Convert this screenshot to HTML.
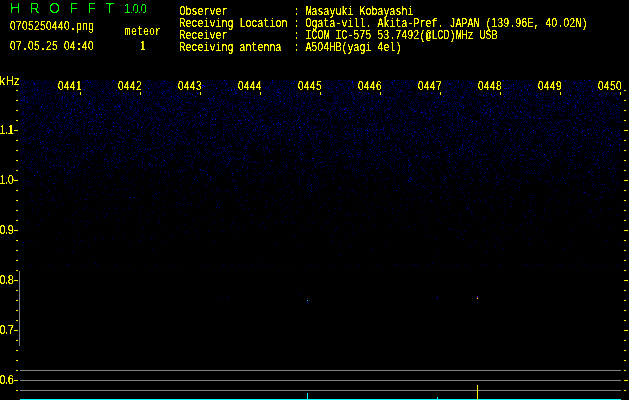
<!DOCTYPE html>
<html><head><meta charset="utf-8"><title>HROFFT 1.0.0</title>
<style>
html,body{margin:0;padding:0;background:#000;}
body{width:629px;height:400px;overflow:hidden;position:relative;color:#ff0;}
#txt{position:absolute;left:0;top:0;width:629px;height:400px;filter:url(#cr)}
.l{position:absolute;font-family:"Liberation Sans",sans-serif;font-size:10px;line-height:12px;height:12px;white-space:pre;letter-spacing:0.438px;transform:scaleY(1.25);transform-origin:0 0}
.t{display:inline-block;font-family:"Liberation Mono",monospace;font-size:10px;line-height:12px;letter-spacing:0;transform:scaleY(1.088);transform-origin:0 8.67px;vertical-align:baseline}
.w{display:inline-block;width:6px;letter-spacing:0;font-family:"Liberation Sans",sans-serif;font-size:9.2px;line-height:12px;vertical-align:baseline;transform-origin:0 8.67px;transform:scale(0.72,1.088)}
.s{position:absolute;font-family:"Liberation Sans",sans-serif;white-space:pre;}
.g{color:#0f0;}
.xl{top:79px}
.yl{left:-0.5px;font-size:11px;line-height:14px;letter-spacing:-0.5px;transform:scaleY(1.14);transform-origin:0 0}
svg{position:absolute;left:0;top:0}
</style></head><body>
<svg width="629" height="400" viewBox="0 0 629 400" shape-rendering="crispEdges">
<defs><filter id="cr" x="0" y="0" width="100%" height="100%" color-interpolation-filters="sRGB"><feComponentTransfer><feFuncA type="linear" slope="6" intercept="-2.0"/></feComponentTransfer></filter>
<filter id="cr2" x="0" y="0" width="100%" height="100%" color-interpolation-filters="sRGB"><feComponentTransfer><feFuncA type="linear" slope="6" intercept="-3"/></feComponentTransfer></filter></defs>
<g fill="none" stroke-width="1" transform="translate(0,0.5)">
<path stroke="#000030" d="M21 80h1h1m1 0h1m4 0h1m1 0h1h1m2 0h1m2 0h1m4 0h1h1m15 0h1m1 0h1m5 0h1m2 0h1m10 0h1m1 0h1h1h1m2 0h1m4 0h1h1m1 0h1m4 0h1m9 0h1m6 0h1m10 0h1m4 0h1m4 0h1m6 0h1h1m8 0h1h1m5 0h1h1m17 0h1h1m5 0h1m3 0h1h1m1 0h1m4 0h1m1 0h1m9 0h1m4 0h1h1h1m1 0h1m3 0h1m6 0h1m1 0h1m3 0h1m1 0h1m3 0h1m3 0h1h1m12 0h1m18 0h1m7 0h1m1 0h1m3 0h1m1 0h1m6 0h1m2 0h1m2 0h1m2 0h1h1m4 0h1m2 0h1m1 0h1h1m7 0h1m3 0h1m1 0h1m1 0h1h1m2 0h1h1m3 0h1h1m3 0h1m11 0h1m8 0h1m2 0h1m5 0h1m15 0h1m2 0h1h1m2 0h1m8 0h1h1h1m1 0h1m2 0h1m9 0h1m4 0h1m2 0h1m6 0h1m6 0h1m8 0h1m1 0h1h1m9 0h1m2 0h1m2 0h1m4 0h1m2 0h1m3 0h1m1 0h1m5 0h1m3 0h1m8 0h1m3 0h1m1 0h1m1 0h1m3 0h1m8 0h1m2 0h1h1m2 0h1m3 0h1m4 0h1m4 0h1m2 0h1m3 0h1m6 0h1m2 0h1h1m5 0h1m4 0h1m2 0h1h1m3 0h1m2 0h1m2 0h1m1 0h1m6 0h1m6 0h1M24 81h1m3 0h1m3 0h1m12 0h1m1 0h1m3 0h1m5 0h1m4 0h1m1 0h1h1m5 0h1m2 0h1m4 0h1m1 0h1m1 0h1m1 0h1m4 0h1m1 0h1m2 0h1m5 0h1m6 0h1m2 0h1h1m2 0h1m3 0h1h1m4 0h1m13 0h1m4 0h1m4 0h1m9 0h1m1 0h1m5 0h1m3 0h1m5 0h1m4 0h1m1 0h1h1m1 0h1m10 0h1h1m12 0h1m1 0h1m4 0h1m11 0h1m3 0h1m2 0h1m4 0h1m5 0h1m10 0h1m1 0h1m5 0h1m2 0h1m8 0h1h1m1 0h1h1m12 0h1m3 0h1m41 0h1m1 0h1m4 0h1m5 0h1m5 0h1m5 0h1h1m4 0h1m12 0h1h1m1 0h1h1m3 0h1m4 0h1m1 0h1m2 0h1h1m1 0h1h1m2 0h1h1m4 0h1m1 0h1m3 0h1m1 0h1m7 0h1m3 0h1m2 0h1m1 0h1m3 0h1m6 0h1h1m9 0h1m6 0h1m9 0h1m9 0h1m3 0h1m5 0h1h1m5 0h1m3 0h1m1 0h1h1m2 0h1m3 0h1m3 0h1m12 0h1m9 0h1m6 0h1m2 0h1m16 0h1m23 0h1m6 0h1m1 0h1m5 0h1h1m2 0h1M34 82h1h1m1 0h1m2 0h1h1m6 0h1m2 0h1m3 0h1m2 0h1m2 0h1h1m1 0h1m7 0h1m4 0h1m5 0h1m8 0h1m2 0h1m10 0h1m2 0h1m7 0h1m6 0h1m7 0h1m1 0h1m1 0h1m3 0h1h1m5 0h1m8 0h1m8 0h1m3 0h1m9 0h1m1 0h1m14 0h1m4 0h1m2 0h1h1m2 0h1m2 0h1m6 0h1m2 0h1h1m9 0h1m6 0h1m3 0h1m4 0h1m6 0h1m5 0h1m2 0h1m2 0h1m2 0h1m20 0h1h1m2 0h1h1m4 0h1m6 0h1m2 0h1m1 0h1m6 0h1m6 0h1h1m2 0h1m4 0h1h1m7 0h1m9 0h1m3 0h1m5 0h1h1m1 0h1m1 0h1m3 0h1m3 0h1m9 0h1m5 0h1m8 0h1m2 0h1m1 0h1m7 0h1m1 0h1m7 0h1m1 0h1h1m2 0h1h1m3 0h1m2 0h1m6 0h1m4 0h1m18 0h1m9 0h1m1 0h1m3 0h1m5 0h1m4 0h1h1m4 0h1m15 0h1m5 0h1m5 0h1h1m7 0h1m3 0h1m3 0h1h1m8 0h1m7 0h1m6 0h1h1m1 0h1m4 0h1m4 0h1m10 0h1m2 0h1m3 0h1h1m5 0h1m1 0h1h1h1M21 83h1m2 0h1h1m7 0h1m2 0h1m9 0h1m3 0h1h1m11 0h1m15 0h1h1m12 0h1h1m2 0h1m2 0h1m4 0h1m8 0h1m4 0h1m11 0h1m8 0h1m5 0h1m13 0h1m3 0h1h1h1m11 0h1m2 0h1m17 0h1m5 0h1m15 0h1m2 0h1m2 0h1m3 0h1h1h1m3 0h1m8 0h1m4 0h1m3 0h1m7 0h1m3 0h1m5 0h1m9 0h1m24 0h1m17 0h1m2 0h1m10 0h1m3 0h1m5 0h1m3 0h1m18 0h1m8 0h1m6 0h1m9 0h1m7 0h1m8 0h1m2 0h1h1m3 0h1m1 0h1m7 0h1m4 0h1m1 0h1h1h1h1h1m7 0h1m10 0h1m3 0h1h1m10 0h1m1 0h1m4 0h1m6 0h1m2 0h1m1 0h1m1 0h1m3 0h1m4 0h1m7 0h1h1h1m15 0h1m13 0h1m2 0h1m5 0h1h1m8 0h1m6 0h1h1m10 0h1m3 0h1m2 0h1m6 0h1m2 0h1m4 0h1m6 0h1h1M25 84h1m1 0h1m12 0h1m2 0h1m3 0h1m10 0h1m2 0h1h1m7 0h1h1h1m8 0h1m1 0h1m10 0h1h1m1 0h1m1 0h1m13 0h1m2 0h1m11 0h1m9 0h1m27 0h1h1m1 0h1h1m6 0h1m3 0h1m20 0h1m6 0h1m2 0h1m1 0h1m13 0h1m4 0h1m3 0h1h1m11 0h1m12 0h1m6 0h1m2 0h1m7 0h1m5 0h1m11 0h1m3 0h1h1m5 0h1h1h1m2 0h1m21 0h1m3 0h1h1m7 0h1m1 0h1h1m9 0h1m4 0h1m1 0h1m2 0h1m2 0h1m7 0h1h1m7 0h1m8 0h1m3 0h1m5 0h1m6 0h1h1m12 0h1m5 0h1m2 0h1m24 0h1m5 0h1m4 0h1m12 0h1m10 0h1m4 0h1m1 0h1h1m11 0h1m1 0h1m1 0h1m5 0h1m4 0h1m2 0h1h1m4 0h1m8 0h1m6 0h1m6 0h1m1 0h1m13 0h1m3 0h1m7 0h1h1h1h1m15 0h1m2 0h1M23 85h1m7 0h1m3 0h1m1 0h1m4 0h1m10 0h1m5 0h1m2 0h1m2 0h1m4 0h1m3 0h1m6 0h1m23 0h1m2 0h1m2 0h1m1 0h1m2 0h1m1 0h1m2 0h1m10 0h1h1m1 0h1h1m3 0h1m7 0h1m1 0h1h1m13 0h1h1m2 0h1m4 0h1m21 0h1h1m1 0h1h1m3 0h1m4 0h1m5 0h1m8 0h1m17 0h1h1m12 0h1m7 0h1m1 0h1m10 0h1m16 0h1m2 0h1m7 0h1m8 0h1m19 0h1m3 0h1m2 0h1m3 0h1m5 0h1h1m7 0h1m9 0h1m12 0h1m4 0h1m4 0h1m5 0h1m20 0h1m5 0h1m4 0h1m5 0h1m4 0h1m7 0h1m9 0h1m2 0h1m1 0h1m5 0h1m1 0h1h1h1h1m10 0h1m5 0h1h1m1 0h1m11 0h1m8 0h1m19 0h1m21 0h1m6 0h1m17 0h1m3 0h1m2 0h1m18 0h1m2 0h1m2 0h1M24 86h1m3 0h1m11 0h1m3 0h1m3 0h1m2 0h1m11 0h1m1 0h1m4 0h1m1 0h1m4 0h1m6 0h1m6 0h1m12 0h1m7 0h1m12 0h1m6 0h1m27 0h1m5 0h1m4 0h1m3 0h1m16 0h1m1 0h1m15 0h1m4 0h1m1 0h1m14 0h1m18 0h1m28 0h1m5 0h1m18 0h1m2 0h1m8 0h1m9 0h1m1 0h1m12 0h1m19 0h1m5 0h1m15 0h1m3 0h1m2 0h1m1 0h1m5 0h1h1m5 0h1m15 0h1m16 0h1m2 0h1m3 0h1m14 0h1m22 0h1m16 0h1m3 0h1h1m5 0h1m7 0h1m12 0h1m7 0h1m2 0h1m16 0h1m8 0h1m24 0h1m7 0h1m10 0h1M20 87h1m4 0h1m3 0h1m18 0h1m17 0h1m15 0h1h1m11 0h1m1 0h1m5 0h1m4 0h1m7 0h1m1 0h1h1m8 0h1m3 0h1m13 0h1m2 0h1m5 0h1m1 0h1m7 0h1m4 0h1m8 0h1m1 0h1m21 0h1m15 0h1m13 0h1m7 0h1m2 0h1m6 0h1m9 0h1m1 0h1m2 0h1h1m7 0h1m14 0h1m1 0h1m2 0h1m8 0h1m21 0h1h1m9 0h1m2 0h1m9 0h1m6 0h1m9 0h1m6 0h1m10 0h1m4 0h1h1m4 0h1m10 0h1m11 0h1h1m11 0h1h1m10 0h1m4 0h1m1 0h1m2 0h1m7 0h1m2 0h1m13 0h1m23 0h1m6 0h1m6 0h1h1m5 0h1m8 0h1m7 0h1m1 0h1h1m18 0h1m7 0h1m15 0h1m1 0h1m14 0h1m7 0h1m2 0h1m4 0h1M22 88h1m5 0h1m6 0h1m18 0h1m7 0h1m11 0h1m2 0h1m34 0h1m8 0h1m9 0h1m13 0h1m117 0h1m3 0h1m14 0h1m2 0h1m8 0h1m1 0h1m29 0h1m4 0h1m2 0h1m31 0h1m17 0h1m20 0h1h1m12 0h1m1 0h1m11 0h1m1 0h1m6 0h1m32 0h1h1m6 0h1h1m34 0h1m18 0h1m4 0h1m10 0h1m4 0h1m21 0h1m26 0h1m6 0h1M20 89h1h1m31 0h1m24 0h1h1m10 0h1m5 0h1m37 0h1m10 0h1m2 0h1m13 0h1m4 0h1m10 0h1m2 0h1m8 0h1m10 0h1m9 0h1m25 0h1m7 0h1m8 0h1m21 0h1m4 0h1m24 0h1m10 0h1h1m9 0h1m6 0h1m31 0h1m33 0h1m16 0h1m8 0h1m22 0h1m4 0h1m31 0h1m2 0h1m16 0h1m31 0h1m23 0h1m19 0h1m1 0h1m11 0h1h1m2 0h1m9 0h1m7 0h1M41 90h1m20 0h1m5 0h1m3 0h1h1m3 0h1m1 0h1m5 0h1m35 0h1m2 0h1m31 0h1h1m1 0h1m9 0h1m19 0h1m12 0h1m4 0h1m13 0h1m4 0h1h1m6 0h1m16 0h1m31 0h1m5 0h1m5 0h1m31 0h1m19 0h1m16 0h1m2 0h1h1m6 0h1m7 0h1m43 0h1m13 0h1m3 0h1m19 0h1m4 0h1m17 0h1m2 0h1m10 0h1m9 0h1m24 0h1m18 0h1h1m8 0h1m16 0h1m10 0h1m10 0h1M58 91h1m5 0h1m4 0h1m6 0h1m2 0h1h1m5 0h1m2 0h1m1 0h1m11 0h1m19 0h1m32 0h1m45 0h1m7 0h1m4 0h1m43 0h1m3 0h1m6 0h1m1 0h1m9 0h1m3 0h1m46 0h1m14 0h1m48 0h1m1 0h1m3 0h1m2 0h1m15 0h1m9 0h1m10 0h1m30 0h1m51 0h1m1 0h1m2 0h1m37 0h1m30 0h1M20 92h1h1m34 0h1m5 0h1m64 0h1m16 0h1m26 0h1m10 0h1m8 0h1h1m39 0h1m42 0h1h1m9 0h1m2 0h1m3 0h1m37 0h1m9 0h1h1m45 0h1m12 0h1m1 0h1m27 0h1m4 0h1m7 0h1m2 0h1m9 0h1m5 0h1m20 0h1m41 0h1m1 0h1m15 0h1m73 0h1M90 93h1m40 0h1m80 0h1m31 0h1m1 0h1m233 0h1m48 0h1m78 0h1"/>
<path stroke="#000038" d="M20 80h1m5 0h1m9 0h1m2 0h1h1m5 0h1m2 0h1m6 0h1m2 0h1m4 0h1m7 0h1m23 0h1m23 0h1m20 0h1m8 0h1m11 0h1m25 0h1m9 0h1m13 0h1m5 0h1m11 0h1m1 0h1m2 0h1m17 0h1m5 0h1m19 0h1m4 0h1m2 0h1m6 0h1m24 0h1m31 0h1m32 0h1m1 0h1m14 0h1m3 0h1m41 0h1m5 0h1m8 0h1m12 0h1m5 0h1m3 0h1m1 0h1m9 0h1m4 0h1m9 0h1m17 0h1m4 0h1m24 0h1m5 0h1m4 0h1m2 0h1m13 0h1m6 0h1m13 0h1m6 0h1M20 81h1m8 0h1m3 0h1m10 0h1m3 0h1m24 0h1m10 0h1m36 0h1m31 0h1m41 0h1m5 0h1m5 0h1m16 0h1h1m1 0h1m2 0h1m19 0h1m18 0h1m2 0h1m2 0h1m3 0h1m10 0h1m2 0h1m2 0h1m1 0h1m16 0h1m13 0h1m2 0h1m1 0h1m13 0h1m31 0h1m8 0h1m21 0h1m13 0h1m3 0h1m27 0h1m4 0h1h1m3 0h1m13 0h1m16 0h1m2 0h1m2 0h1m47 0h1m21 0h1h1m14 0h1m4 0h1m1 0h1m1 0h1m2 0h1m1 0h1h1M20 82h1m9 0h1m12 0h1m3 0h1m5 0h1h1m12 0h1m7 0h1m8 0h1h1m1 0h1m32 0h1m7 0h1m6 0h1m13 0h1m5 0h1m1 0h1m6 0h1m9 0h1m1 0h1m12 0h1m4 0h1m22 0h1m1 0h1m4 0h1m11 0h1m5 0h1m20 0h1m10 0h1h1h1m11 0h1m13 0h1m2 0h1h1m5 0h1m17 0h1m4 0h1m22 0h1m1 0h1m2 0h1m18 0h1m1 0h1m11 0h1m13 0h1h1m7 0h1m31 0h1m34 0h1m8 0h1m1 0h1m26 0h1m6 0h1m11 0h1m4 0h1m9 0h1m2 0h1m10 0h1m31 0h1m3 0h1M20 83h1m8 0h1m10 0h1m1 0h1m1 0h1m19 0h1m11 0h1m48 0h1m1 0h1h1m14 0h1m9 0h1m1 0h1m2 0h1m8 0h1m12 0h1m1 0h1m4 0h1m29 0h1m1 0h1m20 0h1m1 0h1m5 0h1m7 0h1m24 0h1m14 0h1h1m4 0h1h1m6 0h1h1m1 0h1m14 0h1m4 0h1m12 0h1m24 0h1m2 0h1m17 0h1m8 0h1m1 0h1m28 0h1m3 0h1m9 0h1m3 0h1h1h1m9 0h1m7 0h1m4 0h1m13 0h1m17 0h1m21 0h1m7 0h1m1 0h1m3 0h1m26 0h1m7 0h1m3 0h1h1m1 0h1m1 0h1m3 0h1m7 0h1m1 0h1m1 0h1m2 0h1m2 0h1m6 0h1M21 84h1m1 0h1m4 0h1m4 0h1m2 0h1m22 0h1m6 0h1m23 0h1m15 0h1m23 0h1m4 0h1m12 0h1m5 0h1m6 0h1m2 0h1m7 0h1m5 0h1m10 0h1m6 0h1m3 0h1m6 0h1m2 0h1m9 0h1m6 0h1m4 0h1m21 0h1m17 0h1m3 0h1m8 0h1m15 0h1m5 0h1m5 0h1m16 0h1m1 0h1m1 0h1m8 0h1m2 0h1m8 0h1m21 0h1m5 0h1m4 0h1m6 0h1m7 0h1m3 0h1m9 0h1m4 0h1h1m1 0h1m2 0h1h1m14 0h1m4 0h1m10 0h1h1m1 0h1m8 0h1m14 0h1m7 0h1m12 0h1m3 0h1m4 0h1m12 0h1m7 0h1m3 0h1h1m1 0h1m2 0h1m2 0h1m8 0h1m2 0h1m3 0h1m5 0h1h1m17 0h1m20 0h1M20 85h1m7 0h1m4 0h1m16 0h1m4 0h1m4 0h1m3 0h1m6 0h1h1m2 0h1m22 0h1m4 0h1m3 0h1m6 0h1m10 0h1m3 0h1m4 0h1m3 0h1m15 0h1m6 0h1h1m27 0h1m4 0h1m9 0h1m11 0h1m16 0h1m2 0h1m13 0h1m22 0h1m3 0h1m5 0h1m19 0h1m4 0h1m1 0h1m3 0h1m1 0h1m9 0h1m2 0h1m1 0h1m33 0h1m11 0h1m10 0h1m14 0h1m5 0h1m8 0h1m4 0h1m19 0h1m7 0h1m5 0h1m9 0h1m21 0h1h1m19 0h1m1 0h1m5 0h1m6 0h1m14 0h1m2 0h1h1m7 0h1h1m25 0h1m2 0h1m1 0h1m7 0h1m9 0h1m4 0h1M21 86h1m4 0h1m2 0h1m8 0h1m3 0h1m4 0h1m26 0h1m3 0h1m6 0h1m6 0h1h1m12 0h1m9 0h1m2 0h1m7 0h1m5 0h1m12 0h1m1 0h1m10 0h1m2 0h1m14 0h1m27 0h1m7 0h1h1m20 0h1h1m10 0h1m1 0h1m2 0h1m1 0h1h1m6 0h1m3 0h1m8 0h1m6 0h1h1m1 0h1m3 0h1m1 0h1m56 0h1m3 0h1h1m11 0h1m1 0h1m7 0h1h1m24 0h1h1m1 0h1m4 0h1m11 0h1m9 0h1m4 0h1h1h1m8 0h1m10 0h1m1 0h1m6 0h1m4 0h1m3 0h1m8 0h1m3 0h1m3 0h1m4 0h1m8 0h1m1 0h1h1m18 0h1m2 0h1m3 0h1m1 0h1m10 0h1m1 0h1m3 0h1h1h1m4 0h1m33 0h1h1m2 0h1m10 0h1m5 0h1M21 87h1m12 0h1m2 0h1m7 0h1m3 0h1m4 0h1m24 0h1m11 0h1h1m11 0h1m1 0h1m3 0h1m1 0h1m4 0h1m13 0h1m15 0h1m3 0h1h1m5 0h1m5 0h1m3 0h1m2 0h1m4 0h1m1 0h1m7 0h1m39 0h1m2 0h1m2 0h1m4 0h1h1m18 0h1m11 0h1m6 0h1m3 0h1m1 0h1m3 0h1m1 0h1m9 0h1m1 0h1m30 0h1m13 0h1m2 0h1m33 0h1m1 0h1m9 0h1m15 0h1m24 0h1h1m3 0h1m1 0h1m13 0h1m15 0h1m5 0h1m7 0h1m1 0h1m6 0h1m10 0h1m12 0h1m2 0h1m5 0h1m3 0h1m19 0h1m1 0h1m9 0h1m8 0h1m7 0h1m6 0h1m2 0h1m1 0h1m2 0h1h1m13 0h1M55 88h1m10 0h1h1m11 0h1m6 0h1m7 0h1m5 0h1m1 0h1m1 0h1m2 0h1h1m1 0h1m7 0h1m4 0h1m5 0h1m5 0h1m34 0h1h1m14 0h1m4 0h1m1 0h1m7 0h1h1m4 0h1m3 0h1m14 0h1m13 0h1h1m8 0h1m4 0h1m2 0h1m2 0h1m18 0h1m7 0h1m13 0h1m2 0h1m7 0h1m4 0h1m1 0h1h1m7 0h1m19 0h1m2 0h1m4 0h1h1m9 0h1m3 0h1m10 0h1m10 0h1h1m22 0h1m5 0h1m4 0h1m13 0h1m2 0h1m4 0h1m1 0h1m2 0h1m8 0h1m5 0h1m21 0h1m11 0h1m5 0h1m1 0h1m2 0h1h1m12 0h1m5 0h1m16 0h1m2 0h1m3 0h1m2 0h1h1m9 0h1m4 0h1m3 0h1m7 0h1m1 0h1m23 0h1m1 0h1M31 89h1m6 0h1m3 0h1m7 0h1m1 0h1m5 0h1m16 0h1m5 0h1m11 0h1m9 0h1m6 0h1h1m3 0h1m21 0h1h1m14 0h1m11 0h1m2 0h1h1m17 0h1m3 0h1m12 0h1m2 0h1h1m5 0h1h1h1m18 0h1m6 0h1m1 0h1m3 0h1m3 0h1m20 0h1m3 0h1m11 0h1m1 0h1m4 0h1m11 0h1m12 0h1m4 0h1m4 0h1m4 0h1m7 0h1m4 0h1m12 0h1m2 0h1m21 0h1m1 0h1m6 0h1m29 0h1m6 0h1m13 0h1m4 0h1m30 0h1m2 0h1m1 0h1m7 0h1m8 0h1m6 0h1m7 0h1m12 0h1h1m11 0h1m1 0h1m16 0h1m4 0h1m8 0h1m1 0h1m10 0h1m1 0h1m1 0h1m13 0h1M27 90h1m4 0h1h1m4 0h1m3 0h1m3 0h1m1 0h1m6 0h1m5 0h1m7 0h1h1h1m32 0h1m18 0h1m2 0h1m15 0h1m11 0h1m6 0h1m4 0h1m3 0h1m6 0h1m1 0h1m6 0h1m4 0h1m4 0h1m1 0h1m9 0h1m2 0h1m10 0h1m10 0h1m3 0h1h1h1m5 0h1m11 0h1m8 0h1h1m10 0h1m8 0h1m4 0h1m8 0h1m4 0h1h1m3 0h1m16 0h1m1 0h1m10 0h1m2 0h1m1 0h1m14 0h1m3 0h1h1m5 0h1m1 0h1m9 0h1m15 0h1m5 0h1m15 0h1m1 0h1m5 0h1m2 0h1m12 0h1m25 0h1m16 0h1m8 0h1m1 0h1m12 0h1m18 0h1m2 0h1m4 0h1m2 0h1m9 0h1m5 0h1m1 0h1m7 0h1m5 0h1m1 0h1m7 0h1h1m1 0h1h1m2 0h1m6 0h1m13 0h1m2 0h1m1 0h1h1M22 91h1m8 0h1m5 0h1m15 0h1h1m1 0h1m4 0h1m20 0h1m25 0h1m1 0h1m4 0h1m6 0h1m2 0h1h1m16 0h1m3 0h1m3 0h1m14 0h1m4 0h1m3 0h1m1 0h1m4 0h1h1m1 0h1h1m1 0h1h1m5 0h1m5 0h1m7 0h1m3 0h1m3 0h1m4 0h1m6 0h1m16 0h1h1m2 0h1h1m5 0h1m4 0h1m14 0h1m1 0h1m8 0h1m2 0h1m3 0h1m10 0h1m2 0h1m9 0h1m2 0h1m5 0h1m2 0h1m12 0h1m10 0h1m7 0h1m3 0h1m7 0h1h1m3 0h1m3 0h1m4 0h1h1m5 0h1m19 0h1m4 0h1m6 0h1m8 0h1m6 0h1h1m23 0h1h1m22 0h1h1m29 0h1m9 0h1m14 0h1m6 0h1m5 0h1m3 0h1m4 0h1h1m7 0h1h1m4 0h1h1m5 0h1m7 0h1m2 0h1m1 0h1m11 0h1M25 92h1m6 0h1m2 0h1m3 0h1m3 0h1m6 0h1h1m1 0h1m5 0h1h1h1m9 0h1m1 0h1m1 0h1m1 0h1m7 0h1m20 0h1m1 0h1h1m6 0h1m11 0h1m4 0h1m17 0h1m1 0h1m2 0h1m1 0h1h1h1m4 0h1m17 0h1h1m14 0h1m11 0h1m2 0h1m14 0h1m5 0h1m1 0h1h1m5 0h1m2 0h1m2 0h1m1 0h1m3 0h1h1m2 0h1m10 0h1m13 0h1m5 0h1m5 0h1h1m1 0h1m6 0h1m12 0h1m2 0h1m12 0h1m26 0h1m2 0h1m4 0h1m9 0h1m4 0h1m10 0h1m14 0h1m11 0h1m5 0h1m1 0h1m9 0h1m6 0h1m5 0h1m8 0h1h1m6 0h1m15 0h1m2 0h1m11 0h1m1 0h1m2 0h1m4 0h1m9 0h1h1m5 0h1h1m2 0h1h1h1m15 0h1m13 0h1h1m1 0h1h1m8 0h1m1 0h1h1m10 0h1m14 0h1m3 0h1m6 0h1h1M20 93h1m4 0h1m12 0h1m10 0h1m5 0h1m7 0h1h1m1 0h1m3 0h1m5 0h1m1 0h1m13 0h1h1m7 0h1m15 0h1h1h1m4 0h1m12 0h1m1 0h1m8 0h1h1m1 0h1m6 0h1m4 0h1m1 0h1m4 0h1h1m5 0h1m4 0h1m2 0h1h1m15 0h1h1m10 0h1h1m6 0h1m3 0h1m5 0h1m8 0h1m18 0h1m1 0h1m1 0h1m8 0h1h1m6 0h1m4 0h1h1h1m2 0h1m2 0h1m7 0h1m3 0h1m3 0h1h1m2 0h1m3 0h1m8 0h1m12 0h1h1h1m19 0h1m14 0h1m7 0h1h1m2 0h1m7 0h1m5 0h1m8 0h1m10 0h1m3 0h1m4 0h1m6 0h1m1 0h1m7 0h1m7 0h1m6 0h1m4 0h1m17 0h1m7 0h1m4 0h1m4 0h1m1 0h1h1m10 0h1m11 0h1h1m3 0h1m3 0h1h1m4 0h1m8 0h1m4 0h1m5 0h1m10 0h1m3 0h1m4 0h1m1 0h1m11 0h1h1m1 0h1m14 0h1M23 94h1m7 0h1m2 0h1m3 0h1m4 0h1m1 0h1m2 0h1m2 0h1m18 0h1m4 0h1m13 0h1m4 0h1m10 0h1m21 0h1m1 0h1m1 0h1m2 0h1m5 0h1m1 0h1m1 0h1m6 0h1m9 0h1m1 0h1m5 0h1m2 0h1h1m1 0h1m3 0h1m1 0h1m6 0h1h1m15 0h1h1m26 0h1m1 0h1m5 0h1m4 0h1m2 0h1m19 0h1m1 0h1h1m3 0h1m4 0h1m3 0h1m1 0h1m8 0h1m3 0h1m1 0h1m7 0h1m3 0h1m2 0h1m10 0h1m10 0h1m12 0h1m4 0h1m8 0h1m1 0h1m6 0h1m2 0h1h1m3 0h1m15 0h1m2 0h1m1 0h1m10 0h1m6 0h1h1h1m7 0h1m3 0h1h1h1h1m6 0h1m5 0h1m5 0h1m4 0h1h1m2 0h1m8 0h1m3 0h1m2 0h1m1 0h1m12 0h1h1m3 0h1m6 0h1h1m2 0h1m10 0h1m8 0h1m8 0h1m2 0h1m11 0h1m5 0h1h1m2 0h1m32 0h1m14 0h1m1 0h1M20 95h1m8 0h1m4 0h1m3 0h1m4 0h1m1 0h1m1 0h1m6 0h1h1m13 0h1m20 0h1h1m3 0h1m2 0h1m15 0h1m1 0h1m5 0h1m5 0h1m1 0h1m11 0h1m28 0h1m4 0h1m4 0h1m5 0h1m5 0h1m6 0h1m8 0h1m3 0h1m5 0h1h1m9 0h1h1h1m10 0h1m10 0h1m3 0h1m2 0h1m2 0h1m5 0h1m1 0h1m5 0h1h1m1 0h1m15 0h1m1 0h1m5 0h1m2 0h1m1 0h1m5 0h1m10 0h1m5 0h1m3 0h1m1 0h1m2 0h1m4 0h1m4 0h1h1m4 0h1m2 0h1m1 0h1m7 0h1m3 0h1h1m6 0h1m15 0h1m4 0h1m4 0h1m4 0h1m3 0h1h1m2 0h1m5 0h1m5 0h1m2 0h1m9 0h1h1h1h1m1 0h1m3 0h1m2 0h1m20 0h1m10 0h1m17 0h1m2 0h1m2 0h1m8 0h1m6 0h1m11 0h1m4 0h1m14 0h1m10 0h1m10 0h1m2 0h1m3 0h1m6 0h1m3 0h1M23 96h1m3 0h1m1 0h1m1 0h1m1 0h1m8 0h1m2 0h1m9 0h1m8 0h1m6 0h1m22 0h1m9 0h1m1 0h1m6 0h1m9 0h1h1h1m4 0h1m7 0h1m8 0h1m7 0h1m1 0h1m9 0h1m2 0h1m7 0h1m3 0h1m14 0h1m5 0h1m28 0h1m1 0h1m10 0h1m34 0h1m9 0h1m7 0h1h1m17 0h1m15 0h1m2 0h1m1 0h1m11 0h1m18 0h1m1 0h1m6 0h1m1 0h1m1 0h1h1m4 0h1m10 0h1m2 0h1m4 0h1m1 0h1m8 0h1m8 0h1m4 0h1m13 0h1m1 0h1m4 0h1m2 0h1m4 0h1m6 0h1m26 0h1m13 0h1m26 0h1m1 0h1m4 0h1m7 0h1m1 0h1m4 0h1m16 0h1m19 0h1m6 0h1M21 97h1m4 0h1m6 0h1m4 0h1m32 0h1m6 0h1m2 0h1m5 0h1m6 0h1h1m4 0h1m12 0h1h1m1 0h1m8 0h1h1m8 0h1m8 0h1m14 0h1m4 0h1m5 0h1h1m7 0h1m11 0h1m20 0h1m3 0h1m1 0h1h1m5 0h1m26 0h1m3 0h1m3 0h1m17 0h1h1m10 0h1m9 0h1m9 0h1h1m7 0h1m1 0h1m25 0h1h1m5 0h1m8 0h1h1m7 0h1m8 0h1m4 0h1m6 0h1m8 0h1m2 0h1m11 0h1m7 0h1m15 0h1m11 0h1m19 0h1m4 0h1m14 0h1m9 0h1m1 0h1m3 0h1m3 0h1h1h1m6 0h1m17 0h1m1 0h1m4 0h1m4 0h1m5 0h1m3 0h1m5 0h1m7 0h1m9 0h1m13 0h1m7 0h1M26 98h1m3 0h1h1m16 0h1m1 0h1m11 0h1m3 0h1m14 0h1h1m8 0h1m12 0h1m9 0h1m9 0h1m1 0h1m35 0h1m1 0h1m1 0h1m14 0h1m9 0h1m8 0h1m6 0h1m41 0h1m1 0h1m18 0h1m6 0h1m10 0h1m12 0h1h1m15 0h1m19 0h1m8 0h1m20 0h1m8 0h1m5 0h1m7 0h1h1m25 0h1m8 0h1m4 0h1m6 0h1m12 0h1m4 0h1m3 0h1m4 0h1m2 0h1m6 0h1m11 0h1m15 0h1m2 0h1m24 0h1m18 0h1m3 0h1m3 0h1m9 0h1m14 0h1h1m15 0h1m11 0h1m1 0h1m4 0h1M27 99h1m5 0h1m4 0h1m19 0h1h1m12 0h1m12 0h1m4 0h1m1 0h1m4 0h1m9 0h1m8 0h1m17 0h1m1 0h1m13 0h1m6 0h1m1 0h1m9 0h1m6 0h1m8 0h1m2 0h1m19 0h1m4 0h1m32 0h1m9 0h1m18 0h1m33 0h1m6 0h1m2 0h1m14 0h1h1m2 0h1m44 0h1m37 0h1m27 0h1m33 0h1m1 0h1h1m9 0h1m2 0h1m21 0h1h1m7 0h1m12 0h1m11 0h1m2 0h1m5 0h1m11 0h1m22 0h1M45 100h1h1m9 0h1m5 0h1m5 0h1m1 0h1m6 0h1m1 0h1m6 0h1m8 0h1m12 0h1m15 0h1m8 0h1m10 0h1m29 0h1m49 0h1m10 0h1m32 0h1m9 0h1m10 0h1m2 0h1m9 0h1m6 0h1m24 0h1m8 0h1m27 0h1m6 0h1m13 0h1m38 0h1m5 0h1m8 0h1m30 0h1m35 0h1m22 0h1m1 0h1m5 0h1m4 0h1m12 0h1m10 0h1m2 0h1m3 0h1m4 0h1m14 0h1h1m18 0h1M24 101h1m1 0h1m5 0h1m7 0h1m36 0h1m31 0h1m7 0h1m6 0h1m26 0h1m5 0h1m19 0h1m10 0h1m1 0h1m12 0h1m37 0h1m1 0h1m6 0h1m39 0h1m13 0h1m40 0h1m10 0h1m3 0h1m20 0h1h1m26 0h1m3 0h1m7 0h1h1m7 0h1m7 0h1h1m5 0h1h1h1m23 0h1m5 0h1m15 0h1m9 0h1h1m15 0h1m5 0h1m7 0h1m36 0h1m29 0h1m2 0h1m13 0h1M26 102h1m1 0h1m4 0h1m2 0h1m4 0h1m8 0h1m14 0h1m5 0h1m7 0h1m12 0h1m16 0h1m9 0h1m18 0h1m42 0h1m4 0h1m2 0h1m49 0h1m15 0h1m49 0h1h1m8 0h1m15 0h1m6 0h1m6 0h1m44 0h1m96 0h1m4 0h1m6 0h1m6 0h1m5 0h1m5 0h1m8 0h1m9 0h1m12 0h1m1 0h1m16 0h1m4 0h1m44 0h1M30 103h1m33 0h1m20 0h1m5 0h1m12 0h1m32 0h1m37 0h1m13 0h1m11 0h1m28 0h1h1m6 0h1m6 0h1m16 0h1m16 0h1m19 0h1m25 0h1h1m2 0h1m13 0h1m31 0h1h1m35 0h1m15 0h1m8 0h1m9 0h1m11 0h1m16 0h1m49 0h1m9 0h1m18 0h1m27 0h1m1 0h1m16 0h1m6 0h1h1m7 0h1M33 104h1h1m54 0h1m4 0h1m14 0h1m3 0h1m13 0h1m13 0h1m5 0h1m60 0h1m18 0h1m69 0h1m3 0h1m11 0h1m1 0h1m21 0h1m25 0h1m46 0h1m2 0h1m16 0h1m20 0h1h1h1m2 0h1m50 0h1m12 0h1m15 0h1m17 0h1m21 0h1m21 0h1M35 105h1m10 0h1m6 0h1m7 0h1m8 0h1m49 0h1m7 0h1m12 0h1m47 0h1m38 0h1m14 0h1m24 0h1h1m12 0h1m2 0h1m7 0h1m82 0h1m24 0h1m17 0h1m53 0h1m16 0h1m83 0h1m4 0h1m26 0h1m1 0h1m2 0h1M22 106h1m45 0h1m22 0h1h1m23 0h1m21 0h1m2 0h1m11 0h1m22 0h1m12 0h1m9 0h1m12 0h1m5 0h1m8 0h1m67 0h1m59 0h1m7 0h1m2 0h1m57 0h1m35 0h1m23 0h1m54 0h1m5 0h1m4 0h1m41 0h1m15 0h1M129 107h1m4 0h1m6 0h1m68 0h1m8 0h1m34 0h1m6 0h1m3 0h1m50 0h1m28 0h1m7 0h1m27 0h1m13 0h1m26 0h1m13 0h1m52 0h1m45 0h1m13 0h1m38 0h1m4 0h1M31 108h1m11 0h1m49 0h1m148 0h1m11 0h1m14 0h1m50 0h1m13 0h1m13 0h1m78 0h1m34 0h1m83 0h1m10 0h1m27 0h1M154 109h1m120 0h1m192 0h1m5 0h1m85 0h1M172 110h1m27 0h1m22 0h1m52 0h1"/>
<path stroke="#000040" d="M79 80h1m10 0h1m15 0h1m93 0h1m72 0h1m28 0h1m22 0h1m2 0h1m84 0h1m10 0h1m4 0h1m26 0h1m20 0h1m36 0h1m9 0h1m16 0h1m72 0h1M58 81h1m46 0h1m10 0h1m15 0h1m14 0h1m24 0h1m19 0h1m7 0h1m65 0h1m56 0h1m2 0h1m10 0h1m45 0h1m2 0h1m49 0h1m3 0h1m4 0h1m20 0h1m2 0h1m1 0h1m49 0h1m31 0h1m32 0h1m13 0h1M26 82h1m17 0h1h1m48 0h1m42 0h1m10 0h1m3 0h1m1 0h1m104 0h1m19 0h1m4 0h1m40 0h1m50 0h1m3 0h1h1m19 0h1m44 0h1m16 0h1m5 0h1m2 0h1m16 0h1h1m3 0h1m27 0h1m15 0h1m27 0h1m1 0h1m23 0h1m2 0h1m13 0h1M38 83h1m9 0h1m12 0h1m16 0h1m6 0h1m4 0h1h1m52 0h1m26 0h1m20 0h1h1m15 0h1m25 0h1m16 0h1m18 0h1m18 0h1m24 0h1m26 0h1m4 0h1m20 0h1m16 0h1m62 0h1m8 0h1m5 0h1m9 0h1m10 0h1m15 0h1m45 0h1M37 84h1m4 0h1m1 0h1h1m3 0h1m5 0h1m7 0h1m5 0h1m6 0h1m8 0h1m1 0h1m4 0h1m14 0h1m13 0h1m1 0h1m21 0h1m10 0h1m5 0h1m22 0h1m6 0h1m18 0h1m3 0h1m5 0h1m19 0h1m10 0h1m33 0h1m37 0h1m2 0h1m68 0h1h1m16 0h1m16 0h1m6 0h1m6 0h1m2 0h1m4 0h1m25 0h1m1 0h1m29 0h1m3 0h1m37 0h1m25 0h1m27 0h1M21 85h1m46 0h1m4 0h1m27 0h1m18 0h1m3 0h1m6 0h1m7 0h1m46 0h1m4 0h1m33 0h1m43 0h1m5 0h1m42 0h1h1m2 0h1m10 0h1m6 0h1m41 0h1m4 0h1m27 0h1m5 0h1m14 0h1m9 0h1m14 0h1m17 0h1m1 0h1m17 0h1m5 0h1m18 0h1m14 0h1m3 0h1m19 0h1m28 0h1m3 0h1m12 0h1m2 0h1M52 86h1m5 0h1m2 0h1m4 0h1m22 0h1m17 0h1m2 0h1m28 0h1m4 0h1m9 0h1m2 0h1m5 0h1m15 0h1m9 0h1m8 0h1m39 0h1h1m6 0h1m3 0h1m84 0h1m2 0h1m7 0h1m116 0h1h1m46 0h1m4 0h1m35 0h1m5 0h1m21 0h1m7 0h1m19 0h1m1 0h1M38 87h1m3 0h1m55 0h1m23 0h1m70 0h1m11 0h1m17 0h1m7 0h1m17 0h1m35 0h1m8 0h1m47 0h1m18 0h1m2 0h1m30 0h1m5 0h1m23 0h1h1m1 0h1m8 0h1m1 0h1m15 0h1m11 0h1m15 0h1m13 0h1m2 0h1m7 0h1m2 0h1m8 0h1m93 0h1M20 88h1m31 0h1m10 0h1h1m31 0h1m29 0h1m24 0h1m21 0h1m3 0h1m50 0h1m35 0h1m1 0h1m11 0h1m2 0h1m21 0h1m3 0h1m30 0h1m11 0h1m12 0h1m1 0h1m16 0h1m5 0h1m28 0h1m16 0h1m1 0h1m4 0h1m18 0h1m3 0h1m30 0h1m18 0h1m17 0h1m14 0h1m9 0h1m10 0h1m3 0h1m4 0h1m16 0h1m9 0h1M23 89h1m10 0h1h1m4 0h1m30 0h1m30 0h1m11 0h1m4 0h1m16 0h1m27 0h1m21 0h1m1 0h1m4 0h1m15 0h1m16 0h1m9 0h1m1 0h1m7 0h1m2 0h1m11 0h1m5 0h1m6 0h1m26 0h1m41 0h1m22 0h1m10 0h1m2 0h1m36 0h1m10 0h1m5 0h1m4 0h1m25 0h1m14 0h1m14 0h1m13 0h1m5 0h1h1m4 0h1m9 0h1m6 0h1m17 0h1h1m8 0h1h1m19 0h1m18 0h1M34 90h1h1m9 0h1m4 0h1m6 0h1m23 0h1m2 0h1m2 0h1m11 0h1m3 0h1m5 0h1m29 0h1m4 0h1m18 0h1m3 0h1m4 0h1m7 0h1m3 0h1h1m2 0h1m6 0h1m14 0h1m1 0h1m28 0h1m1 0h1m25 0h1m21 0h1m22 0h1m23 0h1m18 0h1m1 0h1m2 0h1m75 0h1m3 0h1m7 0h1m3 0h1m27 0h1m1 0h1m2 0h1m56 0h1h1m4 0h1m31 0h1m12 0h1h1M24 91h1m3 0h1m3 0h1m5 0h1m2 0h1m2 0h1h1m11 0h1m32 0h1m3 0h1m16 0h1m17 0h1m75 0h1m55 0h1m7 0h1m4 0h1m18 0h1m6 0h1m1 0h1m11 0h1m15 0h1m1 0h1m25 0h1m9 0h1m14 0h1m25 0h1m2 0h1m6 0h1m35 0h1h1m34 0h1m4 0h1m3 0h1m77 0h1m3 0h1m8 0h1m13 0h1m7 0h1M22 92h1m4 0h1m17 0h1m42 0h1m12 0h1m30 0h1m7 0h1m5 0h1m3 0h1m1 0h1m4 0h1m8 0h1m20 0h1m9 0h1m27 0h1m8 0h1m14 0h1m15 0h1h1m27 0h1m37 0h1m1 0h1m3 0h1m26 0h1m23 0h1m8 0h1m11 0h1m7 0h1m8 0h1m17 0h1m6 0h1m17 0h1m9 0h1m12 0h1m71 0h1m45 0h1m2 0h1M34 93h1m10 0h1m12 0h1h1m8 0h1m2 0h1m30 0h1m2 0h1m22 0h1m30 0h1m21 0h1m8 0h1m10 0h1m31 0h1m14 0h1m1 0h1m21 0h1m6 0h1m9 0h1m15 0h1m9 0h1m31 0h1m2 0h1m1 0h1h1m1 0h1m10 0h1m11 0h1m25 0h1m15 0h1m14 0h1m30 0h1m10 0h1m1 0h1m8 0h1m8 0h1m6 0h1m6 0h1m16 0h1m1 0h1m3 0h1m3 0h1m9 0h1h1m14 0h1m20 0h1m21 0h1m7 0h1M20 94h1m5 0h1m10 0h1m1 0h1m1 0h1m32 0h1m20 0h1m14 0h1m5 0h1m7 0h1m7 0h1m16 0h1m4 0h1m35 0h1m6 0h1m10 0h1m5 0h1m33 0h1m13 0h1m3 0h1m8 0h1m29 0h1m5 0h1m32 0h1m11 0h1m16 0h1m7 0h1h1m13 0h1m21 0h1m36 0h1m14 0h1m19 0h1m17 0h1m10 0h1m75 0h1m12 0h1M36 95h1m49 0h1m1 0h1m55 0h1m2 0h1h1m15 0h1m74 0h1m15 0h1m74 0h1m17 0h1m10 0h1m4 0h1m14 0h1m14 0h1m15 0h1m1 0h1m4 0h1m5 0h1h1m11 0h1m7 0h1m8 0h1m10 0h1m2 0h1m20 0h1m8 0h1m56 0h1m13 0h1m8 0h1m16 0h1m3 0h1M59 96h1m12 0h1m11 0h1h1m12 0h1m11 0h1m1 0h1m8 0h1m4 0h1m15 0h1m1 0h1m7 0h1m1 0h1m7 0h1m12 0h1m7 0h1m22 0h1m23 0h1m16 0h1m6 0h1m1 0h1m10 0h1m11 0h1m5 0h1m15 0h1m1 0h1m11 0h1m3 0h1m7 0h1m21 0h1m9 0h1m5 0h1h1m1 0h1m3 0h1m22 0h1m2 0h1m25 0h1h1h1m27 0h1h1m13 0h1m12 0h1m2 0h1m1 0h1m10 0h1h1m10 0h1m4 0h1m14 0h1m26 0h1m1 0h1m3 0h1m12 0h1m22 0h1m5 0h1h1M75 97h1m32 0h1m25 0h1m21 0h1m12 0h1m8 0h1m7 0h1h1m2 0h1m9 0h1m44 0h1m1 0h1m9 0h1h1m5 0h1m5 0h1m14 0h1m2 0h1m2 0h1m20 0h1m1 0h1m9 0h1m9 0h1m11 0h1m35 0h1m9 0h1m3 0h1h1h1h1m13 0h1m41 0h1m30 0h1m25 0h1m23 0h1m9 0h1m1 0h1m1 0h1m2 0h1m11 0h1h1m35 0h1m8 0h1m7 0h1M23 98h1m10 0h1m1 0h1h1m13 0h1m13 0h1m31 0h1m4 0h1m6 0h1h1m8 0h1m29 0h1m2 0h1m12 0h1m5 0h1m6 0h1h1m13 0h1m9 0h1m16 0h1m8 0h1m11 0h1m11 0h1m9 0h1m2 0h1h1m11 0h1m1 0h1m29 0h1m5 0h1m2 0h1m4 0h1m22 0h1m5 0h1m4 0h1m2 0h1m7 0h1m15 0h1m2 0h1m3 0h1h1m2 0h1m4 0h1m19 0h1m8 0h1m5 0h1m4 0h1m1 0h1m11 0h1m3 0h1m4 0h1m4 0h1m21 0h1m1 0h1m5 0h1m9 0h1m9 0h1m10 0h1m6 0h1m26 0h1m5 0h1m24 0h1m8 0h1M21 99h1m8 0h1m4 0h1m1 0h1m2 0h1m3 0h1m16 0h1h1m1 0h1m41 0h1m10 0h1h1m3 0h1m2 0h1m7 0h1m3 0h1m1 0h1m7 0h1m1 0h1m4 0h1m22 0h1m28 0h1m2 0h1m8 0h1m13 0h1m15 0h1m12 0h1m8 0h1m3 0h1m4 0h1m4 0h1h1h1m7 0h1m1 0h1h1m7 0h1m5 0h1m10 0h1m18 0h1m1 0h1m11 0h1m4 0h1h1m6 0h1m4 0h1m20 0h1m6 0h1m6 0h1m7 0h1m10 0h1m6 0h1m12 0h1m16 0h1m8 0h1m4 0h1m1 0h1m8 0h1m5 0h1m16 0h1m2 0h1m1 0h1m11 0h1m5 0h1m15 0h1m8 0h1m24 0h1m25 0h1m6 0h1M20 100h1m8 0h1m8 0h1m11 0h1m16 0h1m16 0h1m4 0h1m16 0h1m2 0h1m3 0h1m3 0h1m3 0h1m18 0h1m9 0h1m15 0h1m5 0h1m21 0h1m2 0h1m9 0h1m1 0h1h1h1m15 0h1m11 0h1m21 0h1m5 0h1m33 0h1m3 0h1m2 0h1m9 0h1m4 0h1m14 0h1m1 0h1m14 0h1m12 0h1m14 0h1m3 0h1h1m8 0h1m8 0h1m32 0h1m3 0h1m10 0h1m4 0h1m10 0h1m14 0h1m17 0h1m17 0h1m2 0h1m7 0h1h1m3 0h1m3 0h1m6 0h1m1 0h1m5 0h1m10 0h1m4 0h1m2 0h1m2 0h1m28 0h1m1 0h1M28 101h1m2 0h1m6 0h1m13 0h1m9 0h1m12 0h1m4 0h1m2 0h1m3 0h1m5 0h1m13 0h1m17 0h1m2 0h1h1m17 0h1m6 0h1m11 0h1h1m27 0h1m19 0h1h1m3 0h1m5 0h1m6 0h1m13 0h1m1 0h1m6 0h1m1 0h1m1 0h1m9 0h1m3 0h1m8 0h1m3 0h1m1 0h1m2 0h1m8 0h1m7 0h1m2 0h1m6 0h1m14 0h1m2 0h1m2 0h1m2 0h1m2 0h1m18 0h1m8 0h1h1h1m10 0h1m16 0h1m13 0h1m1 0h1m7 0h1m8 0h1m5 0h1m21 0h1m1 0h1m18 0h1m40 0h1m4 0h1m14 0h1m12 0h1m4 0h1m3 0h1m11 0h1m9 0h1m7 0h1m2 0h1m4 0h1M23 102h1m3 0h1m9 0h1m1 0h1m12 0h1m8 0h1m24 0h1m4 0h1m2 0h1m31 0h1m4 0h1h1m9 0h1h1h1m13 0h1m8 0h1m10 0h1m6 0h1m13 0h1m5 0h1m1 0h1m15 0h1m3 0h1m16 0h1m2 0h1m2 0h1h1m10 0h1m1 0h1m3 0h1h1m1 0h1m1 0h1m1 0h1m13 0h1m2 0h1m8 0h1m1 0h1m5 0h1m2 0h1m14 0h1m5 0h1m1 0h1m4 0h1m7 0h1m14 0h1m2 0h1m1 0h1h1m1 0h1m6 0h1m15 0h1m2 0h1m2 0h1m2 0h1m12 0h1h1m6 0h1m11 0h1m2 0h1m9 0h1m9 0h1m18 0h1h1m1 0h1m14 0h1m17 0h1m14 0h1m6 0h1m27 0h1h1m4 0h1m18 0h1m4 0h1h1h1m9 0h1m3 0h1M26 103h1m11 0h1h1m22 0h1m10 0h1m6 0h1m9 0h1m8 0h1m7 0h1m4 0h1m3 0h1m9 0h1m2 0h1m9 0h1m13 0h1m5 0h1m4 0h1m4 0h1m6 0h1m14 0h1m2 0h1m2 0h1m6 0h1m5 0h1h1m2 0h1m5 0h1m1 0h1m5 0h1m88 0h1m1 0h1h1m3 0h1m5 0h1m1 0h1h1m1 0h1m1 0h1m2 0h1m13 0h1m6 0h1m10 0h1m13 0h1m3 0h1m10 0h1m31 0h1m45 0h1m15 0h1m31 0h1m12 0h1m13 0h1m16 0h1m9 0h1m13 0h1m7 0h1m9 0h1m5 0h1h1M20 104h1m2 0h1m15 0h1m20 0h1m4 0h1m2 0h1m2 0h1m20 0h1m8 0h1m20 0h1m7 0h1h1m1 0h1m3 0h1m7 0h1m8 0h1h1m20 0h1m26 0h1m1 0h1m7 0h1m2 0h1m3 0h1m8 0h1m1 0h1m2 0h1h1m1 0h1h1m46 0h1m2 0h1m7 0h1m1 0h1m11 0h1m8 0h1m6 0h1m3 0h1m9 0h1m6 0h1m1 0h1m3 0h1m2 0h1m14 0h1m3 0h1m13 0h1m6 0h1m18 0h1m11 0h1m13 0h1m3 0h1m3 0h1h1m3 0h1m15 0h1m6 0h1m13 0h1m10 0h1m3 0h1m27 0h1m4 0h1m3 0h1m4 0h1m2 0h1m16 0h1h1m18 0h1m1 0h1m3 0h1h1M88 105h1m12 0h1m1 0h1m11 0h1m2 0h1h1m2 0h1m19 0h1m13 0h1m1 0h1m9 0h1m11 0h1m11 0h1m8 0h1m8 0h1m14 0h1m9 0h1m10 0h1m6 0h1m1 0h1m18 0h1h1h1m6 0h1m5 0h1m7 0h1m11 0h1m1 0h1m6 0h1m1 0h1m11 0h1h1m17 0h1m2 0h1m6 0h1m27 0h1m12 0h1m7 0h1m2 0h1m4 0h1m6 0h1m9 0h1m8 0h1m3 0h1m10 0h1m19 0h1m3 0h1m3 0h1h1m15 0h1m3 0h1m3 0h1m2 0h1m12 0h1m2 0h1m3 0h1m3 0h1m4 0h1m4 0h1m3 0h1m5 0h1h1m3 0h1m2 0h1m7 0h1m9 0h1m5 0h1m3 0h1h1m6 0h1m1 0h1m8 0h1M30 106h1h1m6 0h1m11 0h1m10 0h1m3 0h1m39 0h1m53 0h1h1m1 0h1h1m3 0h1m1 0h1m1 0h1m7 0h1m23 0h1m15 0h1m12 0h1m1 0h1m11 0h1m15 0h1m2 0h1m4 0h1m2 0h1m7 0h1m1 0h1m3 0h1m32 0h1m1 0h1m11 0h1m7 0h1m9 0h1m41 0h1m9 0h1m6 0h1m9 0h1m16 0h1m5 0h1m4 0h1m5 0h1h1m8 0h1m7 0h1m6 0h1m12 0h1m1 0h1m8 0h1m3 0h1m6 0h1m3 0h1m1 0h1m20 0h1m3 0h1m4 0h1m5 0h1m5 0h1m12 0h1m12 0h1m8 0h1m1 0h1m1 0h1m4 0h1m2 0h1M21 107h1m5 0h1m3 0h1m8 0h1m11 0h1m4 0h1m3 0h1m7 0h1m7 0h1m1 0h1m7 0h1m6 0h1m19 0h1m2 0h1m17 0h1m3 0h1m3 0h1h1m2 0h1h1m23 0h1m1 0h1m4 0h1m7 0h1m15 0h1m4 0h1m26 0h1m9 0h1m1 0h1m1 0h1m12 0h1m27 0h1m6 0h1m4 0h1m8 0h1m5 0h1m11 0h1m2 0h1m7 0h1m16 0h1m18 0h1m13 0h1m18 0h1h1m8 0h1m8 0h1m9 0h1m6 0h1h1m1 0h1m9 0h1m6 0h1m6 0h1m3 0h1m6 0h1m15 0h1m1 0h1m7 0h1m1 0h1m14 0h1m3 0h1m17 0h1m4 0h1m3 0h1m6 0h1m11 0h1m15 0h1m1 0h1m13 0h1m6 0h1M20 108h1m2 0h1m4 0h1h1m12 0h1m4 0h1m12 0h1h1m2 0h1m5 0h1m15 0h1m4 0h1m6 0h1h1m2 0h1m20 0h1m11 0h1m5 0h1m18 0h1m9 0h1m20 0h1m9 0h1m30 0h1m7 0h1h1m3 0h1m6 0h1m8 0h1m2 0h1h1m8 0h1m6 0h1m11 0h1m6 0h1m6 0h1m15 0h1m2 0h1m13 0h1h1m4 0h1m5 0h1m21 0h1m1 0h1h1m11 0h1m8 0h1m12 0h1h1m10 0h1m6 0h1m1 0h1m11 0h1m11 0h1m4 0h1m12 0h1h1h1m3 0h1m12 0h1m7 0h1m2 0h1m10 0h1m6 0h1m4 0h1m46 0h1m3 0h1m14 0h1m3 0h1h1m7 0h1M26 109h1m2 0h1m8 0h1h1m2 0h1m6 0h1m3 0h1m37 0h1h1m10 0h1m11 0h1h1m4 0h1m1 0h1m1 0h1m4 0h1h1m3 0h1m4 0h1m5 0h1m1 0h1m2 0h1m4 0h1m9 0h1m5 0h1m3 0h1m3 0h1h1m2 0h1m4 0h1h1m6 0h1m5 0h1m2 0h1m2 0h1m41 0h1m5 0h1m20 0h1m11 0h1h1m2 0h1m2 0h1m5 0h1m1 0h1m3 0h1m11 0h1m8 0h1m9 0h1m1 0h1m2 0h1m7 0h1m2 0h1h1m4 0h1m6 0h1m15 0h1h1m13 0h1m1 0h1m7 0h1m20 0h1m28 0h1m16 0h1m9 0h1m3 0h1m6 0h1m6 0h1h1m7 0h1m1 0h1m1 0h1m8 0h1m1 0h1h1m8 0h1m7 0h1m7 0h1m7 0h1m39 0h1m1 0h1m3 0h1m7 0h1M22 110h1m5 0h1m11 0h1m28 0h1m3 0h1m21 0h1m5 0h1m2 0h1m5 0h1m6 0h1m9 0h1m1 0h1m16 0h1h1m4 0h1m11 0h1m8 0h1m10 0h1m1 0h1m1 0h1m13 0h1m6 0h1m19 0h1m13 0h1m3 0h1m72 0h1m4 0h1m2 0h1h1h1m8 0h1m1 0h1m8 0h1m1 0h1m12 0h1m1 0h1m2 0h1m5 0h1h1m1 0h1m15 0h1m1 0h1m2 0h1h1m10 0h1m1 0h1m1 0h1m6 0h1m1 0h1m6 0h1m3 0h1m2 0h1m5 0h1m22 0h1m9 0h1m4 0h1h1m1 0h1m4 0h1m9 0h1m14 0h1h1m6 0h1m5 0h1h1m1 0h1m4 0h1h1m3 0h1m2 0h1h1m11 0h1m4 0h1m1 0h1m5 0h1m1 0h1h1h1m4 0h1m1 0h1m8 0h1h1m7 0h1h1m7 0h1h1m1 0h1m4 0h1h1M26 111h1h1m23 0h1m14 0h1m13 0h1m15 0h1m11 0h1m16 0h1m9 0h1m3 0h1m7 0h1h1m3 0h1h1m3 0h1m8 0h1m33 0h1m4 0h1m3 0h1m23 0h1m10 0h1m15 0h1h1m28 0h1m6 0h1m2 0h1m8 0h1m1 0h1m3 0h1m2 0h1m4 0h1m9 0h1m3 0h1m2 0h1m11 0h1m7 0h1h1h1m44 0h1m5 0h1m2 0h1m3 0h1h1h1m7 0h1m13 0h1m12 0h1m8 0h1m10 0h1m2 0h1m5 0h1m6 0h1m1 0h1m2 0h1h1m2 0h1m5 0h1m2 0h1m5 0h1m11 0h1m10 0h1m1 0h1m11 0h1m7 0h1h1m4 0h1m3 0h1m15 0h1m18 0h1M23 112h1m8 0h1m23 0h1m7 0h1m3 0h1h1h1h1m7 0h1m7 0h1m1 0h1h1h1m1 0h1m1 0h1m4 0h1h1m6 0h1m26 0h1m9 0h1m1 0h1m1 0h1m16 0h1m3 0h1h1m14 0h1m20 0h1m6 0h1m4 0h1m1 0h1m18 0h1m9 0h1m3 0h1m24 0h1m5 0h1m3 0h1m4 0h1m5 0h1m8 0h1m15 0h1m1 0h1m8 0h1h1m3 0h1m5 0h1m3 0h1m1 0h1h1m3 0h1m3 0h1m5 0h1m15 0h1m8 0h1h1m10 0h1m18 0h1m6 0h1m14 0h1m10 0h1m7 0h1m14 0h1m26 0h1m11 0h1h1m3 0h1m3 0h1h1m5 0h1m6 0h1m8 0h1m20 0h1m18 0h1m26 0h1h1M22 113h1m9 0h1h1m8 0h1h1m12 0h1m1 0h1m22 0h1m4 0h1m14 0h1m6 0h1m2 0h1m7 0h1m2 0h1m12 0h1m10 0h1m23 0h1m26 0h1m9 0h1m3 0h1m23 0h1m12 0h1m7 0h1m8 0h1m3 0h1m25 0h1m4 0h1m1 0h1m34 0h1m2 0h1m3 0h1m6 0h1m13 0h1m26 0h1m7 0h1m2 0h1m36 0h1m1 0h1m3 0h1m19 0h1h1m50 0h1m4 0h1m4 0h1m11 0h1h1m12 0h1m19 0h1h1m10 0h1m12 0h1m17 0h1M21 114h1m1 0h1h1m4 0h1m1 0h1m13 0h1m1 0h1m1 0h1m1 0h1m2 0h1m11 0h1m22 0h1m7 0h1m17 0h1m7 0h1m3 0h1m7 0h1m7 0h1m9 0h1m1 0h1m23 0h1m23 0h1m8 0h1m2 0h1m1 0h1m4 0h1m1 0h1m50 0h1m47 0h1m3 0h1m3 0h1m3 0h1m6 0h1m1 0h1m5 0h1m19 0h1m16 0h1m14 0h1m1 0h1m1 0h1m17 0h1m1 0h1m34 0h1m21 0h1h1h1m3 0h1m35 0h1m21 0h1m20 0h1m10 0h1h1m11 0h1m1 0h1m17 0h1M40 115h1m3 0h1m2 0h1m1 0h1m12 0h1m2 0h1m17 0h1m8 0h1h1m2 0h1m11 0h1m5 0h1m6 0h1m4 0h1m7 0h1m3 0h1m15 0h1m1 0h1m5 0h1h1m2 0h1m20 0h1m7 0h1m5 0h1m23 0h1m8 0h1m4 0h1m8 0h1m1 0h1m13 0h1m8 0h1m60 0h1m21 0h1m17 0h1m11 0h1m17 0h1m2 0h1m18 0h1m5 0h1m6 0h1m3 0h1m8 0h1m5 0h1m22 0h1m33 0h1m5 0h1m15 0h1m20 0h1m2 0h1m1 0h1m9 0h1m14 0h1m10 0h1M30 116h1m11 0h1m1 0h1m14 0h1m6 0h1m18 0h1m3 0h1h1m7 0h1m21 0h1m5 0h1m6 0h1m6 0h1m1 0h1m24 0h1h1m10 0h1m7 0h1m5 0h1m11 0h1m6 0h1m2 0h1h1m8 0h1m3 0h1m7 0h1m5 0h1h1m7 0h1m6 0h1m19 0h1m6 0h1m21 0h1m16 0h1m13 0h1m10 0h1m30 0h1m10 0h1h1m66 0h1m6 0h1h1m5 0h1m13 0h1m7 0h1m5 0h1m39 0h1m25 0h1m10 0h1m8 0h1h1m6 0h1m7 0h1m6 0h1M24 117h1m3 0h1m2 0h1h1m14 0h1m8 0h1m12 0h1m15 0h1m7 0h1m11 0h1m9 0h1m3 0h1m9 0h1m4 0h1m9 0h1m5 0h1m1 0h1m23 0h1m6 0h1m14 0h1m7 0h1m4 0h1m10 0h1m21 0h1m1 0h1m10 0h1m11 0h1m1 0h1m23 0h1m2 0h1m7 0h1h1m21 0h1m16 0h1m2 0h1m14 0h1m10 0h1m5 0h1m22 0h1m2 0h1m2 0h1m1 0h1m5 0h1m13 0h1m1 0h1m9 0h1m19 0h1m15 0h1m8 0h1m31 0h1m1 0h1m1 0h1m6 0h1m3 0h1m6 0h1m3 0h1m22 0h1m7 0h1m35 0h1M23 118h1m3 0h1m3 0h1m18 0h1m3 0h1m5 0h1m24 0h1m4 0h1m1 0h1m5 0h1m26 0h1h1m25 0h1m1 0h1m1 0h1m8 0h1m3 0h1m2 0h1m7 0h1m1 0h1m2 0h1m9 0h1m6 0h1m4 0h1h1m17 0h1m25 0h1m8 0h1h1m5 0h1m2 0h1m11 0h1m9 0h1m19 0h1m51 0h1m2 0h1m36 0h1m2 0h1m4 0h1m1 0h1m15 0h1m10 0h1m14 0h1m4 0h1m3 0h1m26 0h1m16 0h1m3 0h1m1 0h1m4 0h1m5 0h1m10 0h1m2 0h1m6 0h1m1 0h1m25 0h1m1 0h1m18 0h1m4 0h1m10 0h1M28 119h1m25 0h1m4 0h1m6 0h1m3 0h1m9 0h1m11 0h1h1m2 0h1m1 0h1m12 0h1m34 0h1m9 0h1m2 0h1m77 0h1m9 0h1m14 0h1m25 0h1m12 0h1m8 0h1m9 0h1m5 0h1m4 0h1m3 0h1m8 0h1h1m3 0h1m6 0h1m10 0h1m32 0h1m27 0h1m23 0h1m8 0h1m27 0h1m1 0h1m9 0h1h1m19 0h1m23 0h1m5 0h1m32 0h1m5 0h1m10 0h1m1 0h1m14 0h1M55 120h1m13 0h1m65 0h1m9 0h1h1m12 0h1m9 0h1m17 0h1m5 0h1m10 0h1m7 0h1m5 0h1m10 0h1h1m8 0h1h1h1m13 0h1h1m12 0h1m16 0h1m8 0h1m8 0h1m25 0h1m7 0h1h1m17 0h1m5 0h1m18 0h1m2 0h1m3 0h1m11 0h1m16 0h1m13 0h1m1 0h1m5 0h1m13 0h1m18 0h1m12 0h1m17 0h1m4 0h1m4 0h1m15 0h1m30 0h1h1m17 0h1m10 0h1m15 0h1h1M26 121h1m10 0h1m9 0h1m17 0h1m7 0h1m9 0h1m2 0h1m12 0h1m8 0h1m7 0h1m3 0h1m3 0h1m3 0h1m11 0h1m14 0h1m15 0h1m5 0h1m7 0h1h1m5 0h1m7 0h1m5 0h1m8 0h1m33 0h1m21 0h1m13 0h1m6 0h1m15 0h1m13 0h1m42 0h1m1 0h1m14 0h1m13 0h1m10 0h1m1 0h1m6 0h1m13 0h1m18 0h1m30 0h1m53 0h1m3 0h1m16 0h1m4 0h1m27 0h1m7 0h1h1m19 0h1M61 122h1m10 0h1m23 0h1m6 0h1m18 0h1m53 0h1h1m5 0h1m4 0h1m4 0h1m13 0h1h1m3 0h1m33 0h1m13 0h1m16 0h1m2 0h1m3 0h1m4 0h1m12 0h1m18 0h1m6 0h1m29 0h1m17 0h1m14 0h1m16 0h1m3 0h1m1 0h1m2 0h1m4 0h1m8 0h1m29 0h1m6 0h1h1m9 0h1m22 0h1m9 0h1m6 0h1m20 0h1m7 0h1m5 0h1m6 0h1m56 0h1M30 123h1m9 0h1m17 0h1m7 0h1m3 0h1m1 0h1m3 0h1m16 0h1m9 0h1h1m12 0h1h1m4 0h1m4 0h1m8 0h1m36 0h1h1m12 0h1m13 0h1m18 0h1m27 0h1m3 0h1m6 0h1m41 0h1m1 0h1m1 0h1m13 0h1m2 0h1m3 0h1m9 0h1m4 0h1m25 0h1m7 0h1m2 0h1m23 0h1m28 0h1m8 0h1m35 0h1m6 0h1m9 0h1m20 0h1m34 0h1m29 0h1M21 124h1m1 0h1m8 0h1m2 0h1m5 0h1m29 0h1m17 0h1m4 0h1m22 0h1m54 0h1m2 0h1h1m19 0h1m8 0h1m1 0h1m3 0h1m11 0h1m4 0h1m19 0h1m12 0h1m48 0h1m14 0h1m22 0h1m2 0h1m14 0h1m8 0h1m30 0h1m45 0h1m5 0h1m2 0h1m30 0h1m15 0h1m34 0h1m6 0h1m6 0h1m1 0h1m4 0h1m14 0h1h1m13 0h1m10 0h1m8 0h1M34 125h1m6 0h1m13 0h1m4 0h1m6 0h1m6 0h1m29 0h1m1 0h1m45 0h1m35 0h1m3 0h1m20 0h1m11 0h1m23 0h1m10 0h1m6 0h1m10 0h1m34 0h1h1m7 0h1m32 0h1m15 0h1m27 0h1m31 0h1h1m10 0h1m11 0h1m24 0h1m18 0h1m9 0h1m15 0h1m1 0h1m16 0h1m14 0h1m24 0h1M20 126h1m2 0h1m6 0h1m11 0h1m20 0h1m2 0h1m5 0h1h1m45 0h1m14 0h1m40 0h1m3 0h1m17 0h1m8 0h1m14 0h1m94 0h1m17 0h1m48 0h1m13 0h1m1 0h1m1 0h1m28 0h1m45 0h1m49 0h1m3 0h1m48 0h1m27 0h1m9 0h1M38 127h1m8 0h1m6 0h1m29 0h1m45 0h1m25 0h1m5 0h1m31 0h1m60 0h1m15 0h1m39 0h1m61 0h1m9 0h1m6 0h1m7 0h1m8 0h1m13 0h1m3 0h1m25 0h1m35 0h1m5 0h1m6 0h1m2 0h1h1m14 0h1m22 0h1m8 0h1m1 0h1m39 0h1m9 0h1m9 0h1M126 128h1m3 0h1m6 0h1m8 0h1m6 0h1m13 0h1m58 0h1m7 0h1m20 0h1m3 0h1m26 0h1m6 0h1m3 0h1m12 0h1m48 0h1m33 0h1m19 0h1m19 0h1m13 0h1m4 0h1m11 0h1m25 0h1m33 0h1m43 0h1m18 0h1m3 0h1m14 0h1M122 129h1m6 0h1m28 0h1m6 0h1h1m17 0h1m27 0h1m15 0h1m6 0h1m122 0h1m2 0h1m8 0h1m6 0h1m21 0h1m3 0h1m9 0h1m57 0h1m15 0h1m22 0h1m23 0h1m11 0h1m7 0h1m2 0h1m24 0h1m11 0h1M24 130h1m36 0h1m29 0h1m19 0h1m10 0h1m53 0h1m21 0h1m72 0h1m98 0h1m3 0h1h1m16 0h1m1 0h1m37 0h1m23 0h1m1 0h1h1m14 0h1m8 0h1m40 0h1m18 0h1m32 0h1m7 0h1M27 131h1m40 0h1m32 0h1m47 0h1m8 0h1m27 0h1m129 0h1h1m4 0h1m17 0h1m26 0h1m3 0h1m3 0h1m16 0h1m14 0h1m43 0h1m6 0h1m11 0h1m41 0h1m29 0h1m20 0h1m54 0h1M126 132h1m2 0h1m71 0h1m49 0h1m36 0h1m16 0h1m2 0h1m4 0h1m66 0h1m40 0h1m125 0h1m53 0h1M26 133h1m32 0h1m30 0h1m25 0h1m89 0h1m105 0h1m35 0h1m34 0h1h1m82 0h1M68 134h1h1m48 0h1m34 0h1m60 0h1m19 0h1m3 0h1m31 0h1m3 0h1m13 0h1m27 0h1m7 0h1m24 0h1m185 0h1m48 0h1m6 0h1M90 135h1m17 0h1m102 0h1m146 0h1m105 0h1m39 0h1m5 0h1m35 0h1m71 0h1M120 136h1m117 0h1m28 0h1m82 0h1m106 0h1m109 0h1M232 137h1m109 0h1M23 265h1m4 0h1h1m1 0h1m11 0h1m5 0h1m1 0h1m10 0h1m3 0h1h1h1h1m5 0h1m5 0h1m3 0h1m5 0h1m5 0h1h1m9 0h1m5 0h1m1 0h1m6 0h1m4 0h1m15 0h1m9 0h1h1m5 0h1m7 0h1m1 0h1m3 0h1m1 0h1m22 0h1m1 0h1m3 0h1m1 0h1m13 0h1h1m1 0h1m5 0h1m1 0h1m5 0h1m1 0h1h1m4 0h1m4 0h1h1m2 0h1m4 0h1m3 0h1m4 0h1m1 0h1m8 0h1m11 0h1m14 0h1m1 0h1m2 0h1m1 0h1m1 0h1m12 0h1m2 0h1m13 0h1m2 0h1m5 0h1m2 0h1m13 0h1m2 0h1m2 0h1h1m11 0h1m2 0h1h1h1m4 0h1m3 0h1m3 0h1m2 0h1h1h1m1 0h1h1h1m8 0h1h1m8 0h1m2 0h1h1m3 0h1m1 0h1m2 0h1m3 0h1h1h1m2 0h1m3 0h1m2 0h1h1m11 0h1m2 0h1h1m1 0h1m12 0h1h1m22 0h1h1m1 0h1h1m3 0h1m2 0h1m1 0h1h1m2 0h1m1 0h1m5 0h1m7 0h1m1 0h1m1 0h1h1h1m7 0h1m3 0h1m8 0h1m1 0h1m1 0h1m6 0h1h1m3 0h1h1m3 0h1m1 0h1m2 0h1m6 0h1m1 0h1"/>
<path stroke="#000048" d="M126 80h1m22 0h1m31 0h1m25 0h1m9 0h1m8 0h1m33 0h1m88 0h1m15 0h1m31 0h1m19 0h1m10 0h1m4 0h1m82 0h1m42 0h1m3 0h1m44 0h1M46 81h1m8 0h1m37 0h1m13 0h1m38 0h1m46 0h1m53 0h1m66 0h1m16 0h1m6 0h1m39 0h1m38 0h1m5 0h1m44 0h1m25 0h1m69 0h1M31 82h1m36 0h1m10 0h1m43 0h1m69 0h1m56 0h1m59 0h1m8 0h1m77 0h1m60 0h1m161 0h1M108 83h1m14 0h1m52 0h1m17 0h1m106 0h1m21 0h1m7 0h1m51 0h1m97 0h1m52 0h1m45 0h1M30 84h1m71 0h1m24 0h1m11 0h1m15 0h1m4 0h1m22 0h1m2 0h1m11 0h1m23 0h1m59 0h1m23 0h1m196 0h1m1 0h1m103 0h1M52 85h1m16 0h1m19 0h1m5 0h1h1m33 0h1m26 0h1h1m49 0h1m27 0h1m34 0h1m7 0h1m13 0h1m32 0h1m4 0h1m10 0h1m10 0h1m11 0h1m43 0h1m23 0h1m38 0h1m11 0h1m1 0h1m16 0h1m29 0h1M87 86h1m35 0h1m16 0h1m44 0h1m101 0h1m15 0h1m2 0h1m42 0h1m22 0h1m1 0h1m10 0h1m87 0h1m3 0h1m16 0h1m30 0h1h1m10 0h1m44 0h1m1 0h1m4 0h1m25 0h1M46 87h1m6 0h1m10 0h1m20 0h1m153 0h1m32 0h1m28 0h1h1m15 0h1m40 0h1m15 0h1h1m11 0h1m19 0h1m62 0h1m8 0h1m135 0h1h1M61 88h1m3 0h1m12 0h1m54 0h1m6 0h1m1 0h1m56 0h1m27 0h1m3 0h1m2 0h1m33 0h1m20 0h1m51 0h1m84 0h1m1 0h1m2 0h1m18 0h1m35 0h1m31 0h1m54 0h1m36 0h1M25 89h1m6 0h1m125 0h1m12 0h1m25 0h1h1m1 0h1m4 0h1m53 0h1m6 0h1m11 0h1m59 0h1m46 0h1m14 0h1m30 0h1m47 0h1m34 0h1m26 0h1m7 0h1M29 90h1m28 0h1m60 0h1m26 0h1m78 0h1m47 0h1m47 0h1m9 0h1m18 0h1m19 0h1m16 0h1m15 0h1m43 0h1m32 0h1m18 0h1m100 0h1m10 0h1M98 91h1m47 0h1m47 0h1m12 0h1m10 0h1m88 0h1m4 0h1m10 0h1m29 0h1m20 0h1m30 0h1m21 0h1m59 0h1m16 0h1m3 0h1m1 0h1m11 0h1m79 0h1h1m7 0h1M24 92h1m23 0h1m54 0h1m8 0h1m5 0h1m24 0h1m19 0h1m4 0h1m4 0h1m106 0h1m79 0h1m38 0h1m11 0h1m5 0h1m4 0h1m86 0h1m53 0h1m39 0h1m3 0h1M47 93h1h1m1 0h1m90 0h1h1m13 0h1m16 0h1m2 0h1m34 0h1m11 0h1m15 0h1m9 0h1m25 0h1m20 0h1m6 0h1m26 0h1m12 0h1m25 0h1m26 0h1m63 0h1m59 0h1m30 0h1m30 0h1m21 0h1M44 94h1m28 0h1m7 0h1m26 0h1m9 0h1m19 0h1m103 0h1m2 0h1m44 0h1m2 0h1m18 0h1m8 0h1m11 0h1m8 0h1m8 0h1m17 0h1m38 0h1m35 0h1m20 0h1m30 0h1m33 0h1m10 0h1m14 0h1m35 0h1m5 0h1m7 0h1m7 0h1M35 95h1m45 0h1m71 0h1m4 0h1m4 0h1m14 0h1m13 0h1m81 0h1m19 0h1m6 0h1m5 0h1m5 0h1m64 0h1m2 0h1m26 0h1m30 0h1m2 0h1m12 0h1m65 0h1m11 0h1m1 0h1m39 0h1m13 0h1M26 96h1m38 0h1m34 0h1m6 0h1m45 0h1m27 0h1m43 0h1m43 0h1m6 0h1m6 0h1m8 0h1m4 0h1m9 0h1m44 0h1h1m23 0h1m3 0h1m3 0h1m36 0h1m15 0h1m5 0h1m15 0h1m10 0h1m49 0h1m49 0h1m16 0h1m4 0h1m20 0h1M41 97h1m4 0h1m2 0h1h1m4 0h1m17 0h1m19 0h1m54 0h1m16 0h1m19 0h1m16 0h1m6 0h1m7 0h1m22 0h1m1 0h1m3 0h1m16 0h1m2 0h1m4 0h1m65 0h1m1 0h1m47 0h1m1 0h1m45 0h1m90 0h1m7 0h1m52 0h1m7 0h1M80 98h1m76 0h1m11 0h1m7 0h1m11 0h1m12 0h1m7 0h1m1 0h1m48 0h1m34 0h1m53 0h1m4 0h1m17 0h1m41 0h1m38 0h1m17 0h1h1m13 0h1m27 0h1m18 0h1m6 0h1m11 0h1h1m11 0h1m36 0h1M22 99h1m5 0h1m3 0h1m40 0h1m2 0h1m2 0h1m46 0h1m18 0h1h1m20 0h1m21 0h1m21 0h1h1m6 0h1m6 0h1m42 0h1m13 0h1m104 0h1m4 0h1m1 0h1m50 0h1m37 0h1m42 0h1m35 0h1m22 0h1m2 0h1m4 0h1M23 100h1m2 0h1m51 0h1m4 0h1m21 0h1m33 0h1m11 0h1m16 0h1m4 0h1m12 0h1m75 0h1m18 0h1m51 0h1m16 0h1m7 0h1m21 0h1m26 0h1h1m2 0h1m3 0h1m1 0h1m33 0h1m8 0h1h1m31 0h1m32 0h1m18 0h1m23 0h1h1m27 0h1m5 0h1M22 101h1m62 0h1m15 0h1m28 0h1m50 0h1m37 0h1m35 0h1m5 0h1m7 0h1m40 0h1m61 0h1m38 0h1m13 0h1m8 0h1m9 0h1m29 0h1m4 0h1m21 0h1m3 0h1m15 0h1m24 0h1m7 0h1m53 0h1M57 102h1m72 0h1m45 0h1m17 0h1m24 0h1m8 0h1m16 0h1m30 0h1m41 0h1m37 0h1m20 0h1m4 0h1m40 0h1m9 0h1m7 0h1m28 0h1m15 0h1m24 0h1m46 0h1m12 0h1m3 0h1m11 0h1m9 0h1h1M35 103h1m7 0h1m5 0h1m9 0h1m11 0h1m2 0h1m13 0h1m9 0h1m2 0h1m8 0h1m8 0h1m38 0h1m65 0h1m7 0h1m7 0h1m8 0h1m26 0h1m4 0h1m15 0h1m30 0h1m5 0h1m30 0h1m22 0h1m5 0h1m15 0h1m10 0h1m5 0h1m1 0h1m2 0h1m8 0h1m11 0h1m7 0h1m7 0h1m1 0h1m17 0h1m18 0h1m19 0h1m61 0h1m6 0h1m8 0h1M45 104h1m24 0h1m5 0h1h1h1m23 0h1h1m3 0h1m16 0h1m34 0h1m7 0h1m5 0h1m10 0h1m9 0h1h1m2 0h1m2 0h1m2 0h1m5 0h1m3 0h1m3 0h1m9 0h1m10 0h1m12 0h1m3 0h1m19 0h1m44 0h1m33 0h1m9 0h1m19 0h1m7 0h1m14 0h1m9 0h1m4 0h1m8 0h1m15 0h1m12 0h1h1m6 0h1m19 0h1m40 0h1m2 0h1m8 0h1m2 0h1m6 0h1m40 0h1m5 0h1m4 0h1m2 0h1h1M47 105h1m1 0h1m43 0h1m5 0h1m71 0h1m21 0h1m32 0h1m17 0h1m7 0h1m10 0h1m2 0h1m4 0h1m12 0h1m16 0h1m4 0h1m9 0h1m17 0h1m22 0h1m1 0h1m15 0h1m7 0h1m31 0h1m11 0h1h1m7 0h1m44 0h1m16 0h1m15 0h1m5 0h1m9 0h1m1 0h1m15 0h1m41 0h1m28 0h1M43 106h1m2 0h1h1m8 0h1m23 0h1m3 0h1m15 0h1m13 0h1m3 0h1m26 0h1m3 0h1m6 0h1m25 0h1m11 0h1m2 0h1m3 0h1m13 0h1m36 0h1m50 0h1m12 0h1m19 0h1m38 0h1m1 0h1m10 0h1m10 0h1m6 0h1m24 0h1m15 0h1h1m4 0h1m12 0h1m2 0h1m71 0h1m7 0h1m9 0h1m18 0h1m6 0h1m2 0h1M26 107h1m2 0h1m5 0h1m10 0h1m33 0h1m12 0h1m6 0h1m2 0h1m15 0h1h1m28 0h1m9 0h1m1 0h1m2 0h1m34 0h1m2 0h1m10 0h1m11 0h1m40 0h1m16 0h1h1m1 0h1m7 0h1h1h1m51 0h1m6 0h1m6 0h1m12 0h1m6 0h1m8 0h1m13 0h1m36 0h1m30 0h1m6 0h1m9 0h1m1 0h1m29 0h1m72 0h1m14 0h1h1M22 108h1m1 0h1m37 0h1m8 0h1m3 0h1m1 0h1m3 0h1m48 0h1m3 0h1m10 0h1h1h1m29 0h1m1 0h1m12 0h1m51 0h1m2 0h1m3 0h1m6 0h1m16 0h1m20 0h1m2 0h1m1 0h1m13 0h1m19 0h1m6 0h1m36 0h1m8 0h1m1 0h1m17 0h1m5 0h1m3 0h1m59 0h1m2 0h1m6 0h1m13 0h1m38 0h1m9 0h1m9 0h1m13 0h1h1M34 109h1m17 0h1m14 0h1m26 0h1m10 0h1m7 0h1m4 0h1m19 0h1m24 0h1m24 0h1m16 0h1m13 0h1m33 0h1m7 0h1m21 0h1m5 0h1m10 0h1m1 0h1m20 0h1h1m46 0h1m12 0h1m8 0h1h1m3 0h1m22 0h1m8 0h1m18 0h1m2 0h1m3 0h1m2 0h1m22 0h1m18 0h1m6 0h1m31 0h1m12 0h1m24 0h1m16 0h1m20 0h1M60 110h1m1 0h1m31 0h1m20 0h1m45 0h1h1m5 0h1m20 0h1m14 0h1m9 0h1m4 0h1m19 0h1m30 0h1m25 0h1m5 0h1m48 0h1m20 0h1m11 0h1h1m2 0h1m14 0h1m1 0h1m3 0h1m14 0h1m5 0h1m11 0h1m20 0h1m44 0h1m16 0h1m10 0h1h1m18 0h1m25 0h1m12 0h1m19 0h1M23 111h1m16 0h1m5 0h1m85 0h1m10 0h1m63 0h1m6 0h1m25 0h1m5 0h1h1m11 0h1m53 0h1m3 0h1m8 0h1m97 0h1m9 0h1m18 0h1m2 0h1m18 0h1m9 0h1m6 0h1m31 0h1m33 0h1m42 0h1m13 0h1M76 112h1m36 0h1m6 0h1m15 0h1m36 0h1m9 0h1m1 0h1m5 0h1m7 0h1m12 0h1m28 0h1h1m25 0h1m4 0h1m29 0h1m26 0h1m41 0h1m28 0h1h1m11 0h1m5 0h1m21 0h1m4 0h1m10 0h1m4 0h1m15 0h1m18 0h1h1m27 0h1m20 0h1m14 0h1m13 0h1m3 0h1m22 0h1m2 0h1M27 113h1m38 0h1m16 0h1m8 0h1m2 0h1m27 0h1m10 0h1m2 0h1m13 0h1m21 0h1m7 0h1m4 0h1m56 0h1m10 0h1m38 0h1m67 0h1m74 0h1m11 0h1m38 0h1m13 0h1m1 0h1m54 0h1h1m10 0h1m1 0h1m10 0h1m1 0h1m3 0h1m4 0h1m15 0h1M20 114h1m11 0h1m37 0h1m8 0h1m10 0h1m14 0h1m13 0h1m4 0h1m3 0h1m5 0h1m19 0h1m4 0h1h1m2 0h1m9 0h1h1m2 0h1m4 0h1m6 0h1m5 0h1m56 0h1h1m9 0h1m16 0h1m1 0h1m12 0h1m6 0h1m1 0h1m3 0h1m39 0h1m22 0h1h1m1 0h1m50 0h1m19 0h1m11 0h1h1m5 0h1m8 0h1m16 0h1m5 0h1m9 0h1m53 0h1m32 0h1m6 0h1h1m11 0h1m5 0h1M67 115h1m8 0h1m3 0h1m3 0h1m12 0h1m26 0h1m11 0h1m5 0h1m18 0h1m17 0h1m3 0h1m8 0h1m19 0h1m6 0h1m4 0h1m1 0h1m16 0h1m7 0h1m6 0h1h1h1m16 0h1m1 0h1m14 0h1m33 0h1m25 0h1m15 0h1m23 0h1m3 0h1m9 0h1m3 0h1m1 0h1m8 0h1m18 0h1m8 0h1m28 0h1m2 0h1m33 0h1m7 0h1m2 0h1h1m1 0h1m4 0h1m4 0h1h1m8 0h1m1 0h1m16 0h1m1 0h1M29 116h1m7 0h1m13 0h1m5 0h1m12 0h1m7 0h1m21 0h1m22 0h1m1 0h1m15 0h1m6 0h1m2 0h1m5 0h1m38 0h1m20 0h1m17 0h1m24 0h1m7 0h1m78 0h1m5 0h1m9 0h1m2 0h1m30 0h1m9 0h1m8 0h1m16 0h1m2 0h1m12 0h1m15 0h1m33 0h1m7 0h1m5 0h1m2 0h1m2 0h1m1 0h1m8 0h1m54 0h1m12 0h1M44 117h1m7 0h1h1m9 0h1m1 0h1m7 0h1m13 0h1m8 0h1m52 0h1m6 0h1m1 0h1m15 0h1m11 0h1m31 0h1m4 0h1m3 0h1m9 0h1m11 0h1m9 0h1m10 0h1m69 0h1m13 0h1m10 0h1m11 0h1m16 0h1m103 0h1m9 0h1m15 0h1m3 0h1h1m4 0h1m59 0h1m9 0h1h1m11 0h1M26 118h1m9 0h1m7 0h1m1 0h1m6 0h1m10 0h1m9 0h1m7 0h1m13 0h1m22 0h1m8 0h1m9 0h1m9 0h1m88 0h1m9 0h1m2 0h1m22 0h1m1 0h1m3 0h1m19 0h1m15 0h1h1m13 0h1m18 0h1h1m11 0h1m21 0h1m5 0h1m26 0h1m4 0h1m5 0h1m21 0h1m8 0h1m1 0h1m6 0h1m18 0h1m15 0h1m7 0h1m1 0h1m1 0h1m20 0h1m8 0h1h1m30 0h1m34 0h1m3 0h1m2 0h1M44 119h1m32 0h1m12 0h1m13 0h1m9 0h1m6 0h1m22 0h1m5 0h1m1 0h1m4 0h1h1m1 0h1m13 0h1h1m7 0h1m41 0h1m1 0h1m21 0h1m44 0h1m12 0h1m5 0h1m1 0h1m3 0h1m4 0h1m2 0h1m12 0h1m25 0h1m6 0h1m11 0h1m121 0h1m15 0h1m14 0h1m18 0h1m3 0h1m17 0h1h1m9 0h1m12 0h1m5 0h1M27 120h1m9 0h1m18 0h1m13 0h1m6 0h1m16 0h1h1m29 0h1m32 0h1m1 0h1m11 0h1m4 0h1m14 0h1m8 0h1m59 0h1m10 0h1m15 0h1m20 0h1m5 0h1h1m27 0h1m1 0h1m19 0h1m7 0h1m13 0h1m25 0h1m26 0h1m15 0h1m5 0h1m30 0h1m2 0h1m20 0h1m8 0h1m13 0h1m24 0h1h1m21 0h1m6 0h1m2 0h1m1 0h1m16 0h1M20 121h1h1m21 0h1m9 0h1m5 0h1m17 0h1m12 0h1m5 0h1h1m35 0h1m2 0h1m53 0h1m20 0h1m5 0h1m5 0h1m17 0h1m2 0h1m12 0h1m32 0h1m59 0h1m1 0h1m26 0h1m14 0h1m47 0h1m1 0h1m12 0h1m19 0h1m8 0h1m10 0h1m28 0h1m30 0h1m3 0h1m2 0h1m3 0h1m1 0h1m3 0h1m27 0h1m17 0h1M50 122h1m7 0h1m1 0h1m6 0h1m18 0h1m19 0h1m13 0h1m7 0h1m7 0h1m19 0h1m2 0h1m3 0h1m17 0h1m19 0h1m15 0h1m27 0h1m4 0h1m1 0h1m18 0h1m11 0h1m43 0h1m2 0h1m39 0h1m42 0h1m10 0h1m1 0h1m9 0h1m34 0h1m14 0h1m12 0h1m23 0h1m2 0h1m11 0h1m10 0h1m20 0h1m13 0h1h1m8 0h1m9 0h1h1m2 0h1m2 0h1m8 0h1M31 123h1m6 0h1m61 0h1m12 0h1h1m11 0h1m40 0h1m1 0h1h1h1m24 0h1m4 0h1m36 0h1m16 0h1m21 0h1h1m8 0h1m1 0h1m7 0h1m74 0h1m4 0h1m21 0h1m14 0h1m25 0h1m4 0h1m25 0h1m18 0h1m14 0h1h1m1 0h1m18 0h1m2 0h1m9 0h1m14 0h1h1m2 0h1m23 0h1m14 0h1m5 0h1M36 124h1m22 0h1m1 0h1m23 0h1m22 0h1m9 0h1m13 0h1m5 0h1m21 0h1m4 0h1m34 0h1m36 0h1m16 0h1h1m23 0h1m9 0h1m2 0h1m1 0h1m13 0h1m3 0h1m9 0h1m5 0h1m10 0h1m1 0h1m28 0h1m2 0h1h1m6 0h1m8 0h1m1 0h1m8 0h1m7 0h1m5 0h1m6 0h1m22 0h1m8 0h1m17 0h1m2 0h1m19 0h1h1h1m12 0h1m75 0h1m3 0h1m11 0h1M33 125h1m8 0h1h1m20 0h1m57 0h1m10 0h1m3 0h1m10 0h1m4 0h1m11 0h1m13 0h1m4 0h1m19 0h1m19 0h1m8 0h1m7 0h1m5 0h1m8 0h1m1 0h1m3 0h1h1h1m3 0h1m5 0h1m28 0h1m3 0h1m2 0h1m7 0h1m6 0h1m5 0h1m5 0h1m6 0h1m1 0h1m13 0h1m11 0h1m7 0h1m2 0h1m2 0h1m14 0h1m3 0h1m8 0h1m31 0h1h1m3 0h1m9 0h1h1m8 0h1m5 0h1m3 0h1m38 0h1m2 0h1m18 0h1m13 0h1m4 0h1h1m33 0h1M41 126h1m13 0h1m14 0h1m24 0h1m18 0h1m22 0h1m4 0h1m23 0h1m5 0h1m10 0h1m26 0h1m1 0h1m21 0h1m3 0h1h1m5 0h1h1m9 0h1m9 0h1h1m21 0h1m4 0h1m4 0h1h1m7 0h1m1 0h1m2 0h1m5 0h1m2 0h1m12 0h1m10 0h1m1 0h1m17 0h1m1 0h1m7 0h1m28 0h1m26 0h1m8 0h1m8 0h1m8 0h1m2 0h1m2 0h1m7 0h1m9 0h1m4 0h1m34 0h1m12 0h1m16 0h1m21 0h1m21 0h1m3 0h1m9 0h1m6 0h1M27 127h1m2 0h1m13 0h1m26 0h1m48 0h1h1m11 0h1m9 0h1m1 0h1m20 0h1m1 0h1m21 0h1m5 0h1m14 0h1m11 0h1h1m10 0h1h1m20 0h1m1 0h1h1m8 0h1m7 0h1m1 0h1m6 0h1m4 0h1h1m9 0h1m14 0h1m8 0h1m5 0h1m6 0h1m52 0h1m10 0h1m32 0h1m1 0h1m9 0h1m1 0h1m45 0h1m48 0h1m9 0h1m6 0h1m10 0h1m2 0h1m28 0h1h1M22 128h1m5 0h1m17 0h1m1 0h1m15 0h1m3 0h1m9 0h1m5 0h1m1 0h1m4 0h1m26 0h1m1 0h1m18 0h1m17 0h1h1m7 0h1m45 0h1m14 0h1m13 0h1m7 0h1m16 0h1m18 0h1m8 0h1m30 0h1m34 0h1m29 0h1m7 0h1m7 0h1m20 0h1m20 0h1m7 0h1m3 0h1m5 0h1m69 0h1h1m8 0h1m13 0h1m5 0h1m25 0h1M25 129h1m23 0h1h1m13 0h1m25 0h1m11 0h1m37 0h1m3 0h1m12 0h1m4 0h1m5 0h1m5 0h1m12 0h1m21 0h1m4 0h1m3 0h1m4 0h1h1m7 0h1m13 0h1m15 0h1m2 0h1h1m8 0h1m15 0h1m14 0h1m3 0h1m52 0h1h1m4 0h1m11 0h1h1h1m11 0h1m23 0h1m2 0h1m10 0h1h1h1m5 0h1m3 0h1m5 0h1m25 0h1m23 0h1m2 0h1m3 0h1m6 0h1m3 0h1m10 0h1m13 0h1m8 0h1m48 0h1M32 130h1m12 0h1m4 0h1h1m19 0h1m5 0h1m6 0h1m21 0h1m2 0h1m62 0h1m17 0h1m4 0h1m7 0h1m8 0h1m17 0h1h1m16 0h1m14 0h1m10 0h1m44 0h1h1m7 0h1m2 0h1m22 0h1m4 0h1m6 0h1m5 0h1m7 0h1m4 0h1m4 0h1m2 0h1m9 0h1m5 0h1m40 0h1m3 0h1m7 0h1m32 0h1m2 0h1m11 0h1m9 0h1m7 0h1m11 0h1m7 0h1m54 0h1M30 131h1m8 0h1m7 0h1m40 0h1m55 0h1m6 0h1m11 0h1m4 0h1m26 0h1m2 0h1m11 0h1m22 0h1m10 0h1m21 0h1h1m23 0h1m13 0h1m6 0h1m2 0h1m2 0h1h1m8 0h1m21 0h1m5 0h1m20 0h1m15 0h1m18 0h1m2 0h1m13 0h1m1 0h1m13 0h1m11 0h1m4 0h1m84 0h1m1 0h1m27 0h1m21 0h1m4 0h1M34 132h1m1 0h1m19 0h1m19 0h1m4 0h1m14 0h1m13 0h1m7 0h1m6 0h1m16 0h1m23 0h1m31 0h1m6 0h1m5 0h1m13 0h1m13 0h1m4 0h1m1 0h1m19 0h1m3 0h1m2 0h1m9 0h1m23 0h1m28 0h1m11 0h1m9 0h1m4 0h1m12 0h1m17 0h1m18 0h1m15 0h1m10 0h1m20 0h1m4 0h1m2 0h1m2 0h1m1 0h1m2 0h1m18 0h1m36 0h1m1 0h1m2 0h1m5 0h1m3 0h1m7 0h1m1 0h1m11 0h1m3 0h1m5 0h1m14 0h1M23 133h1m16 0h1m5 0h1m27 0h1m2 0h1m3 0h1m2 0h1m6 0h1h1m9 0h1m14 0h1m6 0h1h1m2 0h1m4 0h1h1m12 0h1m25 0h1m21 0h1m2 0h1m12 0h1m3 0h1m12 0h1m1 0h1m9 0h1m6 0h1m9 0h1m9 0h1m10 0h1h1m19 0h1m4 0h1m19 0h1m20 0h1h1m13 0h1h1m12 0h1m3 0h1m1 0h1m14 0h1m39 0h1m5 0h1m20 0h1m22 0h1m5 0h1m3 0h1m1 0h1m5 0h1m7 0h1m3 0h1m12 0h1m6 0h1m46 0h1m7 0h1M23 134h1m15 0h1m10 0h1m1 0h1m36 0h1m3 0h1m14 0h1m5 0h1m4 0h1m10 0h1m9 0h1m3 0h1h1m25 0h1m6 0h1m7 0h1m37 0h1m14 0h1m24 0h1m10 0h1m1 0h1m9 0h1m2 0h1m1 0h1m12 0h1m4 0h1m2 0h1m9 0h1m7 0h1m5 0h1m3 0h1m4 0h1m3 0h1h1m7 0h1m2 0h1h1m7 0h1m1 0h1m11 0h1m8 0h1m13 0h1m21 0h1m5 0h1h1m1 0h1m4 0h1m2 0h1m1 0h1m2 0h1m9 0h1m26 0h1m2 0h1m5 0h1m15 0h1m8 0h1m25 0h1h1m3 0h1m8 0h1m8 0h1m1 0h1h1h1m19 0h1h1m3 0h1h1m14 0h1M21 135h1m14 0h1m43 0h1m20 0h1m3 0h1m1 0h1m12 0h1m5 0h1m52 0h1m2 0h1m5 0h1h1m33 0h1m11 0h1m22 0h1m1 0h1m1 0h1m9 0h1m1 0h1m6 0h1m17 0h1m8 0h1m7 0h1m5 0h1m5 0h1m20 0h1m9 0h1m1 0h1m5 0h1m9 0h1m23 0h1m4 0h1m11 0h1m18 0h1m3 0h1m4 0h1m11 0h1m14 0h1m15 0h1m32 0h1m28 0h1m4 0h1m3 0h1m9 0h1m2 0h1m8 0h1m1 0h1m11 0h1m13 0h1M31 136h1m7 0h1m2 0h1m4 0h1m33 0h1m4 0h1m19 0h1m11 0h1m43 0h1m1 0h1m5 0h1m5 0h1m2 0h1h1m4 0h1m4 0h1m6 0h1m7 0h1m22 0h1m13 0h1m5 0h1m6 0h1m19 0h1m14 0h1m6 0h1m2 0h1m21 0h1m9 0h1m5 0h1m2 0h1m13 0h1m5 0h1m26 0h1m35 0h1m7 0h1m8 0h1m13 0h1m8 0h1m3 0h1h1m8 0h1m4 0h1m6 0h1m4 0h1m31 0h1m9 0h1m1 0h1m67 0h1m8 0h1m3 0h1M30 137h1m49 0h1m10 0h1m7 0h1m20 0h1m2 0h1m4 0h1m25 0h1m8 0h1h1h1m15 0h1m16 0h1h1m68 0h1m11 0h1m8 0h1m5 0h1m13 0h1m14 0h1m7 0h1m1 0h1m1 0h1m14 0h1m1 0h1h1m4 0h1m3 0h1m2 0h1m47 0h1m2 0h1m8 0h1m19 0h1m11 0h1m3 0h1m24 0h1m20 0h1m5 0h1h1m6 0h1m8 0h1m5 0h1m20 0h1m35 0h1m17 0h1M28 138h1m1 0h1m33 0h1m1 0h1m15 0h1m6 0h1m44 0h1m20 0h1m7 0h1m3 0h1m6 0h1m1 0h1m1 0h1m3 0h1m2 0h1m16 0h1m19 0h1h1m5 0h1m10 0h1m8 0h1m12 0h1h1m3 0h1h1h1m3 0h1h1m2 0h1m5 0h1m18 0h1m16 0h1m26 0h1m6 0h1m15 0h1m2 0h1m2 0h1m9 0h1m3 0h1m7 0h1m14 0h1m7 0h1m4 0h1m12 0h1m4 0h1m7 0h1m10 0h1m14 0h1m6 0h1m3 0h1m6 0h1m14 0h1m2 0h1m35 0h1m15 0h1m10 0h1m9 0h1m1 0h1m3 0h1m4 0h1m10 0h1m9 0h1M24 139h1m1 0h1m32 0h1h1m15 0h1m22 0h1m24 0h1m13 0h1h1h1m4 0h1m12 0h1m17 0h1m1 0h1m12 0h1m8 0h1m39 0h1m11 0h1m27 0h1m7 0h1m9 0h1m3 0h1m5 0h1m1 0h1m18 0h1m12 0h1m2 0h1h1m24 0h1m7 0h1m4 0h1m2 0h1m3 0h1m2 0h1m21 0h1m3 0h1m32 0h1m8 0h1m13 0h1h1m33 0h1m9 0h1m3 0h1m4 0h1m11 0h1m3 0h1m5 0h1m10 0h1M24 140h1m13 0h1m11 0h1m3 0h1m6 0h1m1 0h1m40 0h1m12 0h1m27 0h1m23 0h1h1m1 0h1m14 0h1m4 0h1m12 0h1m11 0h1m34 0h1m32 0h1m21 0h1m2 0h1m8 0h1m12 0h1m2 0h1h1m1 0h1m34 0h1m2 0h1m32 0h1m5 0h1m1 0h1m16 0h1m28 0h1m17 0h1m3 0h1m11 0h1m1 0h1h1m4 0h1m3 0h1m2 0h1m12 0h1m23 0h1h1m20 0h1m11 0h1m12 0h1h1m14 0h1M22 141h1m2 0h1m23 0h1m6 0h1m18 0h1m11 0h1m7 0h1m5 0h1m20 0h1m48 0h1m25 0h1m10 0h1m3 0h1m10 0h1m11 0h1m5 0h1m13 0h1h1m8 0h1m35 0h1m38 0h1m20 0h1m9 0h1m7 0h1m22 0h1m25 0h1m4 0h1m2 0h1m2 0h1m1 0h1m1 0h1m4 0h1m9 0h1m16 0h1m9 0h1m9 0h1m23 0h1m6 0h1h1m23 0h1m15 0h1m8 0h1m9 0h1m23 0h1m3 0h1m1 0h1h1M21 142h1m13 0h1m10 0h1h1m15 0h1m10 0h1m9 0h1m79 0h1m9 0h1h1m26 0h1m10 0h1m4 0h1m30 0h1m36 0h1m13 0h1m6 0h1m3 0h1m20 0h1m9 0h1m13 0h1m12 0h1m2 0h1m3 0h1m17 0h1m9 0h1m2 0h1m4 0h1m15 0h1m4 0h1m6 0h1m21 0h1m10 0h1m42 0h1m12 0h1m51 0h1m14 0h1h1h1m15 0h1m2 0h1M96 143h1m4 0h1m5 0h1m1 0h1m3 0h1m15 0h1m3 0h1m9 0h1m26 0h1m8 0h1m2 0h1m4 0h1m12 0h1m14 0h1m12 0h1m8 0h1m10 0h1m1 0h1m25 0h1h1m55 0h1m37 0h1m20 0h1m17 0h1m11 0h1m5 0h1m1 0h1m4 0h1m4 0h1m27 0h1m3 0h1h1h1m27 0h1m23 0h1m30 0h1h1m3 0h1m16 0h1m10 0h1m14 0h1M58 144h1m3 0h1m3 0h1m2 0h1m49 0h1m3 0h1m31 0h1m4 0h1m35 0h1m33 0h1m5 0h1m8 0h1m26 0h1m60 0h1m28 0h1m10 0h1m51 0h1m10 0h1m39 0h1m29 0h1m5 0h1m13 0h1m1 0h1m1 0h1m22 0h1m11 0h1m10 0h1m14 0h1m24 0h1M30 145h1m31 0h1m25 0h1m29 0h1m13 0h1m32 0h1h1m27 0h1m9 0h1m8 0h1m15 0h1m7 0h1h1m8 0h1m54 0h1m44 0h1m48 0h1m67 0h1m7 0h1m4 0h1m49 0h1m25 0h1m6 0h1m22 0h1m3 0h1m19 0h1m1 0h1m2 0h1m6 0h1M60 146h1m41 0h1m2 0h1m8 0h1m6 0h1m50 0h1m6 0h1m38 0h1m7 0h1m8 0h1m2 0h1m7 0h1m11 0h1h1m43 0h1m9 0h1m12 0h1m9 0h1m8 0h1m36 0h1h1m26 0h1m14 0h1m39 0h1m4 0h1m24 0h1h1m9 0h1m5 0h1m6 0h1m68 0h1M73 147h1m13 0h1m11 0h1m10 0h1m17 0h1m28 0h1m15 0h1m44 0h1m5 0h1m29 0h1m21 0h1m11 0h1m26 0h1m38 0h1m17 0h1m32 0h1m4 0h1m104 0h1m3 0h1m48 0h1m27 0h1M20 148h1m2 0h1m3 0h1m14 0h1h1m9 0h1m17 0h1m42 0h1m2 0h1m15 0h1m19 0h1m4 0h1m20 0h1m37 0h1m6 0h1m42 0h1m32 0h1h1m2 0h1m71 0h1m57 0h1m16 0h1m5 0h1m8 0h1m6 0h1m17 0h1m22 0h1m59 0h1m11 0h1m1 0h1m30 0h1M30 149h1m42 0h1m4 0h1m21 0h1m2 0h1m5 0h1m27 0h1m8 0h1m1 0h1m17 0h1m28 0h1m96 0h1m48 0h1m35 0h1m21 0h1m45 0h1m6 0h1m10 0h1m23 0h1m3 0h1m11 0h1m13 0h1m2 0h1h1m2 0h1m8 0h1M32 150h1m41 0h1m11 0h1m15 0h1m39 0h1m1 0h1m40 0h1m39 0h1m20 0h1m114 0h1m34 0h1m30 0h1m49 0h1m15 0h1m38 0h1m54 0h1m13 0h1M46 151h1m1 0h1m11 0h1m9 0h1m26 0h1m59 0h1m47 0h1m2 0h1m1 0h1m21 0h1h1m3 0h1h1m30 0h1m70 0h1m5 0h1m37 0h1m78 0h1m9 0h1m129 0h1m8 0h1m1 0h1m4 0h1M41 152h1m20 0h1m30 0h1m50 0h1m30 0h1m37 0h1m49 0h1m32 0h1m16 0h1m30 0h1m3 0h1m7 0h1m2 0h1m20 0h1m21 0h1m24 0h1m60 0h1m7 0h1m75 0h1M54 153h1h1m22 0h1m77 0h1m108 0h1m42 0h1m7 0h1m57 0h1m2 0h1m61 0h1m35 0h1h1m7 0h1m17 0h1m4 0h1m27 0h1m45 0h1m19 0h1M41 154h1m94 0h1m50 0h1m53 0h1m19 0h1m7 0h1m19 0h1m85 0h1m6 0h1m4 0h1m12 0h1m60 0h1m105 0h1m20 0h1M46 155h1m45 0h1m19 0h1m51 0h1m5 0h1m45 0h1m173 0h1m14 0h1m156 0h1M33 156h1m46 0h1m89 0h1m14 0h1m46 0h1m11 0h1m32 0h1m39 0h1h1m40 0h1m1 0h1m99 0h1m83 0h1m24 0h1m43 0h1M81 157h1m19 0h1m29 0h1m30 0h1m86 0h1m177 0h1M116 158h1m184 0h1m69 0h1m36 0h1m59 0h1m95 0h1M205 159h1m3 0h1m139 0h1m17 0h1m25 0h1m224 0h1M447 160h1M300 161h1"/>
<path stroke="#000050" d="M74 80h1m39 0h1m18 0h1m55 0h1m115 0h1m52 0h1m33 0h1m41 0h1m49 0h1M27 81h1m39 0h1m155 0h1m81 0h1m143 0h1m29 0h1m5 0h1m13 0h1m25 0h1M27 82h1m70 0h1m13 0h1m77 0h1m126 0h1m33 0h1m61 0h1M66 83h1m40 0h1m3 0h1m4 0h1m45 0h1h1m227 0h1m17 0h1m67 0h1m69 0h1h1m8 0h1m4 0h1M57 84h1m188 0h1m41 0h1m51 0h1m64 0h1m144 0h1m3 0h1m65 0h1M173 85h1m7 0h1m119 0h1m54 0h1m110 0h1m2 0h1m31 0h1m1 0h1m31 0h1M73 86h1m23 0h1m392 0h1m77 0h1M52 87h1m74 0h1m31 0h1m56 0h1m206 0h1h1m84 0h1m36 0h1m11 0h1m19 0h1M34 88h1m10 0h1h1m81 0h1m59 0h1m3 0h1m67 0h1m32 0h1m292 0h1M82 89h1m50 0h1m87 0h1m38 0h1m37 0h1m31 0h1m76 0h1m146 0h1m14 0h1m43 0h1M22 90h1m7 0h1m6 0h1m137 0h1m212 0h1m21 0h1m40 0h1m4 0h1m9 0h1h1m35 0h1m5 0h1M42 91h1m81 0h1m5 0h1m105 0h1m41 0h1m55 0h1m89 0h1m56 0h1m60 0h1M67 92h1m2 0h1m90 0h1m27 0h1m19 0h1m31 0h1m19 0h1m15 0h1m130 0h1m57 0h1m89 0h1M22 93h1m51 0h1m114 0h1m122 0h1m35 0h1m77 0h1m28 0h1m57 0h1m10 0h1m65 0h1m3 0h1m16 0h1M106 94h1m103 0h1m8 0h1m9 0h1m17 0h1m231 0h1m57 0h1m62 0h1M41 95h1m21 0h1m49 0h1m19 0h1m80 0h1m88 0h1m31 0h1m51 0h1m90 0h1m13 0h1m11 0h1m85 0h1h1m10 0h1m6 0h1M22 96h1m79 0h1m30 0h1m85 0h1m17 0h1m123 0h1m1 0h1m39 0h1m2 0h1m28 0h1m13 0h1m67 0h1m44 0h1m10 0h1M27 97h1m4 0h1m31 0h1m2 0h1m23 0h1m47 0h1m233 0h1m42 0h1m30 0h1m13 0h1m38 0h1m82 0h1M22 98h1m15 0h1m5 0h1m28 0h1m18 0h1m2 0h1m115 0h1m25 0h1m46 0h1m2 0h1m1 0h1m115 0h1m30 0h1m53 0h1m11 0h1m55 0h1M86 99h1m14 0h1m1 0h1m24 0h1h1m44 0h1m46 0h1m2 0h1m33 0h1m28 0h1m4 0h1m60 0h1m121 0h1h1m102 0h1M22 100h1m41 0h1m69 0h1h1m5 0h1m96 0h1m44 0h1m35 0h1h1m36 0h1m33 0h1m3 0h1m91 0h1m95 0h1M48 101h1m104 0h1m16 0h1m56 0h1m6 0h1m38 0h1m5 0h1m17 0h1m5 0h1m10 0h1h1m7 0h1m28 0h1m14 0h1m31 0h1m62 0h1m24 0h1m84 0h1m20 0h1M72 102h1m2 0h1m89 0h1m43 0h1m30 0h1m63 0h1m29 0h1m8 0h1m18 0h1m32 0h1m104 0h1m24 0h1M21 103h1m23 0h1m4 0h1m16 0h1m7 0h1m73 0h1m31 0h1m198 0h1m107 0h1m1 0h1m58 0h1m9 0h1m5 0h1M117 104h1m20 0h1m43 0h1m103 0h1m27 0h1m89 0h1m1 0h1m31 0h1h1m3 0h1m59 0h1m70 0h1h1M25 105h1m33 0h1m53 0h1m50 0h1m52 0h1m2 0h1m16 0h1m2 0h1m17 0h1h1m31 0h1m55 0h1m72 0h1m39 0h1m28 0h1m7 0h1m23 0h1m23 0h1m1 0h1M82 106h1m15 0h1m67 0h1m24 0h1m34 0h1m41 0h1m33 0h1m24 0h1m11 0h1m20 0h1m37 0h1m59 0h1m19 0h1m7 0h1m9 0h1m1 0h1m76 0h1m4 0h1m13 0h1M56 107h1m32 0h1m190 0h1m33 0h1m36 0h1m19 0h1m12 0h1m166 0h1m2 0h1m5 0h1m11 0h1m45 0h1M40 108h1m9 0h1m23 0h1m7 0h1m48 0h1m31 0h1m18 0h1m19 0h1m27 0h1m19 0h1m20 0h1m36 0h1m54 0h1h1m2 0h1m19 0h1m52 0h1m13 0h1m64 0h1m94 0h1M63 109h1m5 0h1m74 0h1m24 0h1m57 0h1m11 0h1m32 0h1m22 0h1h1m17 0h1m18 0h1m9 0h1m15 0h1m56 0h1m12 0h1m13 0h1m154 0h1m3 0h1m8 0h1M53 110h1m53 0h1m20 0h1m9 0h1m20 0h1m14 0h1m28 0h1m13 0h1m39 0h1m19 0h1m7 0h1m13 0h1m21 0h1m26 0h1m20 0h1m59 0h1m3 0h1m56 0h1m57 0h1m49 0h1M71 111h1m10 0h1m37 0h1m16 0h1h1m15 0h1m44 0h1m12 0h1m52 0h1m12 0h1m33 0h1m46 0h1m40 0h1m28 0h1m40 0h1m107 0h1m2 0h1M48 112h1m11 0h1m1 0h1m35 0h1m11 0h1m7 0h1m9 0h1m28 0h1m4 0h1m17 0h1m50 0h1m14 0h1m1 0h1m17 0h1m29 0h1m32 0h1m14 0h1m5 0h1m62 0h1m8 0h1m2 0h1m63 0h1m47 0h1m11 0h1m18 0h1m36 0h1m7 0h1m2 0h1M63 113h1m113 0h1m71 0h1m53 0h1m58 0h1m30 0h1m108 0h1m31 0h1m65 0h1m14 0h1h1M65 114h1m64 0h1m35 0h1m14 0h1m67 0h1m17 0h1m23 0h1m19 0h1m37 0h1m69 0h1m10 0h1m11 0h1m73 0h1m23 0h1m34 0h1m19 0h1m8 0h1M112 115h1m38 0h1m29 0h1m50 0h1m39 0h1m18 0h1m18 0h1m19 0h1m35 0h1m94 0h1m1 0h1m52 0h1m7 0h1m2 0h1m66 0h1M77 116h1m19 0h1m99 0h1m59 0h1m61 0h1m55 0h1m9 0h1m43 0h1m16 0h1m16 0h1m19 0h1m31 0h1m46 0h1m56 0h1M35 117h1m10 0h1m10 0h1m4 0h1m7 0h1m15 0h1m3 0h1m35 0h1m3 0h1m6 0h1m50 0h1m11 0h1m2 0h1m9 0h1m12 0h1m1 0h1m172 0h1m17 0h1m11 0h1m24 0h1m5 0h1m113 0h1M38 118h1m18 0h1m50 0h1m6 0h1m76 0h1m22 0h1m37 0h1m22 0h1m45 0h1m102 0h1m3 0h1m34 0h1m55 0h1m2 0h1m6 0h1m12 0h1m67 0h1M25 119h1m27 0h1m123 0h1m19 0h1m23 0h1m11 0h1m43 0h1m28 0h1m16 0h1m70 0h1m41 0h1m8 0h1m101 0h1M66 120h1m16 0h1m67 0h1m18 0h1m71 0h1m17 0h1m93 0h1m22 0h1m26 0h1m15 0h1m104 0h1m89 0h1M24 121h1m2 0h1m13 0h1m15 0h1m45 0h1m17 0h1m8 0h1m10 0h1m23 0h1m29 0h1m30 0h1h1m32 0h1m4 0h1m27 0h1m2 0h1m41 0h1m48 0h1m17 0h1m22 0h1m21 0h1m12 0h1m29 0h1M23 122h1m44 0h1h1m30 0h1m9 0h1m15 0h1m16 0h1m17 0h1m16 0h1m7 0h1m9 0h1m2 0h1m23 0h1m34 0h1m28 0h1m10 0h1m8 0h1m34 0h1m62 0h1m5 0h1m16 0h1m29 0h1m8 0h1m113 0h1m34 0h1M22 123h1m46 0h1m59 0h1m28 0h1m20 0h1m57 0h1m14 0h1m4 0h1m21 0h1m85 0h1m45 0h1m13 0h1m12 0h1m99 0h1M24 124h1m40 0h1m2 0h1m12 0h1m46 0h1m41 0h1m3 0h1m13 0h1m43 0h1m31 0h1m34 0h1m31 0h1m59 0h1m2 0h1m103 0h1m30 0h1m23 0h1m30 0h1M40 125h1m25 0h1m16 0h1m5 0h1m8 0h1m4 0h1m20 0h1m41 0h1m6 0h1m76 0h1m26 0h1m71 0h1m34 0h1m5 0h1m65 0h1m22 0h1m17 0h1h1m17 0h1m20 0h1m54 0h1M59 126h1m55 0h1m17 0h1m60 0h1m33 0h1m36 0h1m14 0h1m2 0h1m31 0h1m20 0h1m57 0h1m14 0h1h1m14 0h1m61 0h1m44 0h1m8 0h1m7 0h1m6 0h1m6 0h1m17 0h1m14 0h1M22 127h1m16 0h1m106 0h1m7 0h1h1m92 0h1m2 0h1m41 0h1m3 0h1m2 0h1m12 0h1m17 0h1m15 0h1m17 0h1m18 0h1m48 0h1m7 0h1m26 0h1m6 0h1m6 0h1m50 0h1m34 0h1m2 0h1m27 0h1m8 0h1M47 128h1m23 0h1m20 0h1m9 0h1m9 0h1m75 0h1m41 0h1m14 0h1m55 0h1m11 0h1m29 0h1m11 0h1m54 0h1m81 0h1m8 0h1m4 0h1m40 0h1M33 129h1m23 0h1m2 0h1m16 0h1m14 0h1m24 0h1m2 0h1m5 0h1m25 0h1m73 0h1m9 0h1m27 0h1m18 0h1m19 0h1m20 0h1m27 0h1m19 0h1m31 0h1m13 0h1m36 0h1m11 0h1m2 0h1m34 0h1m11 0h1m46 0h1M38 130h1m2 0h1m81 0h1m18 0h1m19 0h1m8 0h1m11 0h1m1 0h1m56 0h1m15 0h1m18 0h1m10 0h1m38 0h1m6 0h1m94 0h1m9 0h1m13 0h1m23 0h1m39 0h1m24 0h1m20 0h1m8 0h1m10 0h1m7 0h1m2 0h1M43 131h1m48 0h1m18 0h1m41 0h1m3 0h1m39 0h1m67 0h1m9 0h1m1 0h1m1 0h1h1m25 0h1m13 0h1m13 0h1m25 0h1m28 0h1m13 0h1m19 0h1m73 0h1m34 0h1m26 0h1m13 0h1M39 132h1m12 0h1m53 0h1m43 0h1m24 0h1m6 0h1m2 0h1m13 0h1h1m28 0h1m48 0h1m67 0h1m7 0h1m2 0h1m16 0h1m39 0h1h1h1m37 0h1m65 0h1m72 0h1M34 133h1m28 0h1m9 0h1m1 0h1m18 0h1m11 0h1m7 0h1m25 0h1m17 0h1m9 0h1m8 0h1m6 0h1m80 0h1m22 0h1m11 0h1m16 0h1m35 0h1m28 0h1m24 0h1m19 0h1m26 0h1m41 0h1m5 0h1m7 0h1m18 0h1m1 0h1m40 0h1m28 0h1M30 134h1m80 0h1m46 0h1m4 0h1m15 0h1m14 0h1m37 0h1m7 0h1m40 0h1m9 0h1m20 0h1m4 0h1m58 0h1m12 0h1m28 0h1m4 0h1m50 0h1m1 0h1m138 0h1M34 135h1m21 0h1m2 0h1m79 0h1m24 0h1m35 0h1m50 0h1m1 0h1m63 0h1m11 0h1m4 0h1m54 0h1m3 0h1m25 0h1m7 0h1m2 0h1m59 0h1m30 0h1m7 0h1m12 0h1m1 0h1m5 0h1m23 0h1m22 0h1M25 136h1m4 0h1m29 0h1h1m76 0h1m1 0h1m36 0h1m24 0h1h1m11 0h1m5 0h1m18 0h1m68 0h1m20 0h1m95 0h1m32 0h1m16 0h1m3 0h1m4 0h1m10 0h1m5 0h1m2 0h1m111 0h1M58 137h1m38 0h1m28 0h1m22 0h1m21 0h1m30 0h1m4 0h1m6 0h1m27 0h1m9 0h1m33 0h1m13 0h1h1m28 0h1h1m11 0h1m1 0h1m64 0h1m13 0h1m7 0h1m16 0h1m52 0h1m6 0h1m16 0h1m43 0h1m13 0h1m13 0h1m21 0h1M25 138h1m3 0h1m16 0h1m88 0h1m2 0h1m59 0h1m13 0h1m21 0h1m7 0h1m1 0h1m6 0h1m5 0h1m33 0h1m8 0h1m11 0h1m41 0h1m7 0h1m35 0h1m38 0h1m8 0h1m26 0h1m4 0h1m23 0h1m22 0h1m24 0h1m10 0h1m22 0h1m28 0h1M25 139h1m9 0h1m56 0h1m16 0h1m24 0h1m1 0h1m23 0h1m7 0h1m55 0h1m28 0h1m8 0h1m10 0h1m11 0h1m27 0h1m14 0h1m31 0h1m5 0h1m134 0h1m36 0h1m10 0h1m8 0h1h1m48 0h1m10 0h1M136 140h1m6 0h1m8 0h1m23 0h1m17 0h1m27 0h1m53 0h1m12 0h1m2 0h1m37 0h1m3 0h1m18 0h1m1 0h1h1m24 0h1h1m21 0h1m11 0h1m21 0h1m6 0h1m3 0h1m7 0h1m8 0h1m1 0h1h1m5 0h1m14 0h1m28 0h1m4 0h1m20 0h1m24 0h1m17 0h1M43 141h1m72 0h1h1m19 0h1m20 0h1m1 0h1m7 0h1m13 0h1m32 0h1m32 0h1m9 0h1m21 0h1m5 0h1m16 0h1m13 0h1m9 0h1m10 0h1m10 0h1m75 0h1m9 0h1m23 0h1m30 0h1m70 0h1m15 0h1m3 0h1m11 0h1m7 0h1m16 0h1M30 142h1h1m50 0h1m31 0h1m22 0h1m7 0h1m37 0h1m1 0h1m11 0h1h1m2 0h1m32 0h1m34 0h1m28 0h1m14 0h1m16 0h1m4 0h1h1m17 0h1m59 0h1m17 0h1m80 0h1m31 0h1m26 0h1m46 0h1M21 143h1m3 0h1m17 0h1m35 0h1m31 0h1m13 0h1m14 0h1m12 0h1m30 0h1m12 0h1m3 0h1m5 0h1m39 0h1m30 0h1m7 0h1m16 0h1m7 0h1m7 0h1m34 0h1m15 0h1m36 0h1m35 0h1m71 0h1m27 0h1m9 0h1m15 0h1m45 0h1M40 144h1m3 0h1m42 0h1m3 0h1m34 0h1m18 0h1m16 0h1m12 0h1m7 0h1m9 0h1m11 0h1m12 0h1m21 0h1m34 0h1h1m28 0h1m7 0h1h1m32 0h1m43 0h1m9 0h1m12 0h1m6 0h1m1 0h1m28 0h1m32 0h1m28 0h1m24 0h1m49 0h1M43 145h1m20 0h1m87 0h1m72 0h1m19 0h1m66 0h1m18 0h1m11 0h1h1m49 0h1m4 0h1m26 0h1m4 0h1m14 0h1m32 0h1m1 0h1m43 0h1m5 0h1m23 0h1m1 0h1m22 0h1m23 0h1M43 146h1m26 0h1m25 0h1m25 0h1m1 0h1m2 0h1m33 0h1m89 0h1m5 0h1m40 0h1m43 0h1m6 0h1m45 0h1m12 0h1m9 0h1m15 0h1m12 0h1m14 0h1m4 0h1m3 0h1m1 0h1m28 0h1m2 0h1m11 0h1m61 0h1m32 0h1M46 147h1m8 0h1m9 0h1m2 0h1m43 0h1m42 0h1m16 0h1m72 0h1m16 0h1h1m89 0h1m14 0h1m16 0h1m7 0h1m3 0h1m48 0h1m13 0h1m12 0h1m27 0h1m51 0h1m46 0h1m11 0h1M41 148h1m5 0h1h1m19 0h1m25 0h1h1m68 0h1m24 0h1m16 0h1m12 0h1h1m23 0h1m27 0h1m25 0h1m23 0h1m9 0h1m6 0h1m8 0h1m25 0h1m10 0h1m6 0h1m6 0h1h1m5 0h1m13 0h1m7 0h1m14 0h1m11 0h1m5 0h1m37 0h1m10 0h1m12 0h1m33 0h1m9 0h1m41 0h1M20 149h1m1 0h1m15 0h1m46 0h1m11 0h1m14 0h1m34 0h1m21 0h1m20 0h1m7 0h1m24 0h1m30 0h1m8 0h1m2 0h1h1m4 0h1m39 0h1m8 0h1m4 0h1m42 0h1m37 0h1m7 0h1m21 0h1m35 0h1m58 0h1M45 150h1m4 0h1m5 0h1m66 0h1m25 0h1m43 0h1m69 0h1h1m24 0h1m3 0h1m6 0h1m8 0h1m6 0h1m4 0h1m2 0h1m3 0h1m9 0h1m2 0h1m31 0h1m16 0h1m8 0h1m10 0h1m14 0h1m13 0h1m29 0h1m8 0h1m32 0h1M23 151h1m6 0h1m13 0h1m14 0h1m4 0h1m13 0h1m14 0h1m38 0h1m13 0h1m13 0h1m27 0h1m26 0h1m7 0h1m7 0h1m57 0h1h1m38 0h1m3 0h1m15 0h1m12 0h1m8 0h1m10 0h1m2 0h1m14 0h1h1m14 0h1h1m7 0h1m11 0h1m4 0h1m26 0h1m1 0h1m6 0h1m25 0h1m11 0h1m32 0h1m10 0h1m31 0h1m4 0h1m6 0h1M23 152h1m4 0h1m26 0h1m59 0h1m8 0h1m31 0h1m50 0h1m32 0h1m4 0h1m38 0h1m36 0h1m11 0h1m4 0h1m19 0h1m1 0h1m12 0h1m9 0h1m6 0h1m4 0h1m5 0h1m1 0h1m50 0h1m13 0h1m3 0h1m95 0h1m16 0h1m13 0h1m6 0h1m7 0h1M52 153h1m20 0h1m16 0h1h1m5 0h1m8 0h1m7 0h1m13 0h1m20 0h1m21 0h1m10 0h1m16 0h1m14 0h1m3 0h1h1m22 0h1m7 0h1m53 0h1m22 0h1m14 0h1m4 0h1m3 0h1m8 0h1m4 0h1m2 0h1m1 0h1m2 0h1m4 0h1m57 0h1m15 0h1m2 0h1m15 0h1m71 0h1m23 0h1m10 0h1m12 0h1m10 0h1m8 0h1M35 154h1m28 0h1m8 0h1m10 0h1m1 0h1m19 0h1m22 0h1m31 0h1h1m7 0h1m7 0h1m1 0h1m17 0h1m3 0h1m12 0h1m27 0h1m3 0h1m52 0h1m32 0h1m18 0h1m6 0h1m16 0h1m15 0h1m1 0h1m85 0h1m22 0h1m18 0h1m36 0h1h1M35 155h1m37 0h1m12 0h1m27 0h1m3 0h1m52 0h1m12 0h1m1 0h1m57 0h1m45 0h1m2 0h1m9 0h1m32 0h1m66 0h1m11 0h1m9 0h1m7 0h1m13 0h1m11 0h1m21 0h1m4 0h1m14 0h1m12 0h1h1m25 0h1m21 0h1m9 0h1M30 156h1m19 0h1m6 0h1m9 0h1m1 0h1m35 0h1m17 0h1m10 0h1m18 0h1m5 0h1m44 0h1m11 0h1m5 0h1m3 0h1m4 0h1m66 0h1m30 0h1m1 0h1m21 0h1m6 0h1m33 0h1m72 0h1m2 0h1m20 0h1m2 0h1h1m11 0h1m11 0h1m6 0h1m28 0h1m12 0h1m25 0h1m3 0h1m20 0h1M21 157h1m2 0h1m20 0h1m20 0h1m43 0h1m63 0h1m19 0h1m11 0h1m20 0h1m2 0h1m13 0h1m2 0h1m24 0h1m47 0h1h1m87 0h1m3 0h1m1 0h1m18 0h1m22 0h1m10 0h1m3 0h1m29 0h1m6 0h1m21 0h1m25 0h1m7 0h1m19 0h1h1m2 0h1m4 0h1m16 0h1M26 158h1m13 0h1m5 0h1m26 0h1m32 0h1m6 0h1m8 0h1m19 0h1m12 0h1m35 0h1m2 0h1m22 0h1m5 0h1m2 0h1m1 0h1m1 0h1m6 0h1m2 0h1m2 0h1m1 0h1m82 0h1m12 0h1m23 0h1m1 0h1m9 0h1m21 0h1m2 0h1m6 0h1m5 0h1m7 0h1m5 0h1m48 0h1m12 0h1m40 0h1m6 0h1m29 0h1m14 0h1m8 0h1m12 0h1m4 0h1M26 159h1m3 0h1m20 0h1m14 0h1m20 0h1m8 0h1m9 0h1m4 0h1m4 0h1m2 0h1m12 0h1m18 0h1m55 0h1m19 0h1m3 0h1m32 0h1m21 0h1m1 0h1m41 0h1m15 0h1m13 0h1m2 0h1m9 0h1m24 0h1m62 0h1m3 0h1m5 0h1m14 0h1m1 0h1m8 0h1m37 0h1m30 0h1m3 0h1m22 0h1M36 160h1m10 0h1m27 0h1m32 0h1m12 0h1m5 0h1m28 0h1m11 0h1m7 0h1m21 0h1m31 0h1m39 0h1m25 0h1m8 0h1m2 0h1m65 0h1h1m7 0h1m36 0h1m39 0h1m19 0h1m14 0h1m6 0h1m3 0h1m31 0h1m8 0h1m19 0h1m3 0h1h1m11 0h1m12 0h1m5 0h1m7 0h1M30 161h1m75 0h1m17 0h1h1m38 0h1m19 0h1m6 0h1m28 0h1m13 0h1m17 0h1m2 0h1m4 0h1m27 0h1m22 0h1m18 0h1m4 0h1m43 0h1m39 0h1m29 0h1m53 0h1m24 0h1m35 0h1m39 0h1M36 162h1m12 0h1h1m13 0h1m3 0h1m48 0h1m15 0h1m27 0h1m24 0h1m35 0h1m5 0h1m19 0h1m7 0h1m2 0h1m57 0h1m3 0h1m1 0h1m44 0h1m17 0h1m7 0h1m2 0h1m4 0h1m26 0h1m4 0h1m1 0h1m21 0h1m3 0h1m108 0h1m2 0h1m5 0h1m29 0h1M30 163h1m4 0h1m31 0h1m40 0h1m33 0h1m8 0h1m15 0h1m21 0h1m29 0h1m23 0h1m23 0h1m18 0h1m32 0h1m3 0h1m32 0h1m8 0h1m17 0h1m27 0h1m24 0h1m93 0h1m29 0h1m1 0h1m2 0h1m17 0h1m5 0h1m4 0h1h1m21 0h1M29 164h1m14 0h1m1 0h1m11 0h1m7 0h1h1m17 0h1m27 0h1m12 0h1m8 0h1m14 0h1m1 0h1m6 0h1m30 0h1m19 0h1m4 0h1m9 0h1m124 0h1m24 0h1m42 0h1m22 0h1m15 0h1m33 0h1m27 0h1m6 0h1m7 0h1m7 0h1m5 0h1h1m21 0h1M64 165h1m9 0h1m21 0h1m5 0h1m29 0h1m11 0h1m4 0h1m5 0h1m7 0h1m23 0h1m78 0h1m16 0h1m42 0h1m15 0h1m4 0h1m8 0h1m4 0h1m5 0h1m21 0h1m9 0h1m3 0h1m20 0h1m51 0h1m7 0h1m14 0h1m11 0h1m1 0h1m23 0h1m31 0h1m21 0h1m3 0h1m4 0h1M49 166h1m13 0h1m4 0h1m69 0h1m52 0h1m40 0h1m14 0h1m17 0h1m4 0h1m12 0h1m11 0h1m28 0h1m24 0h1m104 0h1m66 0h1m21 0h1h1m30 0h1m26 0h1h1M27 167h1m1 0h1m5 0h1m54 0h1m88 0h1m2 0h1m64 0h1m28 0h1m88 0h1m2 0h1m1 0h1m28 0h1m38 0h1m10 0h1m28 0h1m12 0h1m96 0h1m15 0h1m8 0h1M34 168h1m11 0h1m98 0h1m149 0h1m35 0h1m13 0h1h1m2 0h1m17 0h1m22 0h1m30 0h1m17 0h1m25 0h1m20 0h1m52 0h1m34 0h1m37 0h1M32 169h1m20 0h1m31 0h1m5 0h1m11 0h1m5 0h1m14 0h1m19 0h1m2 0h1m36 0h1m20 0h1m25 0h1m47 0h1m3 0h1m44 0h1m23 0h1m5 0h1m71 0h1m44 0h1m16 0h1m60 0h1m49 0h1m7 0h1M31 170h1m2 0h1m14 0h1m25 0h1m102 0h1h1m6 0h1m13 0h1m53 0h1m101 0h1m39 0h1m6 0h1m10 0h1m10 0h1m27 0h1m19 0h1m20 0h1m9 0h1m4 0h1m18 0h1m60 0h1m26 0h1M36 171h1m75 0h1m31 0h1m23 0h1m13 0h1m118 0h1m1 0h1m16 0h1m13 0h1m51 0h1m5 0h1m12 0h1m6 0h1m11 0h1m43 0h1m53 0h1m2 0h1m5 0h1m10 0h1m18 0h1M46 172h1m19 0h1h1m82 0h1m106 0h1m11 0h1m109 0h1m24 0h1m70 0h1m19 0h1m2 0h1m2 0h1m12 0h1m84 0h1M200 173h1m59 0h1m53 0h1m88 0h1m140 0h1m46 0h1M43 174h1m96 0h1m114 0h1m117 0h1m57 0h1M79 175h1m110 0h1m65 0h1m6 0h1m67 0h1m33 0h1m15 0h1m39 0h1m8 0h1m78 0h1m103 0h1M49 176h1m20 0h1m94 0h1m16 0h1m226 0h1m42 0h1m6 0h1m47 0h1m69 0h1m23 0h1M40 177h1m35 0h1m32 0h1m77 0h1m253 0h1m13 0h1m41 0h1m37 0h1m81 0h1M82 178h1m29 0h1m7 0h1m11 0h1m10 0h1m63 0h1m52 0h1m157 0h1m21 0h1m99 0h1m79 0h1M299 179h1m202 0h1M197 180h1m35 0h1m1 0h1M259 181h1m15 0h1m32 0h1m105 0h1m83 0h1M23 182h1m41 0h1m466 0h1M248 183h1m50 0h1m53 0h1M568 184h1M411 185h1m103 0h1"/>
<path stroke="#000058" d="M138 80h1m119 0h1m26 0h1m54 0h1m240 0h1M113 81h1m34 0h1m91 0h1m70 0h1m275 0h1M138 82h1m43 0h1m166 0h1m229 0h1M222 83h1m96 0h1m32 0h1m64 0h1M375 84h1m206 0h1M207 85h1M195 86h1m29 0h1m19 0h1m216 0h1m32 0h1m17 0h1m99 0h1M65 87h1m3 0h1m70 0h1m50 0h1m133 0h1m231 0h1M136 88h1m200 0h1M101 89h1m154 0h1m28 0h1m23 0h1m49 0h1M152 90h1m99 0h1m31 0h1m208 0h1m3 0h1m69 0h1M167 91h1m1 0h1m20 0h1m203 0h1m3 0h1m63 0h1m1 0h1M74 92h1m44 0h1m76 0h1m70 0h1m77 0h1m12 0h1m115 0h1m41 0h1M103 93h1m422 0h1M80 94h1m273 0h1m3 0h1m110 0h1m30 0h1m21 0h1m47 0h1m7 0h1M250 95h1m8 0h1m359 0h1M118 96h1m191 0h1m24 0h1m40 0h1m106 0h1M84 97h1m165 0h1m23 0h1m57 0h1m38 0h1m76 0h1m19 0h1M59 98h1m108 0h1m36 0h1m333 0h1M20 99h1m25 0h1m73 0h1m108 0h1m278 0h1m9 0h1m34 0h1M60 100h1m19 0h1m195 0h1m265 0h1m34 0h1M122 101h1m35 0h1m4 0h1m25 0h1m23 0h1m111 0h1m22 0h1m111 0h1m126 0h1M74 102h1m100 0h1m4 0h1m62 0h1m14 0h1m20 0h1m5 0h1m142 0h1m95 0h1M132 103h1m39 0h1m36 0h1m15 0h1m169 0h1m157 0h1m6 0h1m17 0h1m10 0h1M88 104h1m2 0h1m65 0h1h1m109 0h1m95 0h1m94 0h1M66 105h1m243 0h1m120 0h1m170 0h1M132 106h1m102 0h1m27 0h1m68 0h1m36 0h1m15 0h1m22 0h1m28 0h1m19 0h1m39 0h1m18 0h1m31 0h1M28 107h1m81 0h1m103 0h1m36 0h1m1 0h1m44 0h1m11 0h1m231 0h1m12 0h1m63 0h1M44 108h1m106 0h1m87 0h1m93 0h1m5 0h1m18 0h1m94 0h1m72 0h1M32 109h1m227 0h1m77 0h1m16 0h1m56 0h1m6 0h1m5 0h1m24 0h1m32 0h1m26 0h1m57 0h1M45 110h1m28 0h1m10 0h1m50 0h1m227 0h1m175 0h1M83 111h1m42 0h1m33 0h1m8 0h1m10 0h1m12 0h1m77 0h1m19 0h1m37 0h1m54 0h1m7 0h1m5 0h1m153 0h1M50 112h1m141 0h1m37 0h1m199 0h1m45 0h1m16 0h1m103 0h1M189 113h1m24 0h1m113 0h1m84 0h1m35 0h1m35 0h1M22 114h1m63 0h1m143 0h1m3 0h1m29 0h1m32 0h1m102 0h1m36 0h1m54 0h1m85 0h1m31 0h1M54 115h1m31 0h1m148 0h1m5 0h1m98 0h1m60 0h1m31 0h1m179 0h1M24 116h1m202 0h1m17 0h1m85 0h1m20 0h1m17 0h1m31 0h1m126 0h1m65 0h1M76 117h1m166 0h1m60 0h1m8 0h1m60 0h1m14 0h1m95 0h1m123 0h1M58 118h1m111 0h1m13 0h1m245 0h1m21 0h1m12 0h1m74 0h1M91 119h1m128 0h1m69 0h1m26 0h1m25 0h1m115 0h1m11 0h1m16 0h1m110 0h1M116 120h1m16 0h1m10 0h1m65 0h1m39 0h1m49 0h1m99 0h1m48 0h1m109 0h1M36 121h1m34 0h1m16 0h1m2 0h1m58 0h1m32 0h1m116 0h1m29 0h1m134 0h1m152 0h1M142 122h1m67 0h1m8 0h1m36 0h1m59 0h1m30 0h1m136 0h1m13 0h1m17 0h1m4 0h1m75 0h1M23 123h1m119 0h1m21 0h1m17 0h1m57 0h1m44 0h1m5 0h1m10 0h1m116 0h1m54 0h1m90 0h1M77 124h1m53 0h1m5 0h1m72 0h1m2 0h1m38 0h1m4 0h1m12 0h1m105 0h1m35 0h1m53 0h1M78 125h1m32 0h1m35 0h1m157 0h1m26 0h1m1 0h1m83 0h1m38 0h1m27 0h1m29 0h1m18 0h1m15 0h1M29 126h1m24 0h1m65 0h1m34 0h1m302 0h1m79 0h1m54 0h1m4 0h1M48 127h1m12 0h1m34 0h1h1m21 0h1m57 0h1m14 0h1m152 0h1m6 0h1m22 0h1m20 0h1m60 0h1m1 0h1m4 0h1m118 0h1M41 128h1m13 0h1m27 0h1m230 0h1m46 0h1m10 0h1m64 0h1m13 0h1m86 0h1m42 0h1M36 129h1m38 0h1m4 0h1m10 0h1m6 0h1m12 0h1m30 0h1m97 0h1m19 0h1m2 0h1m163 0h1m15 0h1m37 0h1m30 0h1m28 0h1m13 0h1m15 0h1m3 0h1h1m28 0h1M78 130h1m50 0h1m24 0h1m24 0h1m31 0h1m17 0h1m6 0h1m53 0h1m11 0h1m73 0h1h1m204 0h1M25 131h1m16 0h1m19 0h1m11 0h1m143 0h1m4 0h1m30 0h1h1m2 0h1m2 0h1m166 0h1m9 0h1m146 0h1M83 132h1m68 0h1m23 0h1m58 0h1m79 0h1m8 0h1h1m195 0h1m35 0h1M48 133h1m47 0h1m77 0h1m38 0h1m82 0h1m4 0h1m14 0h1m32 0h1m164 0h1m7 0h1m16 0h1m71 0h1M78 134h1m5 0h1m69 0h1m5 0h1m87 0h1m44 0h1m51 0h1m148 0h1m52 0h1m71 0h1M128 135h1m32 0h1m173 0h1m34 0h1m5 0h1m7 0h1m62 0h1m12 0h1m1 0h1m5 0h1m42 0h1m79 0h1m11 0h1m12 0h1M21 136h1m37 0h1m52 0h1m45 0h1m22 0h1m147 0h1m101 0h1m101 0h1m34 0h1m33 0h1M168 137h1m4 0h1m48 0h1m44 0h1m14 0h1m160 0h1m31 0h1m4 0h1m40 0h1m19 0h1m25 0h1M85 138h1m121 0h1m64 0h1m72 0h1m15 0h1m109 0h1m119 0h1M81 139h1m135 0h1m2 0h1m53 0h1m124 0h1m10 0h1m24 0h1m91 0h1m29 0h1M45 140h1m26 0h1m67 0h1m95 0h1m4 0h1m12 0h1m4 0h1m60 0h1m45 0h1m5 0h1m25 0h1m19 0h1m73 0h1m64 0h1M42 141h1m106 0h1m33 0h1m6 0h1m7 0h1m5 0h1m42 0h1m124 0h1m43 0h1m3 0h1m19 0h1m43 0h1m37 0h1m30 0h1m42 0h1M51 142h1h1m27 0h1m11 0h1m29 0h1m36 0h1m113 0h1m97 0h1m25 0h1m8 0h1m20 0h1m23 0h1m11 0h1m2 0h1m63 0h1M41 143h1m4 0h1m2 0h1m45 0h1m9 0h1m66 0h1m2 0h1m12 0h1m22 0h1m27 0h1m80 0h1m38 0h1m14 0h1m13 0h1m106 0h1m64 0h1M37 144h1m66 0h1m43 0h1m18 0h1m45 0h1m73 0h1m66 0h1m100 0h1m79 0h1m13 0h1m57 0h1m5 0h1M139 145h1m34 0h1m15 0h1m21 0h1m76 0h1m7 0h1m2 0h1m60 0h1m21 0h1m6 0h1m30 0h1m18 0h1h1m27 0h1m19 0h1m84 0h1M51 146h1m25 0h1m11 0h1m48 0h1m106 0h1m133 0h1m195 0h1m17 0h1M43 147h1m54 0h1m4 0h1m11 0h1m27 0h1m52 0h1m18 0h1m4 0h1m1 0h1h1m17 0h1m25 0h1m30 0h1m14 0h1m109 0h1m38 0h1m44 0h1m69 0h1m15 0h1m1 0h1M56 148h1m3 0h1m154 0h1m34 0h1m14 0h1m41 0h1m6 0h1m76 0h1m18 0h1m34 0h1m16 0h1m52 0h1m2 0h1m39 0h1m34 0h1m12 0h1M52 149h1h1m3 0h1m16 0h1m65 0h1m83 0h1m44 0h1m48 0h1m34 0h1m13 0h1m61 0h1m17 0h1m17 0h1m45 0h1m32 0h1m74 0h1M36 150h1m1 0h1m127 0h1m41 0h1m108 0h1m17 0h1m6 0h1m3 0h1m1 0h1m97 0h1m71 0h1m12 0h1M122 151h1m15 0h1m42 0h1m39 0h1m115 0h1m16 0h1m31 0h1m35 0h1m45 0h1m63 0h1m46 0h1M36 152h1m97 0h1m27 0h1m14 0h1m17 0h1m3 0h1m6 0h1m31 0h1m29 0h1m2 0h1m128 0h1m44 0h1m16 0h1m49 0h1m61 0h1m28 0h1M138 153h1m161 0h1m97 0h1m169 0h1m19 0h1m20 0h1M21 154h1m10 0h1m60 0h1m262 0h1m8 0h1m66 0h1m16 0h1m12 0h1m3 0h1m14 0h1m123 0h1m11 0h1M61 155h1m44 0h1m13 0h1m93 0h1m11 0h1m19 0h1m87 0h1m44 0h1m24 0h1m117 0h1m11 0h1m11 0h1m8 0h1m1 0h1m34 0h1m14 0h1m1 0h1M38 156h1m37 0h1h1m46 0h1m41 0h1m14 0h1m13 0h1m27 0h1m24 0h1m99 0h1m39 0h1m4 0h1m1 0h1m22 0h1m9 0h1h1m70 0h1m3 0h1m92 0h1M125 157h1m108 0h1m15 0h1m102 0h1m4 0h1m36 0h1m27 0h1m22 0h1m12 0h1m15 0h1m27 0h1m6 0h1m27 0h1m25 0h1M49 158h1m68 0h1m6 0h1m4 0h1m12 0h1m25 0h1m13 0h1m20 0h1m29 0h1m48 0h1m30 0h1m41 0h1m108 0h1m1 0h1m52 0h1m59 0h1M53 159h1m51 0h1m19 0h1m17 0h1m41 0h1m57 0h1m113 0h1m22 0h1m48 0h1m57 0h1m42 0h1h1h1m13 0h1M40 160h1m25 0h1m22 0h1m29 0h1m126 0h1m48 0h1m5 0h1m40 0h1m2 0h1m81 0h1m48 0h1m16 0h1m19 0h1m12 0h1M24 161h1m48 0h1m4 0h1m2 0h1m25 0h1m31 0h1m77 0h1m7 0h1m20 0h1m17 0h1m30 0h1m36 0h1m61 0h1m42 0h1m35 0h1m39 0h1m6 0h1m48 0h1m49 0h1M58 162h1m55 0h1m3 0h1m59 0h1m14 0h1m60 0h1h1m64 0h1m126 0h1m37 0h1m15 0h1m110 0h1m6 0h1M22 163h1m156 0h1m43 0h1m17 0h1m15 0h1m40 0h1m17 0h1m41 0h1m20 0h1m37 0h1m38 0h1m15 0h1m132 0h1M34 164h1m18 0h1m48 0h1m45 0h1m15 0h1m53 0h1m72 0h1m81 0h1m5 0h1m19 0h1m8 0h1m1 0h1m158 0h1m5 0h1M31 165h1m8 0h1m9 0h1m2 0h1m14 0h1m73 0h1m9 0h1m6 0h1m1 0h1m29 0h1m8 0h1m38 0h1m5 0h1m68 0h1m17 0h1m2 0h1m13 0h1m152 0h1m38 0h1m66 0h1m4 0h1M20 166h1m33 0h1m5 0h1m13 0h1m29 0h1m11 0h1m33 0h1m64 0h1m70 0h1m33 0h1m32 0h1m7 0h1m115 0h1m90 0h1M20 167h1m53 0h1m2 0h1m37 0h1m16 0h1m6 0h1m11 0h1m40 0h1m94 0h1m33 0h1m22 0h1m178 0h1m25 0h1m36 0h1M37 168h1m38 0h1m42 0h1m36 0h1m15 0h1m91 0h1m21 0h1m95 0h1m43 0h1m4 0h1m29 0h1m25 0h1m7 0h1m47 0h1m21 0h1m9 0h1m33 0h1M84 169h1m96 0h1m4 0h1m27 0h1m23 0h1m66 0h1m24 0h1m34 0h1m25 0h1m21 0h1m18 0h1m54 0h1m33 0h1m69 0h1m23 0h1M27 170h1m36 0h1m15 0h1m121 0h1m37 0h1m22 0h1m98 0h1m96 0h1m23 0h1m120 0h1M37 171h1m89 0h1m28 0h1m3 0h1m15 0h1m29 0h1m17 0h1m56 0h1m14 0h1m61 0h1m3 0h1m38 0h1m62 0h1m1 0h1m2 0h1m9 0h1h1m103 0h1m30 0h1M229 172h1m42 0h1m7 0h1m46 0h1m6 0h1m21 0h1m23 0h1m35 0h1m132 0h1m38 0h1h1M46 173h1m21 0h1m37 0h1m61 0h1m102 0h1m19 0h1m106 0h1m17 0h1m45 0h1m25 0h1m28 0h1m9 0h1m2 0h1m38 0h1M196 174h1m50 0h1m20 0h1m4 0h1m175 0h1m17 0h1m28 0h1m12 0h1m105 0h1M110 175h1m1 0h1m227 0h1m19 0h1m217 0h1m24 0h1M55 176h1m42 0h1m4 0h1m19 0h1m71 0h1m121 0h1m47 0h1m54 0h1m9 0h1m13 0h1m6 0h1m56 0h1m44 0h1m24 0h1m32 0h1h1M42 177h1m42 0h1m40 0h1m10 0h1m24 0h1m20 0h1m9 0h1m17 0h1m71 0h1m90 0h1m35 0h1m35 0h1m23 0h1m12 0h1m22 0h1m6 0h1m7 0h1m40 0h1m8 0h1m24 0h1M286 178h1m21 0h1m58 0h1m19 0h1h1m4 0h1m100 0h1m1 0h1m70 0h1m43 0h1M25 179h1m81 0h1m198 0h1m58 0h1m16 0h1m50 0h1m38 0h1m26 0h1m58 0h1M65 180h1h1m60 0h1m82 0h1m41 0h1m17 0h1m38 0h1m57 0h1m65 0h1m46 0h1m45 0h1m20 0h1m16 0h1m47 0h1h1M28 181h1m179 0h1m25 0h1m25 0h1m88 0h1m54 0h1m5 0h1m76 0h1m3 0h1m25 0h1m9 0h1m21 0h1m42 0h1M32 182h1m8 0h1m485 0h1m29 0h1m40 0h1m19 0h1M53 183h1m75 0h1m28 0h1m12 0h1m161 0h1m86 0h1m6 0h1m15 0h1m12 0h1m13 0h1h1m48 0h1m96 0h1M25 184h1m1 0h1m12 0h1m36 0h1m36 0h1m52 0h1m36 0h1m40 0h1m222 0h1m41 0h1m37 0h1m52 0h1M73 185h1m58 0h1m17 0h1m55 0h1m108 0h1m3 0h1m2 0h1m75 0h1m22 0h1m3 0h1m5 0h1m155 0h1m28 0h1m2 0h1M22 186h1m47 0h1m33 0h1m2 0h1m73 0h1m53 0h1h1m71 0h1m108 0h1m9 0h1m12 0h1m5 0h1m4 0h1m7 0h1m123 0h1M78 187h1m140 0h1m83 0h1m16 0h1m19 0h1m92 0h1m6 0h1m5 0h1m149 0h1m8 0h1M69 188h1m2 0h1m32 0h1m17 0h1m19 0h1m263 0h1m2 0h1m104 0h1m57 0h1M49 189h1m62 0h1m5 0h1m8 0h1m1 0h1m87 0h1m8 0h1m13 0h1m41 0h1m8 0h1m126 0h1m8 0h1m126 0h1m29 0h1m10 0h1m15 0h1m2 0h1M117 190h1m15 0h1m64 0h1m26 0h1m32 0h1m18 0h1m32 0h1m82 0h1m19 0h1m105 0h1m38 0h1m13 0h1M175 191h1m41 0h1m2 0h1m65 0h1m54 0h1m66 0h1m35 0h1m110 0h1M47 192h1m117 0h1m49 0h1m21 0h1m27 0h1m44 0h1m147 0h1m17 0h1M155 193h1m143 0h1m104 0h1M60 194h1m33 0h1m17 0h1m65 0h1m1 0h1m138 0h1m2 0h1m14 0h1m23 0h1m18 0h1m48 0h1m123 0h1M31 195h1h1m63 0h1m12 0h1m1 0h1m41 0h1m31 0h1m34 0h1m125 0h1m184 0h1m2 0h1M20 196h1m10 0h1m20 0h1m216 0h1m24 0h1m4 0h1m5 0h1m142 0h1m61 0h1m54 0h1M134 197h1m19 0h1m50 0h1m113 0h1m99 0h1h1m3 0h1m50 0h1m8 0h1m47 0h1M182 198h1m23 0h1m35 0h1m118 0h1m38 0h1m6 0h1m3 0h1m84 0h1M41 199h1m38 0h1m28 0h1m28 0h1m141 0h1m47 0h1m140 0h1m9 0h1m5 0h1m18 0h1m45 0h1m18 0h1M30 200h1m19 0h1m414 0h1m8 0h1m114 0h1M132 201h1m70 0h1m94 0h1m40 0h1m1 0h1m22 0h1m67 0h1m114 0h1M98 202h1m475 0h1M272 203h1m118 0h1m138 0h1m4 0h1m83 0h1M25 204h1m14 0h1m142 0h1m3 0h1m29 0h1m25 0h1m22 0h1m13 0h1m76 0h1m8 0h1m27 0h1m12 0h1M60 205h1m24 0h1m23 0h1m81 0h1m49 0h1m323 0h1M56 206h1m112 0h1m28 0h1m103 0h1m36 0h1m81 0h1M114 207h1m172 0h1m11 0h1m200 0h1M38 208h1m69 0h1m6 0h1m1 0h1m6 0h1m130 0h1m151 0h1m58 0h1m1 0h1M94 209h1m64 0h1m158 0h1m65 0h1m215 0h1M223 210h1m246 0h1m60 0h1m17 0h1M329 211h1M102 212h1m59 0h1m106 0h1m11 0h1m111 0h1m100 0h1m93 0h1M211 213h1m76 0h1m23 0h1m53 0h1m72 0h1M77 214h1m70 0h1m15 0h1m106 0h1m314 0h1M453 215h1M459 216h1m24 0h1M96 217h1m195 0h1m15 0h1M64 218h1m94 0h1m264 0h1m157 0h1M150 219h1m288 0h1M158 220h1m34 0h1m288 0h1m47 0h1M282 221h1m139 0h1m37 0h1m69 0h1M286 222h1m7 0h1M313 223h1m127 0h1m61 0h1m23 0h1M360 224h1M374 225h1m223 0h1M424 226h1m93 0h1m11 0h1M27 227h1m49 0h1m85 0h1m74 0h1m370 0h1M176 228h1m144 0h1M118 229h1m243 0h1m90 0h1m28 0h1m54 0h1M196 230h1m375 0h1M306 231h1m176 0h1M198 234h1m35 0h1M142 235h1M541 236h1M153 237h1M56 238h1m46 0h1m402 0h1M529 239h1M475 241h1m68 0h1M129 245h1M470 246h1M58 249h1m93 0h1M439 253h1M260 259h1m319 0h1"/>
<path stroke="#000060" d="M473 80h1M391 82h1M314 83h1M125 84h1m295 0h1M363 85h1m235 0h1M172 86h1m101 0h1m53 0h1m171 0h1M262 87h1m90 0h1M130 88h1m25 0h1M127 90h1m175 0h1m181 0h1m15 0h1M249 91h1m129 0h1m28 0h1m102 0h1M92 92h1m251 0h1m1 0h1M187 93h1m177 0h1M86 94h1m310 0h1m108 0h1M175 95h1m344 0h1M32 96h1m396 0h1m162 0h1M40 97h1m82 0h1m18 0h1m4 0h1m111 0h1m13 0h1m32 0h1m38 0h1m6 0h1m32 0h1M24 98h1m30 0h1m29 0h1m43 0h1m204 0h1m22 0h1m65 0h1m143 0h1M365 99h1m39 0h1M257 100h1M65 101h1m325 0h1M188 102h1m229 0h1M200 103h1m2 0h1m71 0h1m60 0h1m201 0h1M119 104h1h1m62 0h1m260 0h1m20 0h1m121 0h1M125 105h1m55 0h1M52 106h1m108 0h1m127 0h1m15 0h1m146 0h1m109 0h1M211 107h1m20 0h1m25 0h1m19 0h1m67 0h1m147 0h1M137 108h1m11 0h1m78 0h1M320 109h1m1 0h1m9 0h1m257 0h1m23 0h1M165 110h1m82 0h1m93 0h1m144 0h1m73 0h1M48 111h1m39 0h1m16 0h1m100 0h1m127 0h1m144 0h1m38 0h1m71 0h1M75 112h1m153 0h1m119 0h1m135 0h1m4 0h1m39 0h1M59 113h1m156 0h1m87 0h1m121 0h1m64 0h1m8 0h1m81 0h1M231 114h1m57 0h1m39 0h1m6 0h1m42 0h1m16 0h1m47 0h1m69 0h1m11 0h1m45 0h1M449 115h1h1m38 0h1m60 0h1m11 0h1M129 116h1m15 0h1m277 0h1m33 0h1M120 117h1m19 0h1m92 0h1m116 0h1m115 0h1m43 0h1m4 0h1m23 0h1m11 0h1m46 0h1m2 0h1m14 0h1M39 118h1m29 0h1m57 0h1m3 0h1m8 0h1m34 0h1m131 0h1m3 0h1m186 0h1m85 0h1M169 119h1m25 0h1m4 0h1m22 0h1h1m174 0h1m80 0h1m84 0h1m2 0h1M92 120h1m109 0h1m170 0h1m53 0h1m107 0h1m28 0h1M239 121h1m307 0h1m58 0h1M62 122h1m36 0h1m74 0h1m65 0h1m76 0h1m98 0h1m71 0h1m19 0h1m49 0h1m36 0h1M45 123h1m8 0h1m405 0h1m18 0h1h1M153 124h1m244 0h1m17 0h1m3 0h1m157 0h1M76 125h1m61 0h1m30 0h1m282 0h1M88 126h1m27 0h1m176 0h1m125 0h1m29 0h1m63 0h1m50 0h1M137 127h1m177 0h1m258 0h1M105 128h1m415 0h1m9 0h1m12 0h1m63 0h1M101 129h1m68 0h1m108 0h1h1h1m91 0h1m6 0h1m33 0h1m2 0h1m138 0h1m30 0h1M25 130h1m285 0h1m53 0h1m233 0h1M107 131h1m14 0h1m129 0h1m145 0h1m117 0h1m18 0h1M59 132h1m80 0h1m241 0h1m15 0h1m52 0h1m43 0h1m66 0h1m34 0h1M69 133h1m43 0h1m240 0h1m62 0h1m12 0h1m6 0h1m115 0h1m12 0h1M45 134h1m14 0h1m217 0h1h1m4 0h1m161 0h1m86 0h1m21 0h1M33 135h1m125 0h1m45 0h1m95 0h1m251 0h1m59 0h1M130 136h1m119 0h1m47 0h1m17 0h1m51 0h1m10 0h1m22 0h1m9 0h1m25 0h1M33 137h1m216 0h1m244 0h1m43 0h1m59 0h1m6 0h1M22 138h1m207 0h1m10 0h1m107 0h1m27 0h1m89 0h1m8 0h1m113 0h1m28 0h1M55 139h1m42 0h1m16 0h1m54 0h1m214 0h1m11 0h1M69 140h1m154 0h1m38 0h1m36 0h1m109 0h1m84 0h1m51 0h1m5 0h1M118 141h1h1m149 0h1m186 0h1m6 0h1m4 0h1m13 0h1m27 0h1m4 0h1m16 0h1m72 0h1M119 142h1m35 0h1m16 0h1m107 0h1m38 0h1m40 0h1m122 0h1m70 0h1m19 0h1M90 143h1m98 0h1m237 0h1m39 0h1m14 0h1m10 0h1m6 0h1m74 0h1m12 0h1M23 144h1m33 0h1m43 0h1m87 0h1m69 0h1m34 0h1m110 0h1m68 0h1m66 0h1m19 0h1M117 145h1m33 0h1m243 0h1m61 0h1m61 0h1m31 0h1M265 146h1m1 0h1m50 0h1h1m56 0h1m1 0h1m26 0h1m3 0h1m65 0h1m42 0h1m20 0h1m40 0h1M114 147h1m44 0h1m49 0h1m275 0h1m62 0h1m35 0h1M83 148h1m2 0h1m41 0h1m21 0h1m47 0h1m44 0h1m1 0h1m94 0h1m74 0h1m68 0h1m19 0h1M145 149h1m164 0h1m155 0h1m86 0h1m19 0h1m24 0h1M61 150h1m54 0h1m48 0h1m6 0h1m96 0h1m90 0h1m30 0h1m96 0h1m8 0h1m6 0h1m4 0h1m31 0h1m13 0h1M89 151h1m11 0h1m123 0h1m2 0h1m91 0h1m58 0h1m14 0h1m86 0h1m12 0h1m40 0h1m11 0h1m2 0h1m10 0h1m45 0h1h1M21 152h1m70 0h1m91 0h1m36 0h1m6 0h1m100 0h1m129 0h1m80 0h1m13 0h1M113 153h1m84 0h1m75 0h1m68 0h1m6 0h1m112 0h1m141 0h1M83 154h1m16 0h1m26 0h1m84 0h1m68 0h1m103 0h1m100 0h1m36 0h1m10 0h1m2 0h1m2 0h1m52 0h1M264 155h1m72 0h1m136 0h1h1m47 0h1m19 0h1m58 0h1h1M28 156h1m16 0h1m96 0h1m181 0h1m33 0h1m10 0h1m166 0h1m69 0h1M167 157h1m65 0h1m66 0h1m70 0h1m2 0h1m35 0h1m25 0h1m107 0h1M82 158h1m230 0h1m11 0h1m63 0h1m134 0h1m4 0h1M56 159h1m2 0h1m30 0h1m72 0h1m17 0h1m124 0h1m12 0h1m89 0h1m101 0h1m85 0h1M192 160h1m31 0h1m88 0h1m70 0h1m63 0h1m17 0h1m149 0h1M60 161h1m43 0h1m3 0h1m141 0h1m58 0h1m74 0h1m24 0h1m15 0h1m45 0h1m34 0h1m14 0h1m84 0h1M43 162h1m23 0h1m74 0h1m23 0h1m66 0h1m96 0h1m59 0h1m58 0h1m95 0h1M82 163h1m22 0h1m130 0h1m65 0h1m48 0h1m52 0h1m35 0h1m24 0h1m38 0h1M32 164h1m123 0h1m137 0h1m131 0h1m53 0h1m59 0h1m36 0h1m1 0h1m13 0h1m1 0h1M42 165h1m226 0h1M108 166h1m47 0h1m69 0h1m15 0h1m72 0h1m34 0h1m25 0h1m26 0h1m76 0h1M73 167h1m78 0h1m144 0h1m17 0h1m62 0h1m12 0h1m12 0h1m11 0h1m38 0h1m47 0h1M82 168h1m28 0h1m80 0h1m25 0h1m135 0h1m22 0h1m69 0h1m5 0h1m27 0h1m86 0h1m29 0h1m9 0h1m5 0h1M23 169h1m159 0h1m36 0h1m133 0h1m67 0h1m46 0h1M30 170h1m37 0h1m10 0h1m13 0h1m3 0h1m28 0h1m25 0h1m50 0h1m40 0h1m260 0h1M39 171h1m29 0h1m94 0h1h1m14 0h1m105 0h1m65 0h1m55 0h1m39 0h1m80 0h1m20 0h1m41 0h1M37 172h1m10 0h1m21 0h1m65 0h1m146 0h1m13 0h1m27 0h1m159 0h1m3 0h1m35 0h1M20 173h1m54 0h1m33 0h1m64 0h1m29 0h1m13 0h1m208 0h1m105 0h1m1 0h1m32 0h1M40 174h1m48 0h1m33 0h1m19 0h1m110 0h1m4 0h1m80 0h1m11 0h1m111 0h1m74 0h1m51 0h1M107 175h1m99 0h1m24 0h1m7 0h1m69 0h1h1m33 0h1m60 0h1m37 0h1m105 0h1m23 0h1M50 176h1m22 0h1m141 0h1m131 0h1m148 0h1m6 0h1M34 177h1m87 0h1m41 0h1m31 0h1m50 0h1m68 0h1m16 0h1m23 0h1m53 0h1m46 0h1m7 0h1m4 0h1m65 0h1m60 0h1M21 178h1m42 0h1m148 0h1m48 0h1m69 0h1m1 0h1m81 0h1m68 0h1m77 0h1m6 0h1m17 0h1M122 179h1m112 0h1m29 0h1m53 0h1m58 0h1m85 0h1m14 0h1m100 0h1m10 0h1m14 0h1M151 180h1m27 0h1m1 0h1m50 0h1m62 0h1m7 0h1m19 0h1m18 0h1m51 0h1m11 0h1m79 0h1m31 0h1m1 0h1m39 0h1M124 181h1m29 0h1m128 0h1m15 0h1m15 0h1m125 0h1m3 0h1m171 0h1M163 182h1m22 0h1m66 0h1m12 0h1m114 0h1m23 0h1m91 0h1h1m29 0h1m54 0h1M41 183h1m12 0h1m137 0h1m70 0h1m10 0h1m10 0h1m32 0h1m176 0h1m97 0h1M180 184h1m118 0h1m116 0h1m44 0h1m2 0h1m15 0h1m97 0h1m14 0h1m10 0h1M324 185h1h1m33 0h1m43 0h1m34 0h1m153 0h1M66 186h1m86 0h1m157 0h1m34 0h1m38 0h1m133 0h1m31 0h1M339 187h1m26 0h1m17 0h1m81 0h1m38 0h1m13 0h1m73 0h1M125 188h1m65 0h1m24 0h1m121 0h1m156 0h1M317 189h1m20 0h1m14 0h1m147 0h1M83 190h1m71 0h1m11 0h1m67 0h1m57 0h1m53 0h1m231 0h1m35 0h1M77 191h1m16 0h1m81 0h1m80 0h1m53 0h1m1 0h1m290 0h1M77 192h1m24 0h1m40 0h1m49 0h1m97 0h1m83 0h1m55 0h1m17 0h1m43 0h1m89 0h1m16 0h1m10 0h1M107 193h1m82 0h1m14 0h1m238 0h1m36 0h1m88 0h1M59 194h1m10 0h1m4 0h1m80 0h1m181 0h1m74 0h1m175 0h1M464 195h1m64 0h1m58 0h1M200 196h1m39 0h1m125 0h1m7 0h1m52 0h1m62 0h1h1m86 0h1M123 197h1m5 0h1m179 0h1m301 0h1M38 198h1m14 0h1m4 0h1m177 0h1m203 0h1M85 199h1m98 0h1m229 0h1m32 0h1m12 0h1m51 0h1m19 0h1M32 200h1m398 0h1m48 0h1m43 0h1m56 0h1M578 201h1M201 202h1m82 0h1m4 0h1M63 203h1m249 0h1m130 0h1M36 204h1m115 0h1m170 0h1m2 0h1m108 0h1m12 0h1m19 0h1m54 0h1M492 205h1m93 0h1M177 206h1m105 0h1M86 207h1m178 0h1m112 0h1M83 208h1m20 0h1m179 0h1m50 0h1m33 0h1m78 0h1m139 0h1m20 0h1M32 209h1m45 0h1m10 0h1m49 0h1m78 0h1m372 0h1M397 210h1m28 0h1M75 211h1m103 0h1m291 0h1m56 0h1m16 0h1M37 212h1m78 0h1m23 0h1m280 0h1m145 0h1m22 0h1M106 213h1m227 0h1m39 0h1m97 0h1m85 0h1M214 214h1m256 0h1m51 0h1m73 0h1M72 215h1m112 0h1m66 0h1m364 0h1M267 216h1m17 0h1M235 217h1m238 0h1m67 0h1M124 218h1m15 0h1m190 0h1M116 219h1m279 0h1M119 220h1M211 221h1m21 0h1m75 0h1m126 0h1M72 222h1m16 0h1m125 0h1m35 0h1m30 0h1m43 0h1m23 0h1M263 223h1m82 0h1m184 0h1M38 224h1m146 0h1m323 0h1m10 0h1M86 225h1m173 0h1m128 0h1h1M231 226h1m12 0h1m57 0h1m49 0h1M143 227h1m120 0h1m71 0h1m69 0h1m95 0h1M403 228h1m44 0h1M450 229h1M123 234h1m370 0h1M345 237h1M497 238h1M463 239h1M74 240h1m5 0h1m525 0h1M165 241h1m48 0h1m116 0h1M79 242h1m259 0h1m229 0h1M474 243h1m54 0h1M37 245h1m50 0h1m296 0h1M298 246h1M563 248h1M371 249h1M95 263h1"/>
<path stroke="#000070" d="M345 80h1m66 0h1m18 0h1m22 0h1m46 0h1m51 0h1m11 0h1M361 81h1M38 82h1m43 0h1m392 0h1M243 83h1m26 0h1m50 0h1m93 0h1m21 0h1m116 0h1m29 0h1M226 84h1m182 0h1M238 85h1m16 0h1m152 0h1m121 0h1m89 0h1M57 86h1m322 0h1M236 87h1m143 0h1m77 0h1m154 0h1M153 88h1m105 0h1m72 0h1m15 0h1m60 0h1m115 0h1M140 89h1m34 0h1m165 0h1m77 0h1m158 0h1M67 90h1m305 0h1m21 0h1m5 0h1m79 0h1m45 0h1M164 91h1m119 0h1m16 0h1m236 0h1m44 0h1M198 92h1m112 0h1m136 0h1M79 93h1m33 0h1m32 0h1m233 0h1m53 0h1m108 0h1M35 94h1m504 0h1M100 95h1m22 0h1m118 0h1m243 0h1M90 96h1m215 0h1M35 97h1m576 0h1M143 98h1m36 0h1m110 0h1m43 0h1m1 0h1m15 0h1m36 0h1M170 99h1m183 0h1M24 100h1m67 0h1m38 0h1m50 0h1m60 0h1m295 0h1M68 101h1m104 0h1m280 0h1M69 102h1m140 0h1m147 0h1m92 0h1m43 0h1M122 103h1m181 0h1m48 0h1m214 0h1m29 0h1M168 104h1m54 0h1m247 0h1M511 105h1M130 106h1m26 0h1m260 0h1m81 0h1m13 0h1m97 0h1M58 107h1m121 0h1m179 0h1m146 0h1m51 0h1M93 109h1m80 0h1m32 0h1m8 0h1m147 0h1m12 0h1m10 0h1h1M77 110h1m28 0h1m27 0h1m189 0h1m38 0h1m89 0h1m124 0h1M436 111h1m13 0h1m159 0h1M92 112h1m10 0h1m259 0h1m6 0h1m52 0h1m89 0h1M105 113h1m92 0h1m203 0h1m81 0h1m28 0h1M260 114h1m96 0h1m23 0h1m95 0h1m103 0h1M406 115h1m6 0h1m76 0h1m15 0h1M47 116h1m8 0h1m108 0h1m10 0h1m23 0h1m50 0h1m265 0h1m69 0h1M284 117h1m46 0h1m94 0h1m103 0h1m60 0h1M158 118h1m228 0h1m38 0h1M164 119h1M76 120h1m1 0h1m55 0h1m110 0h1m32 0h1m18 0h1m22 0h1m269 0h1M283 121h1m266 0h1M55 122h1m97 0h1m52 0h1m289 0h1m54 0h1m5 0h1M273 123h1m2 0h1m85 0h1m157 0h1M44 124h1M200 125h1M282 126h1m62 0h1m87 0h1M186 127h1m78 0h1m263 0h1m22 0h1M246 128h1m145 0h1m82 0h1m17 0h1m16 0h1m99 0h1M70 129h1M52 130h1m26 0h1m30 0h1m66 0h1m226 0h1M49 131h1m74 0h1m158 0h1m16 0h1m61 0h1m37 0h1m33 0h1M53 132h1m33 0h1m69 0h1m5 0h1m112 0h1m27 0h1m79 0h1m10 0h1m24 0h1m11 0h1m13 0h1m68 0h1m14 0h1m50 0h1M101 133h1m118 0h1m70 0h1m206 0h1m94 0h1M176 134h1m73 0h1m158 0h1m4 0h1m162 0h1M151 135h1m14 0h1m128 0h1m6 0h1m109 0h1m135 0h1M137 136h1m72 0h1m202 0h1m140 0h1M385 137h1m164 0h1m37 0h1M105 138h1m27 0h1m170 0h1m131 0h1m86 0h1M20 139h1m43 0h1m30 0h1m305 0h1M84 140h1m10 0h1m57 0h1m316 0h1m11 0h1m28 0h1m90 0h1M227 141h1m179 0h1m30 0h1m5 0h1m19 0h1m63 0h1M54 142h1m97 0h1m151 0h1m117 0h1m100 0h1M28 143h1m579 0h1M70 144h1m2 0h1m9 0h1m96 0h1m6 0h1m197 0h1m25 0h1m198 0h1M131 145h1m218 0h1m163 0h1M94 146h1m413 0h1M104 147h1m51 0h1m293 0h1m108 0h1m18 0h1M91 148h1m20 0h1m9 0h1m70 0h1m89 0h1M101 149h1m37 0h1m34 0h1m81 0h1M92 150h1m264 0h1m98 0h1M523 151h1m10 0h1M424 152h1m6 0h1m17 0h1m89 0h1m15 0h1m37 0h1m1 0h1M132 153h1m289 0h1M24 154h1m332 0h1m49 0h1m43 0h1m59 0h1m91 0h1M218 155h1m119 0h1m62 0h1m118 0h1m33 0h1m17 0h1m5 0h1M36 156h1m22 0h1m23 0h1m66 0h1m40 0h1m232 0h1m12 0h1m64 0h1M203 157h1m235 0h1m163 0h1M56 158h1m457 0h1M46 159h1m27 0h1m154 0h1m8 0h1m62 0h1m139 0h1M112 160h1M82 161h1m36 0h1m101 0h1m84 0h1m18 0h1m10 0h1m164 0h1m58 0h1m48 0h1M79 162h1m329 0h1m140 0h1m2 0h1M93 163h1m98 0h1m125 0h1m214 0h1m9 0h1m1 0h1M227 164h1m57 0h1m91 0h1m94 0h1m37 0h1M138 165h1M124 166h1m265 0h1m81 0h1M50 167h1m91 0h1m203 0h1m61 0h1m12 0h1m105 0h1M30 168h1m23 0h1m50 0h1m141 0h1m46 0h1m13 0h1m3 0h1m22 0h1m57 0h1m111 0h1M199 169h1m267 0h1m78 0h1M70 170h1m160 0h1m136 0h1m88 0h1m73 0h1m2 0h1M99 171h1m105 0h1m30 0h1m67 0h1m136 0h1m13 0h1M72 172h1m81 0h1m5 0h1m19 0h1m340 0h1m17 0h1M252 173h1m8 0h1m40 0h1m122 0h1m54 0h1M67 174h1m16 0h1m217 0h1m11 0h1m247 0h1M246 175h1m124 0h1m209 0h1m17 0h1M169 176h1m32 0h1m7 0h1m271 0h1m101 0h1M210 177h1m54 0h1m9 0h1m79 0h1m227 0h1M70 178h1m374 0h1M255 179h1m129 0h1m25 0h1m98 0h1m3 0h1m37 0h1M100 180h1m190 0h1m181 0h1m43 0h1M84 181h1m47 0h1m26 0h1m90 0h1m158 0h1m134 0h1m13 0h1M31 182h1m331 0h1m30 0h1M64 183h1m443 0h1M414 184h1M134 185h1m175 0h1M207 186h1m53 0h1m118 0h1m54 0h1M23 188h1m212 0h1M82 189h1m196 0h1m170 0h1M237 190h1m370 0h1M352 191h1M430 193h1M41 194h1m47 0h1m141 0h1m15 0h1M506 195h1M213 196h1m237 0h1m150 0h1M260 197h1m179 0h1m69 0h1m88 0h1M157 198h1m341 0h1M52 199h1m63 0h1m175 0h1M75 200h1m140 0h1m21 0h1m36 0h1m209 0h1M164 201h1m260 0h1m48 0h1m83 0h1M219 202h1m202 0h1M511 203h1M569 204h1M129 205h1m281 0h1m118 0h1M173 206h1M141 207h1M129 208h1m209 0h1m52 0h1m74 0h1M505 210h1M370 211h1m220 0h1m9 0h1M296 212h1m50 0h1M96 213h1M107 214h1m237 0h1M250 215h1M104 216h1m488 0h1M444 217h1M206 218h1m195 0h1m82 0h1M67 220h1M81 221h1m4 0h1m242 0h1m258 0h1M27 222h1m247 0h1M159 223h1m73 0h1M414 224h1M469 225h1m23 0h1M409 226h1M543 230h1M208 231h1m13 0h1m235 0h1M59 232h1m126 0h1M79 234h1m381 0h1m62 0h1M294 235h1M332 236h1m93 0h1M458 237h1M95 238h1m16 0h1M29 240h1m110 0h1M487 242h1M619 244h1M503 248h1M486 251h1M432 263h1"/>
<path stroke="#000080" d="M398 80h1M163 81h1m213 0h1M66 82h1m48 0h1m17 0h1m34 0h1m323 0h1M161 83h1M361 84h1m30 0h1m57 0h1m35 0h1m31 0h1M122 85h1m134 0h1m160 0h1M183 86h1m17 0h1m66 0h1M349 87h1M575 89h1M89 90h1m258 0h1m122 0h1m4 0h1m65 0h1M235 91h1m210 0h1m74 0h1M64 92h1M516 94h1M72 95h1m64 0h1m11 0h1m146 0h1m316 0h1M462 96h1m29 0h1m108 0h1M390 97h1M61 98h1m450 0h1m104 0h1M597 99h1M42 100h1M132 101h1m191 0h1M477 102h1M53 103h1m237 0h1m54 0h1m101 0h1M258 104h1m187 0h1M28 105h1M109 106h1m16 0h1m174 0h1M228 107h1m144 0h1m141 0h1m49 0h1m20 0h1M168 108h1m323 0h1m49 0h1m57 0h1M177 109h1m54 0h1m180 0h1m144 0h1M43 110h1m27 0h1M170 111h1m44 0h1m7 0h1m340 0h1M122 112h1m61 0h1m327 0h1M67 113h1m261 0h1m122 0h1m158 0h1M138 114h1m333 0h1M206 115h1m75 0h1m34 0h1m271 0h1M147 116h1m46 0h1m193 0h1m7 0h1m137 0h1M107 117h1m425 0h1M308 118h1m98 0h1m62 0h1m46 0h1m67 0h1M72 119h1m32 0h1m24 0h1m74 0h1m185 0h1M180 120h1m8 0h1m44 0h1m88 0h1m46 0h1m208 0h1M131 121h1M41 122h1m403 0h1M199 123h1M73 124h1M163 125h1m4 0h1m183 0h1M64 126h1m128 0h1M270 127h1m268 0h1M152 128h1m204 0h1M482 129h1m41 0h1m65 0h1M114 130h1m138 0h1m143 0h1m62 0h1m126 0h1M72 131h1m3 0h1m95 0h1m52 0h1m121 0h1m22 0h1m56 0h1m140 0h1m46 0h1M77 132h1m102 0h1M151 133h1m5 0h1m106 0h1m100 0h1m45 0h1m206 0h1M223 134h1m39 0h1m38 0h1m27 0h1M96 135h1M46 136h1m19 0h1m75 0h1m170 0h1m114 0h1M175 137h1M152 138h1m158 0h1m55 0h1m19 0h1m144 0h1M186 139h1m433 0h1M486 140h1M133 141h1m46 0h1M492 142h1M207 144h1m123 0h1m269 0h1M163 145h1m210 0h1m87 0h1M33 146h1m196 0h1m350 0h1M84 148h1m2 0h1m406 0h1M227 149h1m53 0h1m295 0h1M91 150h1m406 0h1m7 0h1m29 0h1m17 0h1M25 151h1m61 0h1m211 0h1m15 0h1M336 152h1m142 0h1M164 153h1m385 0h1M20 154h1m9 0h1m141 0h1M41 155h1m29 0h1m157 0h1m197 0h1M188 156h1m10 0h1m152 0h1m14 0h1M119 157h1m431 0h1M86 158h1m85 0h1m71 0h1M104 159h1m340 0h1m35 0h1M21 160h1m21 0h1m227 0h1M31 161h1m88 0h1m21 0h1m249 0h1m203 0h1M203 162h1m78 0h1m172 0h1m23 0h1M228 163h1m142 0h1m60 0h1M78 164h1m519 0h1M286 165h1m243 0h1M227 166h1M71 167h1m45 0h1m89 0h1M253 168h1m122 0h1M302 169h1m120 0h1M78 171h1m509 0h1M267 172h1m259 0h1M221 173h1m262 0h1M169 175h1m422 0h1M110 176h1M422 177h1m130 0h1M228 178h1m70 0h1m109 0h1m23 0h1M309 182h1m237 0h1m65 0h1M43 185h1M46 187h1m44 0h1M55 188h1m406 0h1m13 0h1M460 189h1M211 190h1M228 191h1M159 192h1M87 194h1M125 195h1M254 198h1M86 199h1M54 200h1M430 201h1m137 0h1M176 202h1m309 0h1m111 0h1M42 203h1m148 0h1M371 204h1M400 205h1M595 206h1M320 207h1M248 209h1m243 0h1M356 214h1M363 215h1m170 0h1M202 217h1M222 219h1m326 0h1M292 222h1M335 230h1M186 231h1M354 233h1M84 241h1M499 242h1M275 243h1M350 246h1m144 0h1M72 251h1M339 255h1"/>
<path stroke="#000090" d="M210 80h1M433 81h1m131 0h1M417 82h1m98 0h1m56 0h1M339 83h1M145 85h1m267 0h1m2 0h1m185 0h1M176 86h1m166 0h1m247 0h1M169 87h1m299 0h1M69 88h1m195 0h1M57 89h1m6 0h1m176 0h1m131 0h1m16 0h1M168 90h1m167 0h1m45 0h1m227 0h1M21 91h1m3 0h1m137 0h1m377 0h1m66 0h1m1 0h1M149 92h1M235 93h1m44 0h1m2 0h1m332 0h1M128 94h1M324 95h1m255 0h1m2 0h1M173 96h1m319 0h1m85 0h1M244 97h1m52 0h1m62 0h1m255 0h1M67 98h1m9 0h1m97 0h1m84 0h1m247 0h1M24 99h1m417 0h1m145 0h1M178 100h1m346 0h1M27 101h1m61 0h1m131 0h1m1 0h1m112 0h1m240 0h1M102 102h1m84 0h1m225 0h1m43 0h1m125 0h1M20 103h1m12 0h1m156 0h1m112 0h1M244 104h1m368 0h1M102 105h1m360 0h1M115 106h1m125 0h1M131 107h1m203 0h1m127 0h1M463 108h1M120 109h1m57 0h1m77 0h1m7 0h1m47 0h1M502 110h1M591 111h1M155 112h1m26 0h1m15 0h1m401 0h1M82 113h1m53 0h1m198 0h1m89 0h1M443 114h1M133 115h1m366 0h1m117 0h1M340 116h1m20 0h1m143 0h1M194 117h1m37 0h1m344 0h1M132 118h1m137 0h1M381 119h1M262 120h1m198 0h1m8 0h1M93 121h1m287 0h1m29 0h1m112 0h1m78 0h1M34 123h1m49 0h1m64 0h1m39 0h1m184 0h1m29 0h1M212 124h1m22 0h1M181 125h1m287 0h1M92 126h1m164 0h1M308 127h1M106 128h1m136 0h1m110 0h1M24 129h1m41 0h1m186 0h1m15 0h1m23 0h1m47 0h1m111 0h1m96 0h1m37 0h1M47 130h1m309 0h1m146 0h1m49 0h1m64 0h1M344 131h1m23 0h1m234 0h1M48 132h1m169 0h1m109 0h1M89 133h1m393 0h1m21 0h1m46 0h1M326 134h1m95 0h1m48 0h1M232 135h1m34 0h1M169 136h1m64 0h1m29 0h1M23 137h1m95 0h1m1 0h1m63 0h1m26 0h1m2 0h1m132 0h1m40 0h1m169 0h1M123 138h1m255 0h1m48 0h1M358 140h1m204 0h1M299 142h1m55 0h1m191 0h1M29 143h1M462 144h1M104 145h1M231 146h1M227 147h1m240 0h1M45 148h1m481 0h1M47 149h1m331 0h1m147 0h1M280 150h1m190 0h1M187 151h1m325 0h1M115 153h1m101 0h1m3 0h1m83 0h1m150 0h1M119 154h1m93 0h1m144 0h1M377 155h1m132 0h1m63 0h1M331 157h1M515 158h1M32 159h1m203 0h1m160 0h1M187 160h1m84 0h1m325 0h1M111 161h1m96 0h1m149 0h1m121 0h1M366 163h1M387 164h1m81 0h1m20 0h1m124 0h1M56 165h1m3 0h1M323 166h1M30 167h1m568 0h1M200 169h1m202 0h1M216 170h1M59 171h1M85 172h1M61 173h1M410 174h1M363 175h1m86 0h1M94 177h1m219 0h1m27 0h1m231 0h1M210 179h1m233 0h1m95 0h1M48 180h1M89 181h1m391 0h1M565 183h1M311 184h1m290 0h1M288 185h1M423 186h1M89 187h1m226 0h1m107 0h1M311 188h1M350 189h1M48 191h1M462 192h1m121 0h1M355 194h1M283 195h1M272 197h1m75 0h1M596 199h1M179 203h1M164 206h1M216 207h1m2 0h1m247 0h1M544 209h1M460 213h1M48 214h1m456 0h1M349 215h1M368 217h1M41 219h1M147 221h1M172 236h1"/>
<path stroke="#0000a0" d="M61 80h1m276 0h1M286 81h1m21 0h1m38 0h1M24 82h1m65 0h1M34 84h1m97 0h1m80 0h1m314 0h1M78 85h1M62 86h1m237 0h1m154 0h1M26 87h1m238 0h1M244 88h1m111 0h1M250 89h1m147 0h1m77 0h1m100 0h1M277 90h1m175 0h1m143 0h1M221 92h1m273 0h1m10 0h1M185 94h1m6 0h1m312 0h1m93 0h1M277 95h1m11 0h1m229 0h1M62 96h1m108 0h1m93 0h1m28 0h1M133 98h1m80 0h1M617 99h1M111 100h1m456 0h1M271 101h1m116 0h1m52 0h1M137 102h1m439 0h1m24 0h1M217 103h1m90 0h1m146 0h1m47 0h1M42 104h1m13 0h1m9 0h1m211 0h1M79 105h1m152 0h1M260 106h1m200 0h1m111 0h1M41 107h1m74 0h1m246 0h1m160 0h1M88 108h1m201 0h1m54 0h1m24 0h1M71 109h1m30 0h1M82 110h1m162 0h1m101 0h1M414 111h1h1m31 0h1m42 0h1M482 112h1m63 0h1M499 113h1m8 0h1m93 0h1M26 114h1m77 0h1m73 0h1m26 0h1m244 0h1M75 115h1m260 0h1m133 0h1m73 0h1M387 117h1M151 118h1m382 0h1M260 119h1m37 0h1m130 0h1M22 120h1m546 0h1M284 121h1m22 0h1M240 123h1M202 124h1m93 0h1m7 0h1m64 0h1M46 125h1m37 0h1m426 0h1M60 126h1M67 127h1m372 0h1M367 128h1m15 0h1m189 0h1m33 0h1M176 129h1m123 0h1m75 0h1m30 0h1m58 0h1M49 130h1m70 0h1m262 0h1m212 0h1m11 0h1M414 131h1m94 0h1M561 132h1M588 133h1M217 134h1m252 0h1m51 0h1M201 135h1m152 0h1m230 0h1m33 0h1M450 136h1M316 137h1M39 138h1M582 139h1M242 140h1m5 0h1M123 141h1M111 142h1m256 0h1M164 143h1m251 0h1M169 144h1m209 0h1M294 145h1m242 0h1M541 146h1M135 147h1m1 0h1m309 0h1M145 148h1m100 0h1m225 0h1M150 149h1m54 0h1m140 0h1m5 0h1m17 0h1m25 0h1M55 150h1m389 0h1M90 151h1m50 0h1m55 0h1M438 152h1M337 154h1m134 0h1M136 155h1m14 0h1M75 156h1m346 0h1M154 157h1h1M157 158h1m232 0h1M133 159h1M548 160h1M229 161h1m222 0h1M52 165h1m356 0h1h1M88 167h1m153 0h1m337 0h1M618 168h1M129 170h1m278 0h1M395 171h1M279 172h1m330 0h1M207 174h1m290 0h1m38 0h1M411 178h1M57 179h1M262 180h1m112 0h1M27 181h1M100 184h1m206 0h1m189 0h1M30 185h1m3 0h1M286 187h1M399 188h1M396 190h1M30 192h1m554 0h1M468 193h1M309 195h1m77 0h1M601 197h1M246 200h1m19 0h1M490 206h1M244 208h1M530 210h1M153 212h1M525 216h1M516 230h1M465 231h1M151 238h1m283 0h1M23 242h1"/>
<path stroke="#0000b0" d="M584 80h1M279 89h1M400 91h1M563 102h1M155 103h1M117 112h1m403 0h1M71 117h1M22 119h1M203 123h1M578 151h1M382 158h1M408 160h1"/>
<path stroke="#0000c0" d="M272 80h1M246 82h1m110 0h1m34 0h1M313 86h1M134 88h1m193 0h1M269 89h1M304 92h1M109 93h1M463 97h1M372 100h1M379 105h1M165 109h1M549 110h1M23 113h1m260 0h1M99 114h1M342 117h1m16 0h1M539 118h1M294 121h1M452 123h1M493 124h1M367 133h1M321 141h1M601 143h1M64 168h1"/>
<path stroke="#0000d0" d="M113 80h1m138 0h1M76 81h1m241 0h1M484 82h1M291 83h1m138 0h1M137 86h1m228 0h1M336 87h1M508 88h1M521 90h1M102 91h1M213 100h1M249 102h1m103 0h1M308 106h1M435 107h1M92 111h1M486 112h1M458 113h1M96 114h1M476 121h1M88 122h1m189 0h1M273 124h1M494 130h1M94 134h1m164 0h1m48 0h1M67 144h1M426 157h1"/>
<path stroke="#0000e0" d="M73 80h1m173 0h1m65 0h1m175 0h1m99 0h1M164 81h1M272 82h1m79 0h1m227 0h1M34 83h1m414 0h1M151 84h1M552 85h1M191 86h1m52 0h1m119 0h1m69 0h1M202 87h1M238 88h1m267 0h1M84 89h1m146 0h1m62 0h1M351 92h1m7 0h1M24 96h1M62 97h1m98 0h1m276 0h1m23 0h1M574 98h1m5 0h1M21 100h1M137 101h1M553 102h1M372 108h1M389 114h1M36 115h1m163 0h1M64 117h1m36 0h1M357 122h1M194 124h1m20 0h1M226 125h1M100 126h1m12 0h1M425 128h1M255 129h1m253 0h1M582 131h1M404 134h1M33 139h1m575 0h1M83 153h1M484 154h1M194 179h1"/>
<path stroke="#0000ff" d="M87 80h1m136 0h1m136 0h1m32 0h1m42 0h1m65 0h1m3 0h1M186 81h1m9 0h1m97 0h1m57 0h1m68 0h1m36 0h1m156 0h1M88 82h1m273 0h1m42 0h1M226 83h1m66 0h1m177 0h1m102 0h1M513 84h1M202 85h1h1m116 0h1m208 0h1M204 86h1m37 0h1m75 0h1m41 0h1m163 0h1m51 0h1M61 87h1M148 88h1m67 0h1m158 0h1m128 0h1m107 0h1M37 89h1m196 0h1m292 0h1M78 90h1m37 0h1m64 0h1m46 0h1m2 0h1M65 91h1m367 0h1m158 0h1M245 92h1m32 0h1M123 93h1m38 0h1m34 0h1m38 0h1m131 0h1m62 0h1M322 94h1m168 0h1m36 0h1M483 95h1m10 0h1m41 0h1m33 0h1M73 96h1m103 0h1m17 0h1m17 0h1m229 0h1m60 0h1M537 97h1M208 98h1m45 0h1M264 99h1m259 0h1M280 101h1m97 0h1M434 102h1m70 0h1M89 103h1m194 0h1m282 0h1M484 105h1m131 0h1M41 106h1m24 0h1m52 0h1M575 107h1M162 108h1m41 0h1M74 109h1m24 0h1m244 0h1m145 0h1M144 110h1M520 111h1M80 112h1m264 0h1m75 0h1M70 113h1M101 114h1m216 0h1M58 115h1M299 116h1M252 117h1M212 119h1m2 0h1m29 0h1m247 0h1M238 120h1m9 0h1M102 121h1m369 0h1M51 122h1m61 0h1M575 123h1M280 124h1M159 125h1M262 126h1M141 127h1m157 0h1M128 130h1m238 0h1m165 0h1m70 0h1M61 132h1m549 0h1M100 133h1M567 135h1M210 138h1M289 139h1m283 0h1M40 142h1M619 144h1M610 145h1M572 147h1M459 149h1M302 153h1M544 154h1M416 155h1M349 156h1m99 0h1M312 158h1M164 160h1M149 163h1M232 173h1M34 175h1M408 180h1M130 197h1M510 206h1"/>
</g>
<g fill="#000"><rect x="58" y="80" width="24" height="12"/><rect x="118" y="80" width="24" height="12"/><rect x="178" y="80" width="24" height="12"/><rect x="238" y="80" width="24" height="12"/><rect x="298" y="80" width="24" height="12"/><rect x="358" y="80" width="24" height="12"/><rect x="418" y="80" width="24" height="12"/><rect x="478" y="80" width="24" height="12"/><rect x="538" y="80" width="24" height="12"/><rect x="598" y="80" width="24" height="12"/></g>
<g fill="#ff0"><rect x="16" y="90" width="2" height="1"/><rect x="624" y="90" width="2" height="1"/><rect x="16" y="100" width="2" height="1"/><rect x="624" y="100" width="2" height="1"/><rect x="16" y="110" width="2" height="1"/><rect x="624" y="110" width="2" height="1"/><rect x="16" y="120" width="2" height="1"/><rect x="624" y="120" width="2" height="1"/><rect x="14" y="130" width="4" height="1"/><rect x="624" y="130" width="4" height="1"/><rect x="16" y="140" width="2" height="1"/><rect x="624" y="140" width="2" height="1"/><rect x="16" y="150" width="2" height="1"/><rect x="624" y="150" width="2" height="1"/><rect x="16" y="160" width="2" height="1"/><rect x="624" y="160" width="2" height="1"/><rect x="16" y="170" width="2" height="1"/><rect x="624" y="170" width="2" height="1"/><rect x="14" y="180" width="4" height="1"/><rect x="624" y="180" width="4" height="1"/><rect x="16" y="190" width="2" height="1"/><rect x="624" y="190" width="2" height="1"/><rect x="16" y="200" width="2" height="1"/><rect x="624" y="200" width="2" height="1"/><rect x="16" y="210" width="2" height="1"/><rect x="624" y="210" width="2" height="1"/><rect x="16" y="220" width="2" height="1"/><rect x="624" y="220" width="2" height="1"/><rect x="14" y="230" width="4" height="1"/><rect x="624" y="230" width="4" height="1"/><rect x="16" y="240" width="2" height="1"/><rect x="624" y="240" width="2" height="1"/><rect x="16" y="250" width="2" height="1"/><rect x="624" y="250" width="2" height="1"/><rect x="16" y="260" width="2" height="1"/><rect x="624" y="260" width="2" height="1"/><rect x="16" y="270" width="2" height="1"/><rect x="624" y="270" width="2" height="1"/><rect x="14" y="280" width="4" height="1"/><rect x="624" y="280" width="4" height="1"/><rect x="16" y="290" width="2" height="1"/><rect x="624" y="290" width="2" height="1"/><rect x="16" y="300" width="2" height="1"/><rect x="624" y="300" width="2" height="1"/><rect x="16" y="310" width="2" height="1"/><rect x="624" y="310" width="2" height="1"/><rect x="16" y="320" width="2" height="1"/><rect x="624" y="320" width="2" height="1"/><rect x="14" y="330" width="4" height="1"/><rect x="624" y="330" width="4" height="1"/><rect x="16" y="340" width="2" height="1"/><rect x="624" y="340" width="2" height="1"/><rect x="16" y="350" width="2" height="1"/><rect x="624" y="350" width="2" height="1"/><rect x="16" y="360" width="2" height="1"/><rect x="624" y="360" width="2" height="1"/><rect x="16" y="370" width="2" height="1"/><rect x="624" y="370" width="2" height="1"/><rect x="14" y="380" width="4" height="1"/><rect x="624" y="380" width="4" height="1"/><rect x="16" y="390" width="2" height="1"/><rect x="624" y="390" width="2" height="1"/><rect x="80" y="92" width="1" height="3"/><rect x="140" y="92" width="1" height="3"/><rect x="200" y="92" width="1" height="3"/><rect x="260" y="92" width="1" height="3"/><rect x="320" y="92" width="1" height="3"/><rect x="380" y="92" width="1" height="3"/><rect x="440" y="92" width="1" height="3"/><rect x="500" y="92" width="1" height="3"/><rect x="560" y="92" width="1" height="3"/><rect x="620" y="92" width="1" height="3"/></g>
<g fill="#808080">
<rect x="19" y="271" width="1" height="75"/>
<rect x="20" y="370" width="601" height="1"/>
<rect x="20" y="380" width="601" height="1"/>
<rect x="20" y="390" width="601" height="1"/>
</g>
<rect x="20" y="399" width="601" height="1" fill="#0ff"/>
<rect x="307" y="393" width="1" height="7" fill="#0ff"/>
<rect x="437" y="397" width="1" height="3" fill="#0ff"/>
<rect x="477" y="385" width="1" height="15" fill="#ff0"/>
<rect x="307" y="300" width="1" height="1" fill="#00e0e0"/>
<rect x="307" y="302" width="1" height="1" fill="#0000ff"/>
<rect x="299" y="295" width="1" height="1" fill="#000058"/>
<rect x="218" y="297" width="1" height="1" fill="#000058"/>
<rect x="228" y="297" width="1" height="1" fill="#000098"/>
<rect x="228" y="298" width="1" height="1" fill="#000048"/>
<rect x="437" y="297" width="1" height="2" fill="#0000a0"/>
<rect x="477" y="296" width="1" height="1" fill="#0000ff"/>
<rect x="477" y="297" width="1" height="1" fill="#ff0060"/>
<rect x="477" y="298" width="1" height="1" fill="#ffff00"/>
</svg>
<div id="txt">
<div class="s g" style="left:10px;top:0px;font-size:14px;line-height:16px;word-spacing:5.6px;filter:url(#cr2)">H R O F F T</div>
<div class="s yl g" style="left:123.9px;top:0px;filter:url(#cr2)">1<span style="margin-left:.7px;margin-right:-.4px">.</span>0.0</div>
<div class="l" style="left:10px;top:19px">0705250440<span class="t">.png</span></div>
<div class="l" style="left:10px;top:39px">07<span class="t">.</span>05<span class="t">.</span>25<span class="t"> </span>04<span class="t">:</span>40</div>
<div class="l" style="left:125px;top:24px"><span class="w">m</span><span class="t">eteor</span></div>
<div class="l" style="left:140px;top:39px">1</div>
<div class="l" style="left:179.5px;top:4px"><span class="t">Observer           : </span><span class="w">M</span><span class="t">asayuki Kobayashi</span></div>
<div class="l" style="left:179.5px;top:16px"><span class="t">Receiving Location : Ogata-vill. Akita-Pref. JAPAN (</span>139<span class="t">.</span>96<span class="t">E, </span>40<span class="t">.</span>02<span class="t">N)</span></div>
<div class="l" style="left:179.5px;top:28px"><span class="t">Receiver           : ICO</span><span class="w">M</span><span class="t"> IC-</span>575<span class="t"> </span>53<span class="t">.</span>7492<span class="t">(@LCD)</span><span class="w">M</span><span class="t">Hz USB</span></div>
<div class="l" style="left:179.5px;top:40px"><span class="t">Receiving antenna  : A</span>504<span class="t">HB(yagi </span>4<span class="t">el)</span></div>
<div class="s yl" style="top:72px;letter-spacing:0"><span style="letter-spacing:1px">k</span>Hz</div>
<div class="s yl" style="top:121px">1.1</div>
<div class="s yl" style="top:171px">1.0</div>
<div class="s yl" style="top:221px">0.9</div>
<div class="s yl" style="top:271px">0.8</div>
<div class="s yl" style="top:321px">0.7</div>
<div class="s yl" style="top:371px">0.6</div>
<div class="l xl" style="left:58px">0441</div>
<div class="l xl" style="left:118px">0442</div>
<div class="l xl" style="left:178px">0443</div>
<div class="l xl" style="left:238px">0444</div>
<div class="l xl" style="left:298px">0445</div>
<div class="l xl" style="left:358px">0446</div>
<div class="l xl" style="left:418px">0447</div>
<div class="l xl" style="left:478px">0448</div>
<div class="l xl" style="left:538px">0449</div>
<div class="l xl" style="left:598px">0450</div>
</div>
</body></html>
